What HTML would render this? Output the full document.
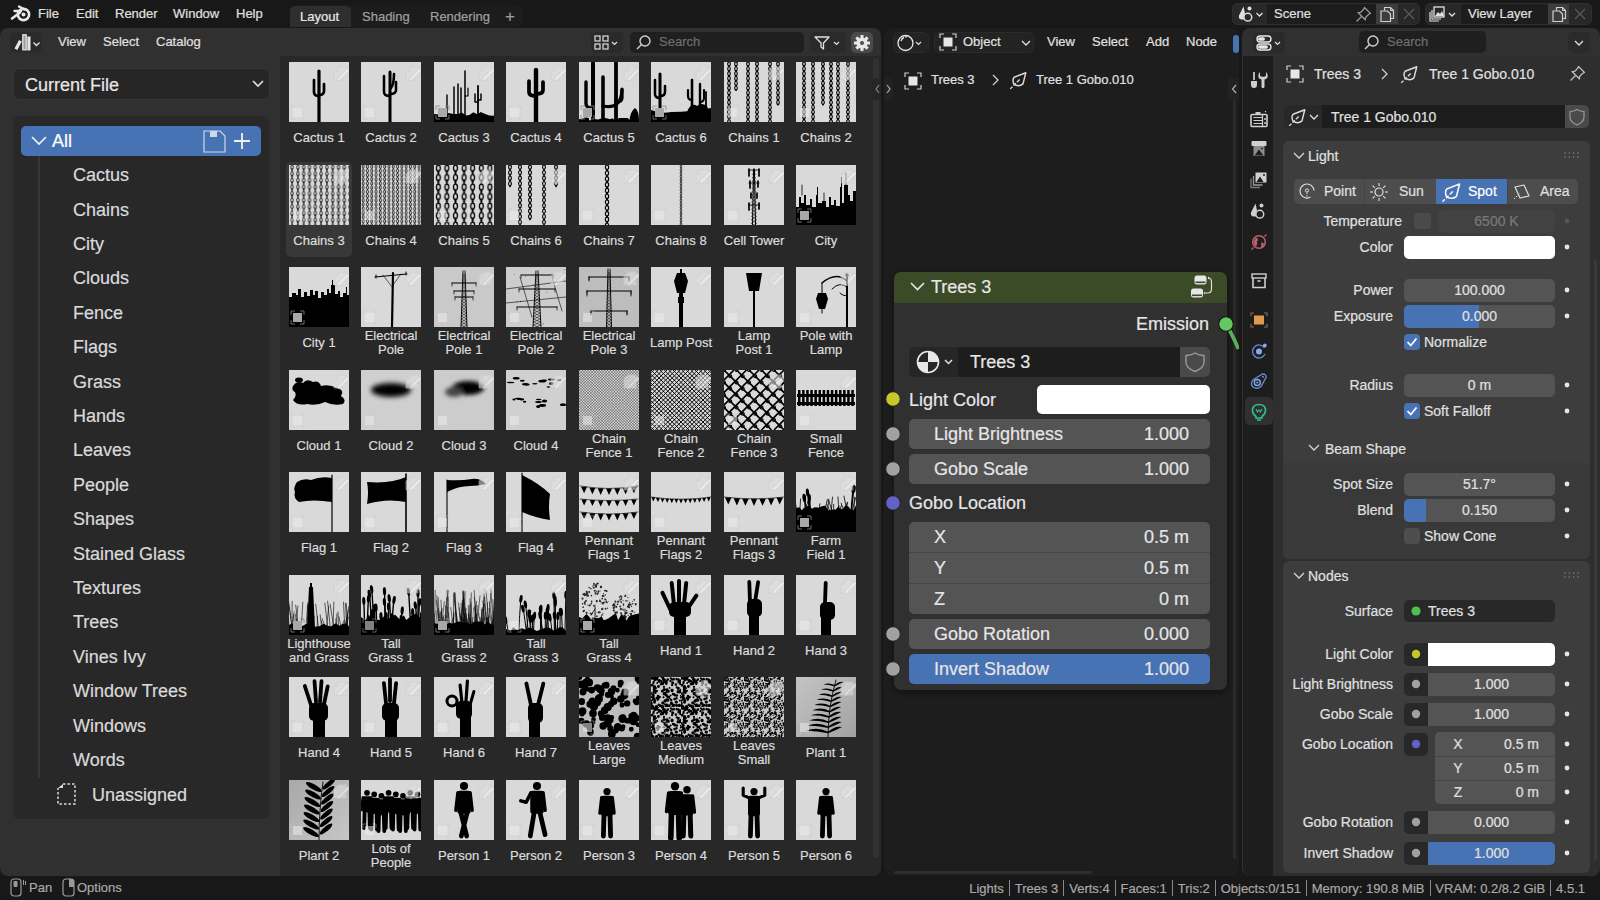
<!DOCTYPE html><html><head><meta charset="utf-8"><style>
html,body{margin:0;padding:0;}
body{width:1600px;height:900px;overflow:hidden;position:relative;background:#181818;font-family:"Liberation Sans",sans-serif;}
.t{position:absolute;white-space:nowrap;-webkit-text-stroke:0.2px currentColor;}
.b{position:absolute;}
svg{overflow:visible}
.sb-sep{display:inline-block;width:1px;height:16px;background:#8a8a8a;margin:0 4.8px 0 5.1px;}
</style></head><body>

<svg class="b" style="left:9px;top:3.3px;" width="24" height="20" viewBox="0 0 24 20">
<circle cx="14.5" cy="11.5" r="5.6" fill="none" stroke="#e8e8e8" stroke-width="2.6"/>
<circle cx="14.5" cy="11.5" r="2" fill="#e8e8e8"/>
<path d="M3 15.5 L11 9.5" stroke="#e8e8e8" stroke-width="2.6" stroke-linecap="round"/>
<path d="M5.5 8 L12 8" stroke="#e8e8e8" stroke-width="2.4" stroke-linecap="round"/>
<path d="M10 3.5 L15.5 6.5" stroke="#e8e8e8" stroke-width="2.4" stroke-linecap="round"/>
</svg>
<div class="t" style="left:38px;top:5.0px;font-size:13px;line-height:18px;color:#e0e0e0;">File</div>
<div class="t" style="left:76px;top:5.0px;font-size:13px;line-height:18px;color:#e0e0e0;">Edit</div>
<div class="t" style="left:115px;top:5.0px;font-size:13px;line-height:18px;color:#e0e0e0;">Render</div>
<div class="t" style="left:173px;top:5.0px;font-size:13px;line-height:18px;color:#e0e0e0;">Window</div>
<div class="t" style="left:236px;top:5.0px;font-size:13px;line-height:18px;color:#e0e0e0;">Help</div>
<div class="b" style="left:290px;top:5px;width:233px;height:22px;background:#1c1c1c;border-radius:6px;"></div>
<div class="b" style="left:290px;top:6px;width:61px;height:21px;background:#2e2e2e;border-radius:0px;border-radius:5px 5px 1px 1px;"></div>
<div class="t" style="left:300px;top:8.0px;font-size:13px;line-height:18px;color:#e8e8e8;">Layout</div>
<div class="t" style="left:362px;top:8.0px;font-size:13px;line-height:18px;color:#a0a0a0;">Shading</div>
<div class="t" style="left:430px;top:8.0px;font-size:13px;line-height:18px;color:#a0a0a0;">Rendering</div>
<div class="t" style="left:505px;top:4.5px;font-size:17px;line-height:23px;color:#9a9a9a;">+</div>
<div class="b" style="left:1232px;top:3px;width:188px;height:22px;background:#282828;border-radius:5px;border:1px solid #2e2e2e;box-sizing:border-box;"></div>
<div class="b" style="left:1267px;top:4px;width:109px;height:20px;background:#1d1d1d;border-radius:0px;"></div>
<div class="b" style="left:1376px;top:4px;width:22px;height:20px;background:#3d3d3d;border-radius:0px;"></div>
<div class="t" style="left:1274px;top:5.0px;font-size:13px;line-height:18px;color:#e0e0e0;">Scene</div>
<svg class="b" style="left:1237px;top:5px;" width="30" height="18" viewBox="0 0 30 18"><path d="M6.5 1.5 L2 10.5 Q1.2 14.5 5 14.5 L7.5 14.5 Q6 12 7.2 9.5 L8 8.5 Z" fill="#e0e0e0"/><circle cx="10.8" cy="12.2" r="3.9" fill="none" stroke="#e0e0e0" stroke-width="1.5"/><circle cx="12.5" cy="3.5" r="2" fill="#e0e0e0"/><path d="M19.5 8 l3 3 l3 -3" fill="none" stroke="#e0e0e0" stroke-width="1.3"/></svg>
<svg class="b" style="left:1355px;top:5px;" width="18" height="18" viewBox="0 0 18 18"><path d="M9.5 2.5 L15.5 8.5 L13.5 9.5 L10.5 12.5 L10.5 15 L3 7.5 L5.5 7.5 L8.5 4.5 Z" fill="none" stroke="#9a9a9a" stroke-width="1.2" stroke-linejoin="round"/><path d="M6.5 11.5 L1.5 16.5" stroke="#9a9a9a" stroke-width="1.2"/></svg>
<svg class="b" style="left:1379px;top:6px;" width="16" height="17" viewBox="0 0 16 17"><path d="M5.5 4.5 V1.5 H11.5 L14.5 4.5 V12.5 H11.5" fill="none" stroke="#d0d0d0" stroke-width="1.2"/><path d="M11.5 1.5 V4.5 H14.5" fill="none" stroke="#d0d0d0" stroke-width="1"/><path d="M2 5 H8.5 L11.5 8 V15.5 H2 Z" fill="none" stroke="#d0d0d0" stroke-width="1.2"/></svg>
<svg class="b" style="left:1402px;top:7px;" width="14" height="14" viewBox="0 0 14 14"><path d="M2 2 L12 12 M12 2 L2 12" stroke="#5a5a5a" stroke-width="1.3"/></svg>
<div class="b" style="left:1425px;top:3px;width:167px;height:22px;background:#282828;border-radius:5px;border:1px solid #2e2e2e;box-sizing:border-box;"></div>
<div class="b" style="left:1461px;top:4px;width:87px;height:20px;background:#1d1d1d;border-radius:0px;"></div>
<div class="b" style="left:1548px;top:4px;width:21px;height:20px;background:#3d3d3d;border-radius:0px;"></div>
<div class="t" style="left:1468px;top:5.0px;font-size:13px;line-height:18px;color:#e0e0e0;">View Layer</div>
<svg class="b" style="left:1429px;top:5px;" width="32" height="18" viewBox="0 0 32 18">
<rect x="5" y="2" width="10" height="10" fill="#282828" stroke="#e0e0e0" stroke-width="1.3"/>
<path d="M3 5 V14 H12" fill="none" stroke="#e0e0e0" stroke-width="1.2"/>
<path d="M1 7 V16 H10" fill="none" stroke="#e0e0e0" stroke-width="1.2"/>
<path d="M6 11 L9 7 L11 9 L13 6 L15 11 Z" fill="#e0e0e0"/>
<path d="M20 8 l3 3 l3 -3" fill="none" stroke="#e0e0e0" stroke-width="1.3"/></svg>
<svg class="b" style="left:1551px;top:6px;" width="16" height="17" viewBox="0 0 16 17"><path d="M5.5 4.5 V1.5 H11.5 L14.5 4.5 V12.5 H11.5" fill="none" stroke="#d0d0d0" stroke-width="1.2"/><path d="M11.5 1.5 V4.5 H14.5" fill="none" stroke="#d0d0d0" stroke-width="1"/><path d="M2 5 H8.5 L11.5 8 V15.5 H2 Z" fill="none" stroke="#d0d0d0" stroke-width="1.2"/></svg>
<svg class="b" style="left:1573px;top:7px;" width="14" height="14" viewBox="0 0 14 14"><path d="M2 2 L12 12 M12 2 L2 12" stroke="#5a5a5a" stroke-width="1.3"/></svg>
<svg class="b" style="left:8px;top:877px;" width="48" height="22" viewBox="0 0 48 22">
<rect x="3" y="2" width="10" height="17" rx="3" fill="none" stroke="#9a9a9a" stroke-width="1.2"/>
<rect x="5.5" y="4" width="4" height="6" rx="1" fill="#9a9a9a"/>
<path d="M15.5 3 V8 M17.5 4 V8" stroke="#9a9a9a" stroke-width="1"/></svg>
<div class="t" style="left:29px;top:879.0px;font-size:13px;line-height:18px;color:#a8a8a8;">Pan</div>
<svg class="b" style="left:60px;top:877px;" width="22" height="22" viewBox="0 0 22 22">
<rect x="3" y="2" width="11" height="17" rx="3" fill="none" stroke="#9a9a9a" stroke-width="1.2"/>
<path d="M9 2 H11 Q14 2 14 5 V10 H9 Z" fill="#9a9a9a"/></svg>
<div class="t" style="left:77px;top:879.0px;font-size:13px;line-height:18px;color:#a8a8a8;">Options</div>
<div class="t" style="right:15px;top:878px;height:20px;display:flex;align-items:center;font-size:13px;color:#a8a8a8;-webkit-text-stroke:0.2px #a8a8a8;"><span>Lights</span><span class="sb-sep"></span><span>Trees 3</span><span class="sb-sep"></span><span>Verts:4</span><span class="sb-sep"></span><span>Faces:1</span><span class="sb-sep"></span><span>Tris:2</span><span class="sb-sep"></span><span>Objects:0/151</span><span class="sb-sep"></span><span>Memory: 190.8 MiB</span><span class="sb-sep"></span><span>VRAM: 0.2/8.2 GiB</span><span class="sb-sep"></span><span>4.5.1</span></div>
<div class="b" style="left:0px;top:28px;width:881px;height:848px;background:#303030;border-radius:8px;"></div>
<div class="b" style="left:280px;top:56px;width:601px;height:820px;background:#282828;border-radius:0px;border-radius:0 0 8px 0;"></div>
<div class="b" style="left:10px;top:32px;width:32px;height:21px;background:#2a2a2a;border-radius:5px;border:1px solid #2c2c2c;box-sizing:border-box;"></div>
<svg class="b" style="left:13px;top:33px;" width="30" height="20" viewBox="0 0 30 20">
<path d="M1.5 15.5 L6 7 L8.8 8.6 L4.3 17 Z" fill="#e6e6e6"/>
<rect x="9.8" y="1.8" width="3.4" height="15" fill="#9a9a9a" stroke="#e6e6e6" stroke-width="1.3"/>
<rect x="14.3" y="3.5" width="3.2" height="14" fill="#e6e6e6"/>
<path d="M20.5 9.5 l3 3 l3 -3" fill="none" stroke="#e6e6e6" stroke-width="1.3"/></svg>
<div class="t" style="left:58px;top:33.0px;font-size:13px;line-height:18px;color:#e0e0e0;">View</div>
<div class="t" style="left:103px;top:33.0px;font-size:13px;line-height:18px;color:#e0e0e0;">Select</div>
<div class="t" style="left:156px;top:33.0px;font-size:13px;line-height:18px;color:#e0e0e0;">Catalog</div>
<div class="b" style="left:591px;top:32px;width:32px;height:21px;background:#2a2a2a;border-radius:5px;"></div>
<svg class="b" style="left:593px;top:33px;" width="30" height="20" viewBox="0 0 30 20">
<rect x="2" y="3" width="5" height="5" fill="none" stroke="#e0e0e0" stroke-width="1.2"/>
<rect x="10" y="3" width="5" height="5" fill="none" stroke="#e0e0e0" stroke-width="1.2"/>
<rect x="2" y="11" width="5" height="5" fill="none" stroke="#e0e0e0" stroke-width="1.2"/>
<rect x="10" y="11" width="5" height="5" fill="none" stroke="#e0e0e0" stroke-width="1.2"/>
<path d="M19 9 l2.5 2.5 l2.5 -2.5" fill="none" stroke="#e0e0e0" stroke-width="1.2"/></svg>
<div class="b" style="left:630px;top:32px;width:174px;height:21px;background:#1f1f1f;border-radius:5px;"></div>
<svg class="b" style="left:634px;top:33px;" width="20" height="20" viewBox="0 0 20 20"><circle cx="11" cy="8" r="5" fill="none" stroke="#d0d0d0" stroke-width="1.4"/><path d="M7.5 11.5 L3 16" stroke="#d0d0d0" stroke-width="1.5"/></svg>
<div class="t" style="left:659px;top:33.0px;font-size:13px;line-height:18px;color:#6e6e6e;">Search</div>
<div class="b" style="left:810px;top:32px;width:36px;height:21px;background:#2a2a2a;border-radius:5px;"></div>
<svg class="b" style="left:812px;top:33px;" width="34" height="20" viewBox="0 0 34 20"><path d="M3 4 H17 L11.5 10 V16 L9 14 V10 Z" fill="none" stroke="#e0e0e0" stroke-width="1.3" stroke-linejoin="round"/><path d="M22 9 l2.5 2.5 l2.5 -2.5" fill="none" stroke="#e0e0e0" stroke-width="1.2"/></svg>
<div class="b" style="left:851px;top:32px;width:22px;height:21px;background:#4a4a4a;border-radius:5px;"></div>
<svg class="b" style="left:852px;top:33px;" width="20" height="20" viewBox="0 0 20 20"><g transform="translate(10,10)"><circle r="5.6" fill="#e8e8e8"/>
<g fill="#e8e8e8"><rect x="-1.5" y="-8" width="3" height="4" transform="rotate(0)"/><rect x="-1.5" y="-8" width="3" height="4" transform="rotate(45)"/><rect x="-1.5" y="-8" width="3" height="4" transform="rotate(90)"/><rect x="-1.5" y="-8" width="3" height="4" transform="rotate(135)"/><rect x="-1.5" y="-8" width="3" height="4" transform="rotate(180)"/><rect x="-1.5" y="-8" width="3" height="4" transform="rotate(225)"/><rect x="-1.5" y="-8" width="3" height="4" transform="rotate(270)"/><rect x="-1.5" y="-8" width="3" height="4" transform="rotate(315)"/></g>
<circle r="2" fill="#4a4a4a"/></g></svg>
<div class="b" style="left:13px;top:68px;width:257px;height:32px;background:#262626;border-radius:6px;border:1px solid #363636;box-sizing:border-box;"></div>
<div class="t" style="left:25px;top:72.8px;font-size:18px;line-height:25px;color:#e8e8e8;">Current File</div>
<svg class="b" style="left:251px;top:78px;" width="14" height="12" viewBox="0 0 14 12"><path d="M2 3 L7 8 L12 3" fill="none" stroke="#e0e0e0" stroke-width="1.6"/></svg>
<div class="b" style="left:13px;top:116px;width:256px;height:703px;background:#282828;border-radius:6px;"></div>
<div class="b" style="left:21px;top:126px;width:240px;height:30px;background:#4772b3;border-radius:5px;"></div>
<svg class="b" style="left:29px;top:132px;" width="20" height="18" viewBox="0 0 20 18"><path d="M3 5 L10 12 L17 5" fill="none" stroke="#f0f0f0" stroke-width="1.7"/></svg>
<div class="t" style="left:52px;top:128.5px;font-size:18px;line-height:25px;color:#ffffff;">All</div>
<svg class="b" style="left:201px;top:128px;" width="28" height="26" viewBox="0 0 28 26"><path d="M3 3 H19 L24 8 V24 H3 Z" fill="none" stroke="#cfd8e8" stroke-width="1.2"/><rect x="9" y="3" width="7" height="6" fill="#cfd8e8"/></svg>
<svg class="b" style="left:232px;top:130px;" width="20" height="22" viewBox="0 0 20 22"><path d="M10 3 V19 M2 11 H18" stroke="#f0f0f0" stroke-width="1.8"/></svg>
<div class="b" style="left:38px;top:156px;width:2px;height:622px;background:#363636;border-radius:0px;"></div>
<div class="t" style="left:73px;top:163.1px;font-size:18px;line-height:25px;color:#dadada;">Cactus</div>
<div class="t" style="left:73px;top:197.5px;font-size:18px;line-height:25px;color:#dadada;">Chains</div>
<div class="t" style="left:73px;top:231.9px;font-size:18px;line-height:25px;color:#dadada;">City</div>
<div class="t" style="left:73px;top:266.3px;font-size:18px;line-height:25px;color:#dadada;">Clouds</div>
<div class="t" style="left:73px;top:300.7px;font-size:18px;line-height:25px;color:#dadada;">Fence</div>
<div class="t" style="left:73px;top:335.1px;font-size:18px;line-height:25px;color:#dadada;">Flags</div>
<div class="t" style="left:73px;top:369.5px;font-size:18px;line-height:25px;color:#dadada;">Grass</div>
<div class="t" style="left:73px;top:403.9px;font-size:18px;line-height:25px;color:#dadada;">Hands</div>
<div class="t" style="left:73px;top:438.3px;font-size:18px;line-height:25px;color:#dadada;">Leaves</div>
<div class="t" style="left:73px;top:472.7px;font-size:18px;line-height:25px;color:#dadada;">People</div>
<div class="t" style="left:73px;top:507.1px;font-size:18px;line-height:25px;color:#dadada;">Shapes</div>
<div class="t" style="left:73px;top:541.5px;font-size:18px;line-height:25px;color:#dadada;">Stained Glass</div>
<div class="t" style="left:73px;top:575.9px;font-size:18px;line-height:25px;color:#dadada;">Textures</div>
<div class="t" style="left:73px;top:610.3px;font-size:18px;line-height:25px;color:#dadada;">Trees</div>
<div class="t" style="left:73px;top:644.7px;font-size:18px;line-height:25px;color:#dadada;">Vines Ivy</div>
<div class="t" style="left:73px;top:679.1px;font-size:18px;line-height:25px;color:#dadada;">Window Trees</div>
<div class="t" style="left:73px;top:713.5px;font-size:18px;line-height:25px;color:#dadada;">Windows</div>
<div class="t" style="left:73px;top:747.9px;font-size:18px;line-height:25px;color:#dadada;">Words</div>
<svg class="b" style="left:55px;top:782px;" width="24" height="26" viewBox="0 0 24 26"><path d="M3 6 L8 2 V6 Z" fill="#dadada"/><path d="M8 2 H20 V22 H3 V6" fill="none" stroke="#dadada" stroke-width="1.5" stroke-dasharray="2.5 2"/></svg>
<div class="t" style="left:92px;top:783.0px;font-size:18px;line-height:25px;color:#dadada;">Unassigned</div>
<svg width="0" height="0" style="position:absolute"><defs><filter id="bl1" x="-50%" y="-50%" width="200%" height="200%"><feGaussianBlur stdDeviation="2"/></filter><filter id="bl2" x="-50%" y="-50%" width="200%" height="200%"><feGaussianBlur stdDeviation="2.6"/></filter></defs></svg>
<div class="b" style="left:286px;top:162px;width:66px;height:95px;background:#383838;border-radius:5px;"></div>
<svg class="b" style="left:289px;top:62px;overflow:hidden;" width="60" height="60" viewBox="0 0 60 60"><rect width="60" height="60" fill="#d9d9d9"/><path d="M30 60 V9" fill="none" stroke="#000" stroke-width="3.2" stroke-linecap="round" stroke-linejoin="round"/><path d="M30 34 Q25 34 25 30 V18" fill="none" stroke="#000" stroke-width="2.72" stroke-linecap="round" stroke-linejoin="round"/><path d="M30 33 Q35 33 35 29 V22" fill="none" stroke="#000" stroke-width="2.72" stroke-linecap="round" stroke-linejoin="round"/><g opacity="0.6"><path d="M49 5 H57 V18 H45 V9 Z" fill="#e0e0e0" stroke="#cdcdcd" stroke-width="0.9"/><path d="M49 5 V9 H45" fill="none" stroke="#cdcdcd" stroke-width="0.9"/><path d="M50 17 L58.5 8.5" stroke="#c8c8c8" stroke-width="4.2" stroke-linecap="round"/><path d="M50 17 L58.5 8.5" stroke="#f2f2f2" stroke-width="2.8" stroke-linecap="round"/></g><g opacity="0.55"><rect x="4" y="46" width="9" height="9" fill="#ececec"/><path d="M2 48 V44 H6 M11 44 H15 V48 M2 53 V57 H6 M11 57 H15 V53" stroke="#c8c8c8" stroke-width="0.8" fill="none"/></g></svg>
<div class="t" style="left:279.0px;width:80px;text-align:center;top:128.8px;font-size:13px;line-height:18px;color:#dcdcdc;">Cactus 1</div>
<svg class="b" style="left:361px;top:62px;overflow:hidden;" width="60" height="60" viewBox="0 0 60 60"><rect width="60" height="60" fill="#d9d9d9"/><path d="M29 60 V10" fill="none" stroke="#000" stroke-width="3.0" stroke-linecap="round" stroke-linejoin="round"/><path d="M29 34 Q23 34 23 30 V14" fill="none" stroke="#000" stroke-width="2.55" stroke-linecap="round" stroke-linejoin="round"/><path d="M29 32 Q35 32 35 28 V20" fill="none" stroke="#000" stroke-width="2.55" stroke-linecap="round" stroke-linejoin="round"/><path d="M30 26 Q33 22 33 12" fill="none" stroke="#000" stroke-width="2.6" stroke-linecap="round" stroke-linejoin="round"/><g opacity="0.6"><path d="M49 5 H57 V18 H45 V9 Z" fill="#e0e0e0" stroke="#cdcdcd" stroke-width="0.9"/><path d="M49 5 V9 H45" fill="none" stroke="#cdcdcd" stroke-width="0.9"/><path d="M50 17 L58.5 8.5" stroke="#c8c8c8" stroke-width="4.2" stroke-linecap="round"/><path d="M50 17 L58.5 8.5" stroke="#f2f2f2" stroke-width="2.8" stroke-linecap="round"/></g><g opacity="0.55"><rect x="4" y="46" width="9" height="9" fill="#ececec"/><path d="M2 48 V44 H6 M11 44 H15 V48 M2 53 V57 H6 M11 57 H15 V53" stroke="#c8c8c8" stroke-width="0.8" fill="none"/></g></svg>
<div class="t" style="left:351.0px;width:80px;text-align:center;top:128.8px;font-size:13px;line-height:18px;color:#dcdcdc;">Cactus 2</div>
<svg class="b" style="left:434px;top:62px;overflow:hidden;" width="60" height="60" viewBox="0 0 60 60"><rect width="60" height="60" fill="#d9d9d9"/><path d="M0 60 V52 L2.7 52.2 L5.8 52.4 L9.7 50.3 L11.7 53.3 L14.5 50.9 L19.5 51.9 L24.0 51.9 L27.9 50.6 L31.8 53.5 L35.4 53.0 L39.4 50.3 L43.7 52.4 L46.6 50.1 L51.2 51.9 L55.4 53.5 L59.5 53.7 L60.0 53.2 L60 60 Z" fill="#000"/><path d="M31 55 V9" fill="none" stroke="#000" stroke-width="1.5" stroke-linecap="round" stroke-linejoin="round"/><path d="M31 34 H34 V26" fill="none" stroke="#000" stroke-width="1.2000000000000002" stroke-linecap="round" stroke-linejoin="round"/><path d="M20 55 V25" fill="none" stroke="#000" stroke-width="1.5" stroke-linecap="round" stroke-linejoin="round"/><path d="M24 55 V22" fill="none" stroke="#000" stroke-width="1.5" stroke-linecap="round" stroke-linejoin="round"/><path d="M27 55 V26" fill="none" stroke="#000" stroke-width="1.5" stroke-linecap="round" stroke-linejoin="round"/><path d="M44 55 V24" fill="none" stroke="#000" stroke-width="1.8" stroke-linecap="round" stroke-linejoin="round"/><path d="M44 40 H41 V32" fill="none" stroke="#000" stroke-width="1.4400000000000002" stroke-linecap="round" stroke-linejoin="round"/><path d="M44 38 H47 V32" fill="none" stroke="#000" stroke-width="1.4400000000000002" stroke-linecap="round" stroke-linejoin="round"/><path d="M13 55 V33" fill="none" stroke="#000" stroke-width="1.4" stroke-linecap="round" stroke-linejoin="round"/><g opacity="0.6"><path d="M49 5 H57 V18 H45 V9 Z" fill="#e0e0e0" stroke="#cdcdcd" stroke-width="0.9"/><path d="M49 5 V9 H45" fill="none" stroke="#cdcdcd" stroke-width="0.9"/><path d="M50 17 L58.5 8.5" stroke="#c8c8c8" stroke-width="4.2" stroke-linecap="round"/><path d="M50 17 L58.5 8.5" stroke="#f2f2f2" stroke-width="2.8" stroke-linecap="round"/></g><rect x="4" y="46" width="9" height="9" fill="#a8a8a8"/><path d="M2 48 V44 H6 M11 44 H15 V48 M2 53 V57 H6 M11 57 H15 V53" stroke="#888" stroke-width="0.8" fill="none"/></svg>
<div class="t" style="left:424.0px;width:80px;text-align:center;top:128.8px;font-size:13px;line-height:18px;color:#dcdcdc;">Cactus 3</div>
<svg class="b" style="left:506px;top:62px;overflow:hidden;" width="60" height="60" viewBox="0 0 60 60"><rect width="60" height="60" fill="#d9d9d9"/><path d="M30 60 V8" fill="none" stroke="#000" stroke-width="4.4" stroke-linecap="round" stroke-linejoin="round"/><path d="M30 34 Q23 34 23 30 V19" fill="none" stroke="#000" stroke-width="3.74" stroke-linecap="round" stroke-linejoin="round"/><path d="M30 32 Q37 32 37 28 V20" fill="none" stroke="#000" stroke-width="3.74" stroke-linecap="round" stroke-linejoin="round"/><g opacity="0.6"><path d="M49 5 H57 V18 H45 V9 Z" fill="#e0e0e0" stroke="#cdcdcd" stroke-width="0.9"/><path d="M49 5 V9 H45" fill="none" stroke="#cdcdcd" stroke-width="0.9"/><path d="M50 17 L58.5 8.5" stroke="#c8c8c8" stroke-width="4.2" stroke-linecap="round"/><path d="M50 17 L58.5 8.5" stroke="#f2f2f2" stroke-width="2.8" stroke-linecap="round"/></g><g opacity="0.55"><rect x="4" y="46" width="9" height="9" fill="#ececec"/><path d="M2 48 V44 H6 M11 44 H15 V48 M2 53 V57 H6 M11 57 H15 V53" stroke="#c8c8c8" stroke-width="0.8" fill="none"/></g></svg>
<div class="t" style="left:496.0px;width:80px;text-align:center;top:128.8px;font-size:13px;line-height:18px;color:#dcdcdc;">Cactus 4</div>
<svg class="b" style="left:579px;top:62px;overflow:hidden;" width="60" height="60" viewBox="0 0 60 60"><rect width="60" height="60" fill="#d9d9d9"/><path d="M0 60 V57 L3.9 57.7 L8.3 58.3 L12.5 58.3 L14.6 56.9 L19.4 57.4 L24.1 55.8 L27.5 56.2 L31.1 57.2 L33.2 56.2 L36.0 58.2 L40.3 56.0 L44.7 55.9 L48.6 55.9 L50.6 58.1 L53.2 56.1 L58.1 58.1 L60.0 58.4 L60 60 Z" fill="#000"/><path d="M14 60 V1" fill="none" stroke="#000" stroke-width="4" stroke-linecap="round" stroke-linejoin="round"/><path d="M14 46 Q7 46 7 42 V20" fill="none" stroke="#000" stroke-width="3.4" stroke-linecap="round" stroke-linejoin="round"/><path d="M24 60 V15" fill="none" stroke="#000" stroke-width="3.6" stroke-linecap="round" stroke-linejoin="round"/><path d="M24 44 Q42 48 43 28" fill="none" stroke="#000" stroke-width="3.2" stroke-linecap="round" stroke-linejoin="round"/><path d="M37 60 V1" fill="none" stroke="#000" stroke-width="3.8" stroke-linecap="round" stroke-linejoin="round"/><path d="M37 40 Q43 40 43 36 V27" fill="none" stroke="#000" stroke-width="3.23" stroke-linecap="round" stroke-linejoin="round"/><path d="M50 60 Q52 48 56 46 Q60 48 60 60 Z" fill="#000"/><path d="M0 60 Q4 54 10 56 L10 60 Z" fill="#000"/><g opacity="0.6"><path d="M49 5 H57 V18 H45 V9 Z" fill="#e0e0e0" stroke="#cdcdcd" stroke-width="0.9"/><path d="M49 5 V9 H45" fill="none" stroke="#cdcdcd" stroke-width="0.9"/><path d="M50 17 L58.5 8.5" stroke="#c8c8c8" stroke-width="4.2" stroke-linecap="round"/><path d="M50 17 L58.5 8.5" stroke="#f2f2f2" stroke-width="2.8" stroke-linecap="round"/></g><rect x="4" y="46" width="9" height="9" fill="#a8a8a8"/><path d="M2 48 V44 H6 M11 44 H15 V48 M2 53 V57 H6 M11 57 H15 V53" stroke="#888" stroke-width="0.8" fill="none"/></svg>
<div class="t" style="left:569.0px;width:80px;text-align:center;top:128.8px;font-size:13px;line-height:18px;color:#dcdcdc;">Cactus 5</div>
<svg class="b" style="left:651px;top:62px;overflow:hidden;" width="60" height="60" viewBox="0 0 60 60"><rect width="60" height="60" fill="#d9d9d9"/><path d="M0 60 V48 Q10 52 20 50 Q40 50 60 46 V60 Z" fill="#000"/><path d="M9 52 V12" fill="none" stroke="#000" stroke-width="3" stroke-linecap="round" stroke-linejoin="round"/><path d="M9 36 Q4 36 4 32 V18" fill="none" stroke="#000" stroke-width="2.55" stroke-linecap="round" stroke-linejoin="round"/><path d="M9 34 Q14 34 14 30 V24" fill="none" stroke="#000" stroke-width="2.55" stroke-linecap="round" stroke-linejoin="round"/><path d="M41 50 V18" fill="none" stroke="#000" stroke-width="2.6" stroke-linecap="round" stroke-linejoin="round"/><path d="M41 38 Q37 38 37 34 V28" fill="none" stroke="#000" stroke-width="2.21" stroke-linecap="round" stroke-linejoin="round"/><path d="M49 50 V22" fill="none" stroke="#000" stroke-width="2.4" stroke-linecap="round" stroke-linejoin="round"/><path d="M49 40 Q53 40 53 36 V28" fill="none" stroke="#000" stroke-width="2.04" stroke-linecap="round" stroke-linejoin="round"/><path d="M55 50 V30" fill="none" stroke="#000" stroke-width="1.8" stroke-linecap="round" stroke-linejoin="round"/><path d="M36 50 Q40 40 46 44 Q50 40 56 44 L58 50 Z" fill="#000"/><g opacity="0.6"><path d="M49 5 H57 V18 H45 V9 Z" fill="#e0e0e0" stroke="#cdcdcd" stroke-width="0.9"/><path d="M49 5 V9 H45" fill="none" stroke="#cdcdcd" stroke-width="0.9"/><path d="M50 17 L58.5 8.5" stroke="#c8c8c8" stroke-width="4.2" stroke-linecap="round"/><path d="M50 17 L58.5 8.5" stroke="#f2f2f2" stroke-width="2.8" stroke-linecap="round"/></g><rect x="4" y="46" width="9" height="9" fill="#a8a8a8"/><path d="M2 48 V44 H6 M11 44 H15 V48 M2 53 V57 H6 M11 57 H15 V53" stroke="#888" stroke-width="0.8" fill="none"/></svg>
<div class="t" style="left:641.0px;width:80px;text-align:center;top:128.8px;font-size:13px;line-height:18px;color:#dcdcdc;">Cactus 6</div>
<svg class="b" style="left:724px;top:62px;overflow:hidden;" width="60" height="60" viewBox="0 0 60 60"><rect width="60" height="60" fill="#d9d9d9"/><path d="M3.7 2a1.3 2 0 1 0 2.6 0a1.3 2 0 1 0 -2.6 0M3.7 6.8a1.3 2 0 1 0 2.6 0a1.3 2 0 1 0 -2.6 0M3.7 11.6a1.3 2 0 1 0 2.6 0a1.3 2 0 1 0 -2.6 0M3.7 16.4a1.3 2 0 1 0 2.6 0a1.3 2 0 1 0 -2.6 0M3.7 21.2a1.3 2 0 1 0 2.6 0a1.3 2 0 1 0 -2.6 0M3.7 26a1.3 2 0 1 0 2.6 0a1.3 2 0 1 0 -2.6 0M3.7 30.8a1.3 2 0 1 0 2.6 0a1.3 2 0 1 0 -2.6 0M3.7 35.6a1.3 2 0 1 0 2.6 0a1.3 2 0 1 0 -2.6 0M3.7 40.4a1.3 2 0 1 0 2.6 0a1.3 2 0 1 0 -2.6 0M3.7 45.2a1.3 2 0 1 0 2.6 0a1.3 2 0 1 0 -2.6 0M3.7 50a1.3 2 0 1 0 2.6 0a1.3 2 0 1 0 -2.6 0M3.7 54.8a1.3 2 0 1 0 2.6 0a1.3 2 0 1 0 -2.6 0M3.7 59.6a1.3 2 0 1 0 2.6 0a1.3 2 0 1 0 -2.6 0" fill="none" stroke="#000" stroke-width="1.1"/><path d="M5 3.7V5.1M5 8.5V9.9M5 13.3V14.7M5 18.1V19.5M5 22.9V24.3M5 27.7V29.1M5 32.5V33.9M5 37.3V38.7M5 42.1V43.5M5 46.9V48.3M5 51.7V53.1M5 56.5V57.9M5 61.3V62.7" stroke="#000" stroke-width="1.43"/><path d="M10.7 2a1.3 2 0 1 0 2.6 0a1.3 2 0 1 0 -2.6 0M10.7 6.8a1.3 2 0 1 0 2.6 0a1.3 2 0 1 0 -2.6 0M10.7 11.6a1.3 2 0 1 0 2.6 0a1.3 2 0 1 0 -2.6 0M10.7 16.4a1.3 2 0 1 0 2.6 0a1.3 2 0 1 0 -2.6 0M10.7 21.2a1.3 2 0 1 0 2.6 0a1.3 2 0 1 0 -2.6 0M10.7 26a1.3 2 0 1 0 2.6 0a1.3 2 0 1 0 -2.6 0" fill="none" stroke="#000" stroke-width="1.1"/><path d="M12 3.7V5.1M12 8.5V9.9M12 13.3V14.7M12 18.1V19.5M12 22.9V24.3M12 27.7V29.1" stroke="#000" stroke-width="1.43"/><path d="M22.7 2a1.3 2 0 1 0 2.6 0a1.3 2 0 1 0 -2.6 0M22.7 6.8a1.3 2 0 1 0 2.6 0a1.3 2 0 1 0 -2.6 0M22.7 11.6a1.3 2 0 1 0 2.6 0a1.3 2 0 1 0 -2.6 0M22.7 16.4a1.3 2 0 1 0 2.6 0a1.3 2 0 1 0 -2.6 0M22.7 21.2a1.3 2 0 1 0 2.6 0a1.3 2 0 1 0 -2.6 0M22.7 26a1.3 2 0 1 0 2.6 0a1.3 2 0 1 0 -2.6 0M22.7 30.8a1.3 2 0 1 0 2.6 0a1.3 2 0 1 0 -2.6 0M22.7 35.6a1.3 2 0 1 0 2.6 0a1.3 2 0 1 0 -2.6 0M22.7 40.4a1.3 2 0 1 0 2.6 0a1.3 2 0 1 0 -2.6 0M22.7 45.2a1.3 2 0 1 0 2.6 0a1.3 2 0 1 0 -2.6 0M22.7 50a1.3 2 0 1 0 2.6 0a1.3 2 0 1 0 -2.6 0M22.7 54.8a1.3 2 0 1 0 2.6 0a1.3 2 0 1 0 -2.6 0M22.7 59.6a1.3 2 0 1 0 2.6 0a1.3 2 0 1 0 -2.6 0" fill="none" stroke="#000" stroke-width="1.1"/><path d="M24 3.7V5.1M24 8.5V9.9M24 13.3V14.7M24 18.1V19.5M24 22.9V24.3M24 27.7V29.1M24 32.5V33.9M24 37.3V38.7M24 42.1V43.5M24 46.9V48.3M24 51.7V53.1M24 56.5V57.9M24 61.3V62.7" stroke="#000" stroke-width="1.43"/><path d="M31.7 2a1.3 2 0 1 0 2.6 0a1.3 2 0 1 0 -2.6 0M31.7 6.8a1.3 2 0 1 0 2.6 0a1.3 2 0 1 0 -2.6 0M31.7 11.6a1.3 2 0 1 0 2.6 0a1.3 2 0 1 0 -2.6 0M31.7 16.4a1.3 2 0 1 0 2.6 0a1.3 2 0 1 0 -2.6 0M31.7 21.2a1.3 2 0 1 0 2.6 0a1.3 2 0 1 0 -2.6 0M31.7 26a1.3 2 0 1 0 2.6 0a1.3 2 0 1 0 -2.6 0M31.7 30.8a1.3 2 0 1 0 2.6 0a1.3 2 0 1 0 -2.6 0M31.7 35.6a1.3 2 0 1 0 2.6 0a1.3 2 0 1 0 -2.6 0M31.7 40.4a1.3 2 0 1 0 2.6 0a1.3 2 0 1 0 -2.6 0M31.7 45.2a1.3 2 0 1 0 2.6 0a1.3 2 0 1 0 -2.6 0M31.7 50a1.3 2 0 1 0 2.6 0a1.3 2 0 1 0 -2.6 0M31.7 54.8a1.3 2 0 1 0 2.6 0a1.3 2 0 1 0 -2.6 0M31.7 59.6a1.3 2 0 1 0 2.6 0a1.3 2 0 1 0 -2.6 0" fill="none" stroke="#000" stroke-width="1.1"/><path d="M33 3.7V5.1M33 8.5V9.9M33 13.3V14.7M33 18.1V19.5M33 22.9V24.3M33 27.7V29.1M33 32.5V33.9M33 37.3V38.7M33 42.1V43.5M33 46.9V48.3M33 51.7V53.1M33 56.5V57.9M33 61.3V62.7" stroke="#000" stroke-width="1.43"/><path d="M44.7 2a1.3 2 0 1 0 2.6 0a1.3 2 0 1 0 -2.6 0M44.7 6.8a1.3 2 0 1 0 2.6 0a1.3 2 0 1 0 -2.6 0M44.7 11.6a1.3 2 0 1 0 2.6 0a1.3 2 0 1 0 -2.6 0M44.7 16.4a1.3 2 0 1 0 2.6 0a1.3 2 0 1 0 -2.6 0M44.7 21.2a1.3 2 0 1 0 2.6 0a1.3 2 0 1 0 -2.6 0M44.7 26a1.3 2 0 1 0 2.6 0a1.3 2 0 1 0 -2.6 0M44.7 30.8a1.3 2 0 1 0 2.6 0a1.3 2 0 1 0 -2.6 0M44.7 35.6a1.3 2 0 1 0 2.6 0a1.3 2 0 1 0 -2.6 0M44.7 40.4a1.3 2 0 1 0 2.6 0a1.3 2 0 1 0 -2.6 0M44.7 45.2a1.3 2 0 1 0 2.6 0a1.3 2 0 1 0 -2.6 0M44.7 50a1.3 2 0 1 0 2.6 0a1.3 2 0 1 0 -2.6 0M44.7 54.8a1.3 2 0 1 0 2.6 0a1.3 2 0 1 0 -2.6 0M44.7 59.6a1.3 2 0 1 0 2.6 0a1.3 2 0 1 0 -2.6 0" fill="none" stroke="#000" stroke-width="1.1"/><path d="M46 3.7V5.1M46 8.5V9.9M46 13.3V14.7M46 18.1V19.5M46 22.9V24.3M46 27.7V29.1M46 32.5V33.9M46 37.3V38.7M46 42.1V43.5M46 46.9V48.3M46 51.7V53.1M46 56.5V57.9M46 61.3V62.7" stroke="#000" stroke-width="1.43"/><path d="M52.7 2a1.3 2 0 1 0 2.6 0a1.3 2 0 1 0 -2.6 0M52.7 6.8a1.3 2 0 1 0 2.6 0a1.3 2 0 1 0 -2.6 0M52.7 11.6a1.3 2 0 1 0 2.6 0a1.3 2 0 1 0 -2.6 0M52.7 16.4a1.3 2 0 1 0 2.6 0a1.3 2 0 1 0 -2.6 0M52.7 21.2a1.3 2 0 1 0 2.6 0a1.3 2 0 1 0 -2.6 0M52.7 26a1.3 2 0 1 0 2.6 0a1.3 2 0 1 0 -2.6 0M52.7 30.8a1.3 2 0 1 0 2.6 0a1.3 2 0 1 0 -2.6 0M52.7 35.6a1.3 2 0 1 0 2.6 0a1.3 2 0 1 0 -2.6 0M52.7 40.4a1.3 2 0 1 0 2.6 0a1.3 2 0 1 0 -2.6 0" fill="none" stroke="#000" stroke-width="1.1"/><path d="M54 3.7V5.1M54 8.5V9.9M54 13.3V14.7M54 18.1V19.5M54 22.9V24.3M54 27.7V29.1M54 32.5V33.9M54 37.3V38.7M54 42.1V43.5" stroke="#000" stroke-width="1.43"/><g opacity="0.6"><path d="M49 5 H57 V18 H45 V9 Z" fill="#e0e0e0" stroke="#cdcdcd" stroke-width="0.9"/><path d="M49 5 V9 H45" fill="none" stroke="#cdcdcd" stroke-width="0.9"/><path d="M50 17 L58.5 8.5" stroke="#c8c8c8" stroke-width="4.2" stroke-linecap="round"/><path d="M50 17 L58.5 8.5" stroke="#f2f2f2" stroke-width="2.8" stroke-linecap="round"/></g><g opacity="0.55"><rect x="4" y="46" width="9" height="9" fill="#ececec"/><path d="M2 48 V44 H6 M11 44 H15 V48 M2 53 V57 H6 M11 57 H15 V53" stroke="#c8c8c8" stroke-width="0.8" fill="none"/></g></svg>
<div class="t" style="left:714.0px;width:80px;text-align:center;top:128.8px;font-size:13px;line-height:18px;color:#dcdcdc;">Chains 1</div>
<svg class="b" style="left:796px;top:62px;overflow:hidden;" width="60" height="60" viewBox="0 0 60 60"><rect width="60" height="60" fill="#d9d9d9"/><path d="M6.7 2a1.3 2 0 1 0 2.6 0a1.3 2 0 1 0 -2.6 0M6.7 6.8a1.3 2 0 1 0 2.6 0a1.3 2 0 1 0 -2.6 0M6.7 11.6a1.3 2 0 1 0 2.6 0a1.3 2 0 1 0 -2.6 0M6.7 16.4a1.3 2 0 1 0 2.6 0a1.3 2 0 1 0 -2.6 0M6.7 21.2a1.3 2 0 1 0 2.6 0a1.3 2 0 1 0 -2.6 0M6.7 26a1.3 2 0 1 0 2.6 0a1.3 2 0 1 0 -2.6 0M6.7 30.8a1.3 2 0 1 0 2.6 0a1.3 2 0 1 0 -2.6 0M6.7 35.6a1.3 2 0 1 0 2.6 0a1.3 2 0 1 0 -2.6 0M6.7 40.4a1.3 2 0 1 0 2.6 0a1.3 2 0 1 0 -2.6 0M6.7 45.2a1.3 2 0 1 0 2.6 0a1.3 2 0 1 0 -2.6 0M6.7 50a1.3 2 0 1 0 2.6 0a1.3 2 0 1 0 -2.6 0M6.7 54.8a1.3 2 0 1 0 2.6 0a1.3 2 0 1 0 -2.6 0M6.7 59.6a1.3 2 0 1 0 2.6 0a1.3 2 0 1 0 -2.6 0" fill="none" stroke="#000" stroke-width="1.1"/><path d="M8 3.7V5.1M8 8.5V9.9M8 13.3V14.7M8 18.1V19.5M8 22.9V24.3M8 27.7V29.1M8 32.5V33.9M8 37.3V38.7M8 42.1V43.5M8 46.9V48.3M8 51.7V53.1M8 56.5V57.9M8 61.3V62.7" stroke="#000" stroke-width="1.43"/><path d="M15.7 2a1.3 2 0 1 0 2.6 0a1.3 2 0 1 0 -2.6 0M15.7 6.8a1.3 2 0 1 0 2.6 0a1.3 2 0 1 0 -2.6 0M15.7 11.6a1.3 2 0 1 0 2.6 0a1.3 2 0 1 0 -2.6 0M15.7 16.4a1.3 2 0 1 0 2.6 0a1.3 2 0 1 0 -2.6 0M15.7 21.2a1.3 2 0 1 0 2.6 0a1.3 2 0 1 0 -2.6 0M15.7 26a1.3 2 0 1 0 2.6 0a1.3 2 0 1 0 -2.6 0M15.7 30.8a1.3 2 0 1 0 2.6 0a1.3 2 0 1 0 -2.6 0M15.7 35.6a1.3 2 0 1 0 2.6 0a1.3 2 0 1 0 -2.6 0M15.7 40.4a1.3 2 0 1 0 2.6 0a1.3 2 0 1 0 -2.6 0M15.7 45.2a1.3 2 0 1 0 2.6 0a1.3 2 0 1 0 -2.6 0M15.7 50a1.3 2 0 1 0 2.6 0a1.3 2 0 1 0 -2.6 0M15.7 54.8a1.3 2 0 1 0 2.6 0a1.3 2 0 1 0 -2.6 0M15.7 59.6a1.3 2 0 1 0 2.6 0a1.3 2 0 1 0 -2.6 0" fill="none" stroke="#000" stroke-width="1.1"/><path d="M17 3.7V5.1M17 8.5V9.9M17 13.3V14.7M17 18.1V19.5M17 22.9V24.3M17 27.7V29.1M17 32.5V33.9M17 37.3V38.7M17 42.1V43.5M17 46.9V48.3M17 51.7V53.1M17 56.5V57.9M17 61.3V62.7" stroke="#000" stroke-width="1.43"/><path d="M25.7 2a1.3 2 0 1 0 2.6 0a1.3 2 0 1 0 -2.6 0M25.7 6.8a1.3 2 0 1 0 2.6 0a1.3 2 0 1 0 -2.6 0M25.7 11.6a1.3 2 0 1 0 2.6 0a1.3 2 0 1 0 -2.6 0M25.7 16.4a1.3 2 0 1 0 2.6 0a1.3 2 0 1 0 -2.6 0M25.7 21.2a1.3 2 0 1 0 2.6 0a1.3 2 0 1 0 -2.6 0M25.7 26a1.3 2 0 1 0 2.6 0a1.3 2 0 1 0 -2.6 0M25.7 30.8a1.3 2 0 1 0 2.6 0a1.3 2 0 1 0 -2.6 0M25.7 35.6a1.3 2 0 1 0 2.6 0a1.3 2 0 1 0 -2.6 0M25.7 40.4a1.3 2 0 1 0 2.6 0a1.3 2 0 1 0 -2.6 0" fill="none" stroke="#000" stroke-width="1.1"/><path d="M27 3.7V5.1M27 8.5V9.9M27 13.3V14.7M27 18.1V19.5M27 22.9V24.3M27 27.7V29.1M27 32.5V33.9M27 37.3V38.7M27 42.1V43.5" stroke="#000" stroke-width="1.43"/><path d="M33.7 2a1.3 2 0 1 0 2.6 0a1.3 2 0 1 0 -2.6 0M33.7 6.8a1.3 2 0 1 0 2.6 0a1.3 2 0 1 0 -2.6 0M33.7 11.6a1.3 2 0 1 0 2.6 0a1.3 2 0 1 0 -2.6 0M33.7 16.4a1.3 2 0 1 0 2.6 0a1.3 2 0 1 0 -2.6 0M33.7 21.2a1.3 2 0 1 0 2.6 0a1.3 2 0 1 0 -2.6 0M33.7 26a1.3 2 0 1 0 2.6 0a1.3 2 0 1 0 -2.6 0M33.7 30.8a1.3 2 0 1 0 2.6 0a1.3 2 0 1 0 -2.6 0M33.7 35.6a1.3 2 0 1 0 2.6 0a1.3 2 0 1 0 -2.6 0M33.7 40.4a1.3 2 0 1 0 2.6 0a1.3 2 0 1 0 -2.6 0M33.7 45.2a1.3 2 0 1 0 2.6 0a1.3 2 0 1 0 -2.6 0M33.7 50a1.3 2 0 1 0 2.6 0a1.3 2 0 1 0 -2.6 0M33.7 54.8a1.3 2 0 1 0 2.6 0a1.3 2 0 1 0 -2.6 0M33.7 59.6a1.3 2 0 1 0 2.6 0a1.3 2 0 1 0 -2.6 0" fill="none" stroke="#000" stroke-width="1.1"/><path d="M35 3.7V5.1M35 8.5V9.9M35 13.3V14.7M35 18.1V19.5M35 22.9V24.3M35 27.7V29.1M35 32.5V33.9M35 37.3V38.7M35 42.1V43.5M35 46.9V48.3M35 51.7V53.1M35 56.5V57.9M35 61.3V62.7" stroke="#000" stroke-width="1.43"/><path d="M40.7 2a1.3 2 0 1 0 2.6 0a1.3 2 0 1 0 -2.6 0M40.7 6.8a1.3 2 0 1 0 2.6 0a1.3 2 0 1 0 -2.6 0M40.7 11.6a1.3 2 0 1 0 2.6 0a1.3 2 0 1 0 -2.6 0M40.7 16.4a1.3 2 0 1 0 2.6 0a1.3 2 0 1 0 -2.6 0M40.7 21.2a1.3 2 0 1 0 2.6 0a1.3 2 0 1 0 -2.6 0M40.7 26a1.3 2 0 1 0 2.6 0a1.3 2 0 1 0 -2.6 0M40.7 30.8a1.3 2 0 1 0 2.6 0a1.3 2 0 1 0 -2.6 0M40.7 35.6a1.3 2 0 1 0 2.6 0a1.3 2 0 1 0 -2.6 0M40.7 40.4a1.3 2 0 1 0 2.6 0a1.3 2 0 1 0 -2.6 0M40.7 45.2a1.3 2 0 1 0 2.6 0a1.3 2 0 1 0 -2.6 0M40.7 50a1.3 2 0 1 0 2.6 0a1.3 2 0 1 0 -2.6 0M40.7 54.8a1.3 2 0 1 0 2.6 0a1.3 2 0 1 0 -2.6 0M40.7 59.6a1.3 2 0 1 0 2.6 0a1.3 2 0 1 0 -2.6 0" fill="none" stroke="#000" stroke-width="1.1"/><path d="M42 3.7V5.1M42 8.5V9.9M42 13.3V14.7M42 18.1V19.5M42 22.9V24.3M42 27.7V29.1M42 32.5V33.9M42 37.3V38.7M42 42.1V43.5M42 46.9V48.3M42 51.7V53.1M42 56.5V57.9M42 61.3V62.7" stroke="#000" stroke-width="1.43"/><path d="M50.7 2a1.3 2 0 1 0 2.6 0a1.3 2 0 1 0 -2.6 0M50.7 6.8a1.3 2 0 1 0 2.6 0a1.3 2 0 1 0 -2.6 0M50.7 11.6a1.3 2 0 1 0 2.6 0a1.3 2 0 1 0 -2.6 0M50.7 16.4a1.3 2 0 1 0 2.6 0a1.3 2 0 1 0 -2.6 0M50.7 21.2a1.3 2 0 1 0 2.6 0a1.3 2 0 1 0 -2.6 0M50.7 26a1.3 2 0 1 0 2.6 0a1.3 2 0 1 0 -2.6 0M50.7 30.8a1.3 2 0 1 0 2.6 0a1.3 2 0 1 0 -2.6 0M50.7 35.6a1.3 2 0 1 0 2.6 0a1.3 2 0 1 0 -2.6 0M50.7 40.4a1.3 2 0 1 0 2.6 0a1.3 2 0 1 0 -2.6 0M50.7 45.2a1.3 2 0 1 0 2.6 0a1.3 2 0 1 0 -2.6 0M50.7 50a1.3 2 0 1 0 2.6 0a1.3 2 0 1 0 -2.6 0M50.7 54.8a1.3 2 0 1 0 2.6 0a1.3 2 0 1 0 -2.6 0M50.7 59.6a1.3 2 0 1 0 2.6 0a1.3 2 0 1 0 -2.6 0" fill="none" stroke="#000" stroke-width="1.1"/><path d="M52 3.7V5.1M52 8.5V9.9M52 13.3V14.7M52 18.1V19.5M52 22.9V24.3M52 27.7V29.1M52 32.5V33.9M52 37.3V38.7M52 42.1V43.5M52 46.9V48.3M52 51.7V53.1M52 56.5V57.9M52 61.3V62.7" stroke="#000" stroke-width="1.43"/><g opacity="0.6"><path d="M49 5 H57 V18 H45 V9 Z" fill="#e0e0e0" stroke="#cdcdcd" stroke-width="0.9"/><path d="M49 5 V9 H45" fill="none" stroke="#cdcdcd" stroke-width="0.9"/><path d="M50 17 L58.5 8.5" stroke="#c8c8c8" stroke-width="4.2" stroke-linecap="round"/><path d="M50 17 L58.5 8.5" stroke="#f2f2f2" stroke-width="2.8" stroke-linecap="round"/></g><g opacity="0.55"><rect x="4" y="46" width="9" height="9" fill="#ececec"/><path d="M2 48 V44 H6 M11 44 H15 V48 M2 53 V57 H6 M11 57 H15 V53" stroke="#c8c8c8" stroke-width="0.8" fill="none"/></g></svg>
<div class="t" style="left:786.0px;width:80px;text-align:center;top:128.8px;font-size:13px;line-height:18px;color:#dcdcdc;">Chains 2</div>
<svg class="b" style="left:289px;top:165px;overflow:hidden;" width="60" height="60" viewBox="0 0 60 60"><rect width="60" height="60" fill="#d9d9d9"/><defs><pattern id="cg8" patternUnits="userSpaceOnUse" x="0.2" y="0" width="5.8" height="6.6"><ellipse cx="2.9" cy="2.2" rx="1.25" ry="2.2" fill="none" stroke="#000" stroke-width="0.75"/><path d="M2.9 3.4V7.6" stroke="#000" stroke-width="1.12"/></pattern></defs><rect width="60" height="60" fill="url(#cg8)"/><g opacity="0.6"><path d="M49 5 H57 V18 H45 V9 Z" fill="#e0e0e0" stroke="#cdcdcd" stroke-width="0.9"/><path d="M49 5 V9 H45" fill="none" stroke="#cdcdcd" stroke-width="0.9"/><path d="M50 17 L58.5 8.5" stroke="#c8c8c8" stroke-width="4.2" stroke-linecap="round"/><path d="M50 17 L58.5 8.5" stroke="#f2f2f2" stroke-width="2.8" stroke-linecap="round"/></g><g opacity="0.55"><rect x="4" y="46" width="9" height="9" fill="#ececec"/><path d="M2 48 V44 H6 M11 44 H15 V48 M2 53 V57 H6 M11 57 H15 V53" stroke="#c8c8c8" stroke-width="0.8" fill="none"/></g></svg>
<div class="t" style="left:279.0px;width:80px;text-align:center;top:231.8px;font-size:13px;line-height:18px;color:#dcdcdc;">Chains 3</div>
<svg class="b" style="left:361px;top:165px;overflow:hidden;" width="60" height="60" viewBox="0 0 60 60"><rect width="60" height="60" fill="#d9d9d9"/><defs><pattern id="cg7" patternUnits="userSpaceOnUse" x="0" y="0" width="4.3" height="4.2"><ellipse cx="2.15" cy="1.65" rx="1.05" ry="1.65" fill="none" stroke="#000" stroke-width="0.75"/><path d="M2.15 3V4.5" stroke="#000" stroke-width="0.98"/></pattern></defs><rect width="60" height="60" fill="url(#cg7)"/><g opacity="0.6"><path d="M49 5 H57 V18 H45 V9 Z" fill="#e0e0e0" stroke="#cdcdcd" stroke-width="0.9"/><path d="M49 5 V9 H45" fill="none" stroke="#cdcdcd" stroke-width="0.9"/><path d="M50 17 L58.5 8.5" stroke="#c8c8c8" stroke-width="4.2" stroke-linecap="round"/><path d="M50 17 L58.5 8.5" stroke="#f2f2f2" stroke-width="2.8" stroke-linecap="round"/></g><g opacity="0.55"><rect x="4" y="46" width="9" height="9" fill="#ececec"/><path d="M2 48 V44 H6 M11 44 H15 V48 M2 53 V57 H6 M11 57 H15 V53" stroke="#c8c8c8" stroke-width="0.8" fill="none"/></g></svg>
<div class="t" style="left:351.0px;width:80px;text-align:center;top:231.8px;font-size:13px;line-height:18px;color:#dcdcdc;">Chains 4</div>
<svg class="b" style="left:434px;top:165px;overflow:hidden;" width="60" height="60" viewBox="0 0 60 60"><rect width="60" height="60" fill="#d9d9d9"/><defs><pattern id="cg9" patternUnits="userSpaceOnUse" x="0" y="0" width="8.6" height="9.5"><ellipse cx="4.3" cy="3.1" rx="1.95" ry="3.1" fill="none" stroke="#000" stroke-width="1.3"/><path d="M4.3 5.2V10.5" stroke="#000" stroke-width="1.95"/></pattern></defs><rect width="60" height="60" fill="url(#cg9)"/><g opacity="0.6"><path d="M49 5 H57 V18 H45 V9 Z" fill="#e0e0e0" stroke="#cdcdcd" stroke-width="0.9"/><path d="M49 5 V9 H45" fill="none" stroke="#cdcdcd" stroke-width="0.9"/><path d="M50 17 L58.5 8.5" stroke="#c8c8c8" stroke-width="4.2" stroke-linecap="round"/><path d="M50 17 L58.5 8.5" stroke="#f2f2f2" stroke-width="2.8" stroke-linecap="round"/></g><g opacity="0.55"><rect x="4" y="46" width="9" height="9" fill="#ececec"/><path d="M2 48 V44 H6 M11 44 H15 V48 M2 53 V57 H6 M11 57 H15 V53" stroke="#c8c8c8" stroke-width="0.8" fill="none"/></g></svg>
<div class="t" style="left:424.0px;width:80px;text-align:center;top:231.8px;font-size:13px;line-height:18px;color:#dcdcdc;">Chains 5</div>
<svg class="b" style="left:506px;top:165px;overflow:hidden;" width="60" height="60" viewBox="0 0 60 60"><rect width="60" height="60" fill="#d9d9d9"/><path d="M2.6 2.1a1.4 2.1 0 1 0 2.8 0a1.4 2.1 0 1 0 -2.8 0M2.6 7.6a1.4 2.1 0 1 0 2.8 0a1.4 2.1 0 1 0 -2.8 0M2.6 13.1a1.4 2.1 0 1 0 2.8 0a1.4 2.1 0 1 0 -2.8 0M2.6 18.6a1.4 2.1 0 1 0 2.8 0a1.4 2.1 0 1 0 -2.8 0" fill="none" stroke="#000" stroke-width="1.1"/><path d="M4 3.9V5.8M4 9.4V11.3M4 14.9V16.8M4 20.4V22.3" stroke="#000" stroke-width="1.43"/><path d="M12.6 2.1a1.4 2.1 0 1 0 2.8 0a1.4 2.1 0 1 0 -2.8 0M12.6 7.6a1.4 2.1 0 1 0 2.8 0a1.4 2.1 0 1 0 -2.8 0M12.6 13.1a1.4 2.1 0 1 0 2.8 0a1.4 2.1 0 1 0 -2.8 0M12.6 18.6a1.4 2.1 0 1 0 2.8 0a1.4 2.1 0 1 0 -2.8 0M12.6 24.1a1.4 2.1 0 1 0 2.8 0a1.4 2.1 0 1 0 -2.8 0M12.6 29.6a1.4 2.1 0 1 0 2.8 0a1.4 2.1 0 1 0 -2.8 0M12.6 35.1a1.4 2.1 0 1 0 2.8 0a1.4 2.1 0 1 0 -2.8 0M12.6 40.6a1.4 2.1 0 1 0 2.8 0a1.4 2.1 0 1 0 -2.8 0M12.6 46.1a1.4 2.1 0 1 0 2.8 0a1.4 2.1 0 1 0 -2.8 0M12.6 51.6a1.4 2.1 0 1 0 2.8 0a1.4 2.1 0 1 0 -2.8 0M12.6 57.1a1.4 2.1 0 1 0 2.8 0a1.4 2.1 0 1 0 -2.8 0" fill="none" stroke="#000" stroke-width="1.1"/><path d="M14 3.9V5.8M14 9.4V11.3M14 14.9V16.8M14 20.4V22.3M14 25.9V27.8M14 31.4V33.3M14 36.9V38.8M14 42.4V44.3M14 47.9V49.8M14 53.4V55.3M14 58.9V60.8" stroke="#000" stroke-width="1.43"/><path d="M22.6 2.1a1.4 2.1 0 1 0 2.8 0a1.4 2.1 0 1 0 -2.8 0M22.6 7.6a1.4 2.1 0 1 0 2.8 0a1.4 2.1 0 1 0 -2.8 0M22.6 13.1a1.4 2.1 0 1 0 2.8 0a1.4 2.1 0 1 0 -2.8 0M22.6 18.6a1.4 2.1 0 1 0 2.8 0a1.4 2.1 0 1 0 -2.8 0M22.6 24.1a1.4 2.1 0 1 0 2.8 0a1.4 2.1 0 1 0 -2.8 0M22.6 29.6a1.4 2.1 0 1 0 2.8 0a1.4 2.1 0 1 0 -2.8 0M22.6 35.1a1.4 2.1 0 1 0 2.8 0a1.4 2.1 0 1 0 -2.8 0M22.6 40.6a1.4 2.1 0 1 0 2.8 0a1.4 2.1 0 1 0 -2.8 0M22.6 46.1a1.4 2.1 0 1 0 2.8 0a1.4 2.1 0 1 0 -2.8 0M22.6 51.6a1.4 2.1 0 1 0 2.8 0a1.4 2.1 0 1 0 -2.8 0" fill="none" stroke="#000" stroke-width="1.1"/><path d="M24 3.9V5.8M24 9.4V11.3M24 14.9V16.8M24 20.4V22.3M24 25.9V27.8M24 31.4V33.3M24 36.9V38.8M24 42.4V44.3M24 47.9V49.8M24 53.4V55.3" stroke="#000" stroke-width="1.43"/><path d="M36.6 2.1a1.4 2.1 0 1 0 2.8 0a1.4 2.1 0 1 0 -2.8 0M36.6 7.6a1.4 2.1 0 1 0 2.8 0a1.4 2.1 0 1 0 -2.8 0M36.6 13.1a1.4 2.1 0 1 0 2.8 0a1.4 2.1 0 1 0 -2.8 0M36.6 18.6a1.4 2.1 0 1 0 2.8 0a1.4 2.1 0 1 0 -2.8 0M36.6 24.1a1.4 2.1 0 1 0 2.8 0a1.4 2.1 0 1 0 -2.8 0M36.6 29.6a1.4 2.1 0 1 0 2.8 0a1.4 2.1 0 1 0 -2.8 0M36.6 35.1a1.4 2.1 0 1 0 2.8 0a1.4 2.1 0 1 0 -2.8 0M36.6 40.6a1.4 2.1 0 1 0 2.8 0a1.4 2.1 0 1 0 -2.8 0M36.6 46.1a1.4 2.1 0 1 0 2.8 0a1.4 2.1 0 1 0 -2.8 0M36.6 51.6a1.4 2.1 0 1 0 2.8 0a1.4 2.1 0 1 0 -2.8 0M36.6 57.1a1.4 2.1 0 1 0 2.8 0a1.4 2.1 0 1 0 -2.8 0" fill="none" stroke="#000" stroke-width="1.1"/><path d="M38 3.9V5.8M38 9.4V11.3M38 14.9V16.8M38 20.4V22.3M38 25.9V27.8M38 31.4V33.3M38 36.9V38.8M38 42.4V44.3M38 47.9V49.8M38 53.4V55.3M38 58.9V60.8" stroke="#000" stroke-width="1.43"/><path d="M48.6 2.1a1.4 2.1 0 1 0 2.8 0a1.4 2.1 0 1 0 -2.8 0M48.6 7.6a1.4 2.1 0 1 0 2.8 0a1.4 2.1 0 1 0 -2.8 0M48.6 13.1a1.4 2.1 0 1 0 2.8 0a1.4 2.1 0 1 0 -2.8 0M48.6 18.6a1.4 2.1 0 1 0 2.8 0a1.4 2.1 0 1 0 -2.8 0" fill="none" stroke="#000" stroke-width="1.1"/><path d="M50 3.9V5.8M50 9.4V11.3M50 14.9V16.8M50 20.4V22.3" stroke="#000" stroke-width="1.43"/><g opacity="0.6"><path d="M49 5 H57 V18 H45 V9 Z" fill="#e0e0e0" stroke="#cdcdcd" stroke-width="0.9"/><path d="M49 5 V9 H45" fill="none" stroke="#cdcdcd" stroke-width="0.9"/><path d="M50 17 L58.5 8.5" stroke="#c8c8c8" stroke-width="4.2" stroke-linecap="round"/><path d="M50 17 L58.5 8.5" stroke="#f2f2f2" stroke-width="2.8" stroke-linecap="round"/></g><g opacity="0.55"><rect x="4" y="46" width="9" height="9" fill="#ececec"/><path d="M2 48 V44 H6 M11 44 H15 V48 M2 53 V57 H6 M11 57 H15 V53" stroke="#c8c8c8" stroke-width="0.8" fill="none"/></g></svg>
<div class="t" style="left:496.0px;width:80px;text-align:center;top:231.8px;font-size:13px;line-height:18px;color:#dcdcdc;">Chains 6</div>
<svg class="b" style="left:579px;top:165px;overflow:hidden;" width="60" height="60" viewBox="0 0 60 60"><rect width="60" height="60" fill="#d9d9d9"/><path d="M26.4 2.3a1.6 2.3 0 1 0 3.2 0a1.6 2.3 0 1 0 -3.2 0M26.4 8.1a1.6 2.3 0 1 0 3.2 0a1.6 2.3 0 1 0 -3.2 0M26.4 13.9a1.6 2.3 0 1 0 3.2 0a1.6 2.3 0 1 0 -3.2 0M26.4 19.7a1.6 2.3 0 1 0 3.2 0a1.6 2.3 0 1 0 -3.2 0M26.4 25.5a1.6 2.3 0 1 0 3.2 0a1.6 2.3 0 1 0 -3.2 0M26.4 31.3a1.6 2.3 0 1 0 3.2 0a1.6 2.3 0 1 0 -3.2 0M26.4 37.1a1.6 2.3 0 1 0 3.2 0a1.6 2.3 0 1 0 -3.2 0M26.4 42.9a1.6 2.3 0 1 0 3.2 0a1.6 2.3 0 1 0 -3.2 0M26.4 48.7a1.6 2.3 0 1 0 3.2 0a1.6 2.3 0 1 0 -3.2 0M26.4 54.5a1.6 2.3 0 1 0 3.2 0a1.6 2.3 0 1 0 -3.2 0M26.4 60.3a1.6 2.3 0 1 0 3.2 0a1.6 2.3 0 1 0 -3.2 0" fill="none" stroke="#000" stroke-width="1.2"/><path d="M28 4.3V6.1M28 10.1V11.9M28 15.9V17.7M28 21.7V23.5M28 27.5V29.3M28 33.3V35.1M28 39.1V40.9M28 44.9V46.7M28 50.7V52.5M28 56.5V58.3M28 62.3V64.1" stroke="#000" stroke-width="1.56"/><g opacity="0.6"><path d="M49 5 H57 V18 H45 V9 Z" fill="#e0e0e0" stroke="#cdcdcd" stroke-width="0.9"/><path d="M49 5 V9 H45" fill="none" stroke="#cdcdcd" stroke-width="0.9"/><path d="M50 17 L58.5 8.5" stroke="#c8c8c8" stroke-width="4.2" stroke-linecap="round"/><path d="M50 17 L58.5 8.5" stroke="#f2f2f2" stroke-width="2.8" stroke-linecap="round"/></g><g opacity="0.55"><rect x="4" y="46" width="9" height="9" fill="#ececec"/><path d="M2 48 V44 H6 M11 44 H15 V48 M2 53 V57 H6 M11 57 H15 V53" stroke="#c8c8c8" stroke-width="0.8" fill="none"/></g></svg>
<div class="t" style="left:569.0px;width:80px;text-align:center;top:231.8px;font-size:13px;line-height:18px;color:#dcdcdc;">Chains 7</div>
<svg class="b" style="left:651px;top:165px;overflow:hidden;" width="60" height="60" viewBox="0 0 60 60"><rect width="60" height="60" fill="#d9d9d9"/><path d="M29.2 1.4a0.8 1.4 0 1 0 1.6 0a0.8 1.4 0 1 0 -1.6 0M29.2 4.8a0.8 1.4 0 1 0 1.6 0a0.8 1.4 0 1 0 -1.6 0M29.2 8.2a0.8 1.4 0 1 0 1.6 0a0.8 1.4 0 1 0 -1.6 0M29.2 11.6a0.8 1.4 0 1 0 1.6 0a0.8 1.4 0 1 0 -1.6 0M29.2 15a0.8 1.4 0 1 0 1.6 0a0.8 1.4 0 1 0 -1.6 0M29.2 18.4a0.8 1.4 0 1 0 1.6 0a0.8 1.4 0 1 0 -1.6 0M29.2 21.8a0.8 1.4 0 1 0 1.6 0a0.8 1.4 0 1 0 -1.6 0M29.2 25.2a0.8 1.4 0 1 0 1.6 0a0.8 1.4 0 1 0 -1.6 0M29.2 28.6a0.8 1.4 0 1 0 1.6 0a0.8 1.4 0 1 0 -1.6 0M29.2 32a0.8 1.4 0 1 0 1.6 0a0.8 1.4 0 1 0 -1.6 0M29.2 35.4a0.8 1.4 0 1 0 1.6 0a0.8 1.4 0 1 0 -1.6 0M29.2 38.8a0.8 1.4 0 1 0 1.6 0a0.8 1.4 0 1 0 -1.6 0M29.2 42.2a0.8 1.4 0 1 0 1.6 0a0.8 1.4 0 1 0 -1.6 0M29.2 45.6a0.8 1.4 0 1 0 1.6 0a0.8 1.4 0 1 0 -1.6 0M29.2 49a0.8 1.4 0 1 0 1.6 0a0.8 1.4 0 1 0 -1.6 0M29.2 52.4a0.8 1.4 0 1 0 1.6 0a0.8 1.4 0 1 0 -1.6 0M29.2 55.8a0.8 1.4 0 1 0 1.6 0a0.8 1.4 0 1 0 -1.6 0M29.2 59.2a0.8 1.4 0 1 0 1.6 0a0.8 1.4 0 1 0 -1.6 0" fill="none" stroke="#000" stroke-width="0.7"/><path d="M30 2.5V3.7M30 5.9V7.1M30 9.3V10.5M30 12.7V13.9M30 16.1V17.3M30 19.5V20.7M30 22.9V24.1M30 26.3V27.5M30 29.7V30.9M30 33.1V34.3M30 36.5V37.7M30 39.9V41.1M30 43.3V44.5M30 46.7V47.9M30 50.1V51.3M30 53.5V54.7M30 56.9V58.1M30 60.3V61.5" stroke="#000" stroke-width="0.91"/><g opacity="0.6"><path d="M49 5 H57 V18 H45 V9 Z" fill="#e0e0e0" stroke="#cdcdcd" stroke-width="0.9"/><path d="M49 5 V9 H45" fill="none" stroke="#cdcdcd" stroke-width="0.9"/><path d="M50 17 L58.5 8.5" stroke="#c8c8c8" stroke-width="4.2" stroke-linecap="round"/><path d="M50 17 L58.5 8.5" stroke="#f2f2f2" stroke-width="2.8" stroke-linecap="round"/></g><g opacity="0.55"><rect x="4" y="46" width="9" height="9" fill="#ececec"/><path d="M2 48 V44 H6 M11 44 H15 V48 M2 53 V57 H6 M11 57 H15 V53" stroke="#c8c8c8" stroke-width="0.8" fill="none"/></g></svg>
<div class="t" style="left:641.0px;width:80px;text-align:center;top:231.8px;font-size:13px;line-height:18px;color:#dcdcdc;">Chains 8</div>
<svg class="b" style="left:724px;top:165px;overflow:hidden;" width="60" height="60" viewBox="0 0 60 60"><rect width="60" height="60" fill="#d9d9d9"/><path d="M28.5 60 L29.6 4 M31.5 60 L30.4 4" fill="none" stroke="#000" stroke-width="1.0" stroke-linecap="round" stroke-linejoin="round"/><path d="M28.60 6.0 L31.40 9.0 M31.40 6.0 L28.60 9.0" fill="none" stroke="#000" stroke-width="0.45" stroke-linecap="round" stroke-linejoin="round"/><path d="M28.52 9.5 L31.48 12.5 M31.48 9.5 L28.52 12.5" fill="none" stroke="#000" stroke-width="0.45" stroke-linecap="round" stroke-linejoin="round"/><path d="M28.44 13.0 L31.56 16.0 M31.56 13.0 L28.44 16.0" fill="none" stroke="#000" stroke-width="0.45" stroke-linecap="round" stroke-linejoin="round"/><path d="M28.36 16.5 L31.64 19.5 M31.64 16.5 L28.36 19.5" fill="none" stroke="#000" stroke-width="0.45" stroke-linecap="round" stroke-linejoin="round"/><path d="M28.28 20.0 L31.72 23.0 M31.72 20.0 L28.28 23.0" fill="none" stroke="#000" stroke-width="0.45" stroke-linecap="round" stroke-linejoin="round"/><path d="M28.20 23.5 L31.80 26.5 M31.80 23.5 L28.20 26.5" fill="none" stroke="#000" stroke-width="0.45" stroke-linecap="round" stroke-linejoin="round"/><path d="M28.12 27.0 L31.88 30.0 M31.88 27.0 L28.12 30.0" fill="none" stroke="#000" stroke-width="0.45" stroke-linecap="round" stroke-linejoin="round"/><path d="M28.04 30.5 L31.96 33.5 M31.96 30.5 L28.04 33.5" fill="none" stroke="#000" stroke-width="0.45" stroke-linecap="round" stroke-linejoin="round"/><path d="M27.96 34.0 L32.04 37.0 M32.04 34.0 L27.96 37.0" fill="none" stroke="#000" stroke-width="0.45" stroke-linecap="round" stroke-linejoin="round"/><path d="M27.88 37.5 L32.12 40.5 M32.12 37.5 L27.88 40.5" fill="none" stroke="#000" stroke-width="0.45" stroke-linecap="round" stroke-linejoin="round"/><path d="M27.80 41.0 L32.20 44.0 M32.20 41.0 L27.80 44.0" fill="none" stroke="#000" stroke-width="0.45" stroke-linecap="round" stroke-linejoin="round"/><path d="M27.72 44.5 L32.28 47.5 M32.28 44.5 L27.72 47.5" fill="none" stroke="#000" stroke-width="0.45" stroke-linecap="round" stroke-linejoin="round"/><path d="M27.64 48.0 L32.36 51.0 M32.36 48.0 L27.64 51.0" fill="none" stroke="#000" stroke-width="0.45" stroke-linecap="round" stroke-linejoin="round"/><path d="M27.56 51.5 L32.44 54.5 M32.44 51.5 L27.56 54.5" fill="none" stroke="#000" stroke-width="0.45" stroke-linecap="round" stroke-linejoin="round"/><path d="M27.48 55.0 L32.52 58.0 M32.52 55.0 L27.48 58.0" fill="none" stroke="#000" stroke-width="0.45" stroke-linecap="round" stroke-linejoin="round"/><path d="M27.40 58.5 L32.60 61.5 M32.60 58.5 L27.40 61.5" fill="none" stroke="#000" stroke-width="0.45" stroke-linecap="round" stroke-linejoin="round"/><path d="M25 4 V11 M35 4 V11 M26 16 V23 M34 16 V22 M25 38 V45 M35 38 V44 M27 28 V33 M33 28 V33" fill="none" stroke="#000" stroke-width="1.7" stroke-linecap="round" stroke-linejoin="round"/><path d="M24.5 5 H35.5 M25 18 H35 M24.5 40 H35.5" fill="none" stroke="#000" stroke-width="0.8" stroke-linecap="round" stroke-linejoin="round"/><g opacity="0.6"><path d="M49 5 H57 V18 H45 V9 Z" fill="#e0e0e0" stroke="#cdcdcd" stroke-width="0.9"/><path d="M49 5 V9 H45" fill="none" stroke="#cdcdcd" stroke-width="0.9"/><path d="M50 17 L58.5 8.5" stroke="#c8c8c8" stroke-width="4.2" stroke-linecap="round"/><path d="M50 17 L58.5 8.5" stroke="#f2f2f2" stroke-width="2.8" stroke-linecap="round"/></g><g opacity="0.55"><rect x="4" y="46" width="9" height="9" fill="#ececec"/><path d="M2 48 V44 H6 M11 44 H15 V48 M2 53 V57 H6 M11 57 H15 V53" stroke="#c8c8c8" stroke-width="0.8" fill="none"/></g></svg>
<div class="t" style="left:714.0px;width:80px;text-align:center;top:231.8px;font-size:13px;line-height:18px;color:#dcdcdc;">Cell Tower</div>
<svg class="b" style="left:796px;top:165px;overflow:hidden;" width="60" height="60" viewBox="0 0 60 60"><rect width="60" height="60" fill="#d9d9d9"/><path d="M0 60 V42 H3 V32 H5 V38 H8 V30 H10 V40 H14 V34 H16 V42 H20 V30 H21 V22 H22 V38 H26 V36 H30 V42 H33 V32 H35 V40 H38 V35 H40 V41 H44 V22 H45 V12 H46 V38 H48 V20 H52 V30 H54 V36 H57 V26 H60 V60 Z" fill="#000"/><path d="M6 30 V20 M28 36 V28 M50 20 V8" fill="none" stroke="#000" stroke-width="0.8" stroke-linecap="round" stroke-linejoin="round"/><g opacity="0.6"><path d="M49 5 H57 V18 H45 V9 Z" fill="#e0e0e0" stroke="#cdcdcd" stroke-width="0.9"/><path d="M49 5 V9 H45" fill="none" stroke="#cdcdcd" stroke-width="0.9"/><path d="M50 17 L58.5 8.5" stroke="#c8c8c8" stroke-width="4.2" stroke-linecap="round"/><path d="M50 17 L58.5 8.5" stroke="#f2f2f2" stroke-width="2.8" stroke-linecap="round"/></g><rect x="4" y="46" width="9" height="9" fill="#a8a8a8"/><path d="M2 48 V44 H6 M11 44 H15 V48 M2 53 V57 H6 M11 57 H15 V53" stroke="#888" stroke-width="0.8" fill="none"/></svg>
<div class="t" style="left:786.0px;width:80px;text-align:center;top:231.8px;font-size:13px;line-height:18px;color:#dcdcdc;">City</div>
<svg class="b" style="left:289px;top:267px;overflow:hidden;" width="60" height="60" viewBox="0 0 60 60"><rect width="60" height="60" fill="#d9d9d9"/><path d="M0 60 V30 H3 V26 H7 V28 H9 V22 H12 V30 H15 V25 H18 V29 H21 V23 H24 V28 H26 V24 H29 V31 H32 V25 H35 V28 H38 V22 H40 V26 H42 V18 H43 V13 H44 V18 H46 V27 H49 V24 H51 V30 H54 V26 H57 V20 H58 V28 H60 V60 Z" fill="#000"/><g opacity="0.6"><path d="M49 5 H57 V18 H45 V9 Z" fill="#e0e0e0" stroke="#cdcdcd" stroke-width="0.9"/><path d="M49 5 V9 H45" fill="none" stroke="#cdcdcd" stroke-width="0.9"/><path d="M50 17 L58.5 8.5" stroke="#c8c8c8" stroke-width="4.2" stroke-linecap="round"/><path d="M50 17 L58.5 8.5" stroke="#f2f2f2" stroke-width="2.8" stroke-linecap="round"/></g><rect x="4" y="46" width="9" height="9" fill="#a8a8a8"/><path d="M2 48 V44 H6 M11 44 H15 V48 M2 53 V57 H6 M11 57 H15 V53" stroke="#888" stroke-width="0.8" fill="none"/></svg>
<div class="t" style="left:279.0px;width:80px;text-align:center;top:333.8px;font-size:13px;line-height:18px;color:#dcdcdc;">City 1</div>
<svg class="b" style="left:361px;top:267px;overflow:hidden;" width="60" height="60" viewBox="0 0 60 60"><rect width="60" height="60" fill="#d9d9d9"/><path d="M31 60 L32 6" fill="none" stroke="#000" stroke-width="2.2" stroke-linecap="round" stroke-linejoin="round"/><path d="M14 10 L46 7" fill="none" stroke="#000" stroke-width="1.2" stroke-linecap="round" stroke-linejoin="round"/><path d="M22 8 L31 20 M40 7 L32 18" fill="none" stroke="#000" stroke-width="0.6" stroke-linecap="round" stroke-linejoin="round"/><path d="M15 8 v3 M45 5 v3" fill="none" stroke="#000" stroke-width="1.0" stroke-linecap="round" stroke-linejoin="round"/><g opacity="0.6"><path d="M49 5 H57 V18 H45 V9 Z" fill="#e0e0e0" stroke="#cdcdcd" stroke-width="0.9"/><path d="M49 5 V9 H45" fill="none" stroke="#cdcdcd" stroke-width="0.9"/><path d="M50 17 L58.5 8.5" stroke="#c8c8c8" stroke-width="4.2" stroke-linecap="round"/><path d="M50 17 L58.5 8.5" stroke="#f2f2f2" stroke-width="2.8" stroke-linecap="round"/></g><g opacity="0.55"><rect x="4" y="46" width="9" height="9" fill="#ececec"/><path d="M2 48 V44 H6 M11 44 H15 V48 M2 53 V57 H6 M11 57 H15 V53" stroke="#c8c8c8" stroke-width="0.8" fill="none"/></g></svg>
<div class="t" style="left:351.0px;width:80px;text-align:center;top:327.0px;font-size:13px;line-height:18px;color:#dcdcdc;">Electrical</div>
<div class="t" style="left:351.0px;width:80px;text-align:center;top:341.4px;font-size:13px;line-height:18px;color:#dcdcdc;">Pole</div>
<svg class="b" style="left:434px;top:267px;overflow:hidden;" width="60" height="60" viewBox="0 0 60 60"><rect width="60" height="60" fill="#c9c9c9"/><path d="M27.0 60 L29 4 M33.0 60 L31 4" fill="none" stroke="#000" stroke-width="0.9" stroke-linecap="round" stroke-linejoin="round"/><path d="M28.9 7.0 L31.1 10.0 M31.1 7.0 L28.9 10.0" fill="none" stroke="#000" stroke-width="0.5" stroke-linecap="round" stroke-linejoin="round"/><path d="M28.8 10.0 L31.2 13.0 M31.2 10.0 L28.8 13.0" fill="none" stroke="#000" stroke-width="0.5" stroke-linecap="round" stroke-linejoin="round"/><path d="M28.7 13.0 L31.3 16.0 M31.3 13.0 L28.7 16.0" fill="none" stroke="#000" stroke-width="0.5" stroke-linecap="round" stroke-linejoin="round"/><path d="M28.6 16.0 L31.4 19.0 M31.4 16.0 L28.6 19.0" fill="none" stroke="#000" stroke-width="0.5" stroke-linecap="round" stroke-linejoin="round"/><path d="M28.5 19.0 L31.5 22.0 M31.5 19.0 L28.5 22.0" fill="none" stroke="#000" stroke-width="0.5" stroke-linecap="round" stroke-linejoin="round"/><path d="M28.4 22.0 L31.6 25.0 M31.6 22.0 L28.4 25.0" fill="none" stroke="#000" stroke-width="0.5" stroke-linecap="round" stroke-linejoin="round"/><path d="M28.2 25.0 L31.8 28.0 M31.8 25.0 L28.2 28.0" fill="none" stroke="#000" stroke-width="0.5" stroke-linecap="round" stroke-linejoin="round"/><path d="M28.1 28.0 L31.9 31.0 M31.9 28.0 L28.1 31.0" fill="none" stroke="#000" stroke-width="0.5" stroke-linecap="round" stroke-linejoin="round"/><path d="M28.0 31.0 L32.0 34.0 M32.0 31.0 L28.0 34.0" fill="none" stroke="#000" stroke-width="0.5" stroke-linecap="round" stroke-linejoin="round"/><path d="M27.9 34.0 L32.1 37.0 M32.1 34.0 L27.9 37.0" fill="none" stroke="#000" stroke-width="0.5" stroke-linecap="round" stroke-linejoin="round"/><path d="M27.8 37.0 L32.2 40.0 M32.2 37.0 L27.8 40.0" fill="none" stroke="#000" stroke-width="0.5" stroke-linecap="round" stroke-linejoin="round"/><path d="M27.7 40.0 L32.3 43.0 M32.3 40.0 L27.7 43.0" fill="none" stroke="#000" stroke-width="0.5" stroke-linecap="round" stroke-linejoin="round"/><path d="M27.6 43.0 L32.4 46.0 M32.4 43.0 L27.6 46.0" fill="none" stroke="#000" stroke-width="0.5" stroke-linecap="round" stroke-linejoin="round"/><path d="M27.5 46.0 L32.5 49.0 M32.5 46.0 L27.5 49.0" fill="none" stroke="#000" stroke-width="0.5" stroke-linecap="round" stroke-linejoin="round"/><path d="M27.4 49.0 L32.6 52.0 M32.6 49.0 L27.4 52.0" fill="none" stroke="#000" stroke-width="0.5" stroke-linecap="round" stroke-linejoin="round"/><path d="M27.3 52.0 L32.7 55.0 M32.7 52.0 L27.3 55.0" fill="none" stroke="#000" stroke-width="0.5" stroke-linecap="round" stroke-linejoin="round"/><path d="M27.2 55.0 L32.8 58.0 M32.8 55.0 L27.2 58.0" fill="none" stroke="#000" stroke-width="0.5" stroke-linecap="round" stroke-linejoin="round"/><path d="M27.1 58.0 L32.9 61.0 M32.9 58.0 L27.1 61.0" fill="none" stroke="#000" stroke-width="0.5" stroke-linecap="round" stroke-linejoin="round"/><path d="M18 16 H42" fill="none" stroke="#000" stroke-width="1.0" stroke-linecap="round" stroke-linejoin="round"/><path d="M18 16 v3 M42 16 v3" fill="none" stroke="#000" stroke-width="0.7" stroke-linecap="round" stroke-linejoin="round"/><path d="M20 24 H40" fill="none" stroke="#000" stroke-width="1.0" stroke-linecap="round" stroke-linejoin="round"/><path d="M20 24 v3 M40 24 v3" fill="none" stroke="#000" stroke-width="0.7" stroke-linecap="round" stroke-linejoin="round"/><path d="M21 30 H39" fill="none" stroke="#000" stroke-width="1.0" stroke-linecap="round" stroke-linejoin="round"/><path d="M21 30 v3 M39 30 v3" fill="none" stroke="#000" stroke-width="0.7" stroke-linecap="round" stroke-linejoin="round"/><g opacity="0.6"><path d="M49 5 H57 V18 H45 V9 Z" fill="#e0e0e0" stroke="#cdcdcd" stroke-width="0.9"/><path d="M49 5 V9 H45" fill="none" stroke="#cdcdcd" stroke-width="0.9"/><path d="M50 17 L58.5 8.5" stroke="#c8c8c8" stroke-width="4.2" stroke-linecap="round"/><path d="M50 17 L58.5 8.5" stroke="#f2f2f2" stroke-width="2.8" stroke-linecap="round"/></g><g opacity="0.55"><rect x="4" y="46" width="9" height="9" fill="#ececec"/><path d="M2 48 V44 H6 M11 44 H15 V48 M2 53 V57 H6 M11 57 H15 V53" stroke="#c8c8c8" stroke-width="0.8" fill="none"/></g></svg>
<div class="t" style="left:424.0px;width:80px;text-align:center;top:327.0px;font-size:13px;line-height:18px;color:#dcdcdc;">Electrical</div>
<div class="t" style="left:424.0px;width:80px;text-align:center;top:341.4px;font-size:13px;line-height:18px;color:#dcdcdc;">Pole 1</div>
<svg class="b" style="left:506px;top:267px;overflow:hidden;" width="60" height="60" viewBox="0 0 60 60"><rect width="60" height="60" fill="#cdcdcd"/><path d="M27.0 60 L30 4 M35.0 60 L32 4" fill="none" stroke="#000" stroke-width="0.9" stroke-linecap="round" stroke-linejoin="round"/><path d="M29.8 7.0 L32.2 10.0 M32.2 7.0 L29.8 10.0" fill="none" stroke="#000" stroke-width="0.5" stroke-linecap="round" stroke-linejoin="round"/><path d="M29.7 10.0 L32.3 13.0 M32.3 10.0 L29.7 13.0" fill="none" stroke="#000" stroke-width="0.5" stroke-linecap="round" stroke-linejoin="round"/><path d="M29.5 13.0 L32.5 16.0 M32.5 13.0 L29.5 16.0" fill="none" stroke="#000" stroke-width="0.5" stroke-linecap="round" stroke-linejoin="round"/><path d="M29.4 16.0 L32.6 19.0 M32.6 16.0 L29.4 19.0" fill="none" stroke="#000" stroke-width="0.5" stroke-linecap="round" stroke-linejoin="round"/><path d="M29.2 19.0 L32.8 22.0 M32.8 19.0 L29.2 22.0" fill="none" stroke="#000" stroke-width="0.5" stroke-linecap="round" stroke-linejoin="round"/><path d="M29.0 22.0 L33.0 25.0 M33.0 22.0 L29.0 25.0" fill="none" stroke="#000" stroke-width="0.5" stroke-linecap="round" stroke-linejoin="round"/><path d="M28.9 25.0 L33.1 28.0 M33.1 25.0 L28.9 28.0" fill="none" stroke="#000" stroke-width="0.5" stroke-linecap="round" stroke-linejoin="round"/><path d="M28.7 28.0 L33.3 31.0 M33.3 28.0 L28.7 31.0" fill="none" stroke="#000" stroke-width="0.5" stroke-linecap="round" stroke-linejoin="round"/><path d="M28.6 31.0 L33.4 34.0 M33.4 31.0 L28.6 34.0" fill="none" stroke="#000" stroke-width="0.5" stroke-linecap="round" stroke-linejoin="round"/><path d="M28.4 34.0 L33.6 37.0 M33.6 34.0 L28.4 37.0" fill="none" stroke="#000" stroke-width="0.5" stroke-linecap="round" stroke-linejoin="round"/><path d="M28.2 37.0 L33.8 40.0 M33.8 37.0 L28.2 40.0" fill="none" stroke="#000" stroke-width="0.5" stroke-linecap="round" stroke-linejoin="round"/><path d="M28.1 40.0 L33.9 43.0 M33.9 40.0 L28.1 43.0" fill="none" stroke="#000" stroke-width="0.5" stroke-linecap="round" stroke-linejoin="round"/><path d="M27.9 43.0 L34.1 46.0 M34.1 43.0 L27.9 46.0" fill="none" stroke="#000" stroke-width="0.5" stroke-linecap="round" stroke-linejoin="round"/><path d="M27.8 46.0 L34.2 49.0 M34.2 46.0 L27.8 49.0" fill="none" stroke="#000" stroke-width="0.5" stroke-linecap="round" stroke-linejoin="round"/><path d="M27.6 49.0 L34.4 52.0 M34.4 49.0 L27.6 52.0" fill="none" stroke="#000" stroke-width="0.5" stroke-linecap="round" stroke-linejoin="round"/><path d="M27.4 52.0 L34.6 55.0 M34.6 52.0 L27.4 55.0" fill="none" stroke="#000" stroke-width="0.5" stroke-linecap="round" stroke-linejoin="round"/><path d="M27.3 55.0 L34.7 58.0 M34.7 55.0 L27.3 58.0" fill="none" stroke="#000" stroke-width="0.5" stroke-linecap="round" stroke-linejoin="round"/><path d="M27.1 58.0 L34.9 61.0 M34.9 58.0 L27.1 61.0" fill="none" stroke="#000" stroke-width="0.5" stroke-linecap="round" stroke-linejoin="round"/><path d="M15 8 H47" fill="none" stroke="#000" stroke-width="1.0" stroke-linecap="round" stroke-linejoin="round"/><path d="M15 8 v3 M47 8 v3" fill="none" stroke="#000" stroke-width="0.7" stroke-linecap="round" stroke-linejoin="round"/><path d="M13 22 H49" fill="none" stroke="#000" stroke-width="1.0" stroke-linecap="round" stroke-linejoin="round"/><path d="M13 22 v3 M49 22 v3" fill="none" stroke="#000" stroke-width="0.7" stroke-linecap="round" stroke-linejoin="round"/><path d="M11 40 H51" fill="none" stroke="#000" stroke-width="1.0" stroke-linecap="round" stroke-linejoin="round"/><path d="M11 40 v3 M51 40 v3" fill="none" stroke="#000" stroke-width="0.7" stroke-linecap="round" stroke-linejoin="round"/><path d="M0 22 L60 14 M0 36 L60 30 M14 10 L26 50 M46 10 L56 44" fill="none" stroke="#000" stroke-width="0.6" stroke-linecap="round" stroke-linejoin="round"/><ellipse cx="19.4" cy="9.1" rx="0.5" ry="0.3" fill="#000"/><ellipse cx="32.2" cy="21.9" rx="0.3" ry="0.4" fill="#000"/><ellipse cx="2.2" cy="26.0" rx="0.3" ry="0.3" fill="#000"/><ellipse cx="25.5" cy="49.6" rx="0.3" ry="0.3" fill="#000"/><ellipse cx="37.6" cy="56.9" rx="0.5" ry="0.3" fill="#000"/><ellipse cx="58.6" cy="2.8" rx="0.6" ry="0.3" fill="#000"/><ellipse cx="8.7" cy="7.1" rx="0.4" ry="0.4" fill="#000"/><ellipse cx="10.8" cy="34.9" rx="0.5" ry="0.3" fill="#000"/><ellipse cx="32.9" cy="3.8" rx="0.3" ry="0.3" fill="#000"/><ellipse cx="40.8" cy="25.7" rx="0.4" ry="0.4" fill="#000"/><ellipse cx="27.2" cy="18.0" rx="0.5" ry="0.4" fill="#000"/><ellipse cx="14.6" cy="34.5" rx="0.5" ry="0.5" fill="#000"/><g opacity="0.6"><path d="M49 5 H57 V18 H45 V9 Z" fill="#e0e0e0" stroke="#cdcdcd" stroke-width="0.9"/><path d="M49 5 V9 H45" fill="none" stroke="#cdcdcd" stroke-width="0.9"/><path d="M50 17 L58.5 8.5" stroke="#c8c8c8" stroke-width="4.2" stroke-linecap="round"/><path d="M50 17 L58.5 8.5" stroke="#f2f2f2" stroke-width="2.8" stroke-linecap="round"/></g><g opacity="0.55"><rect x="4" y="46" width="9" height="9" fill="#ececec"/><path d="M2 48 V44 H6 M11 44 H15 V48 M2 53 V57 H6 M11 57 H15 V53" stroke="#c8c8c8" stroke-width="0.8" fill="none"/></g></svg>
<div class="t" style="left:496.0px;width:80px;text-align:center;top:327.0px;font-size:13px;line-height:18px;color:#dcdcdc;">Electrical</div>
<div class="t" style="left:496.0px;width:80px;text-align:center;top:341.4px;font-size:13px;line-height:18px;color:#dcdcdc;">Pole 2</div>
<svg class="b" style="left:579px;top:267px;overflow:hidden;" width="60" height="60" viewBox="0 0 60 60"><rect width="60" height="60" fill="#bdbdbd"/><path d="M27.5 60 L29 2 M32.5 60 L31 2" fill="none" stroke="#000" stroke-width="0.9" stroke-linecap="round" stroke-linejoin="round"/><path d="M28.9 5.0 L31.1 8.0 M31.1 5.0 L28.9 8.0" fill="none" stroke="#000" stroke-width="0.5" stroke-linecap="round" stroke-linejoin="round"/><path d="M28.8 8.0 L31.2 11.0 M31.2 8.0 L28.8 11.0" fill="none" stroke="#000" stroke-width="0.5" stroke-linecap="round" stroke-linejoin="round"/><path d="M28.8 11.0 L31.2 14.0 M31.2 11.0 L28.8 14.0" fill="none" stroke="#000" stroke-width="0.5" stroke-linecap="round" stroke-linejoin="round"/><path d="M28.7 14.0 L31.3 17.0 M31.3 14.0 L28.7 17.0" fill="none" stroke="#000" stroke-width="0.5" stroke-linecap="round" stroke-linejoin="round"/><path d="M28.6 17.0 L31.4 20.0 M31.4 17.0 L28.6 20.0" fill="none" stroke="#000" stroke-width="0.5" stroke-linecap="round" stroke-linejoin="round"/><path d="M28.5 20.0 L31.5 23.0 M31.5 20.0 L28.5 23.0" fill="none" stroke="#000" stroke-width="0.5" stroke-linecap="round" stroke-linejoin="round"/><path d="M28.5 23.0 L31.5 26.0 M31.5 23.0 L28.5 26.0" fill="none" stroke="#000" stroke-width="0.5" stroke-linecap="round" stroke-linejoin="round"/><path d="M28.4 26.0 L31.6 29.0 M31.6 26.0 L28.4 29.0" fill="none" stroke="#000" stroke-width="0.5" stroke-linecap="round" stroke-linejoin="round"/><path d="M28.3 29.0 L31.7 32.0 M31.7 29.0 L28.3 32.0" fill="none" stroke="#000" stroke-width="0.5" stroke-linecap="round" stroke-linejoin="round"/><path d="M28.2 32.0 L31.8 35.0 M31.8 32.0 L28.2 35.0" fill="none" stroke="#000" stroke-width="0.5" stroke-linecap="round" stroke-linejoin="round"/><path d="M28.1 35.0 L31.9 38.0 M31.9 35.0 L28.1 38.0" fill="none" stroke="#000" stroke-width="0.5" stroke-linecap="round" stroke-linejoin="round"/><path d="M28.1 38.0 L31.9 41.0 M31.9 38.0 L28.1 41.0" fill="none" stroke="#000" stroke-width="0.5" stroke-linecap="round" stroke-linejoin="round"/><path d="M28.0 41.0 L32.0 44.0 M32.0 41.0 L28.0 44.0" fill="none" stroke="#000" stroke-width="0.5" stroke-linecap="round" stroke-linejoin="round"/><path d="M27.9 44.0 L32.1 47.0 M32.1 44.0 L27.9 47.0" fill="none" stroke="#000" stroke-width="0.5" stroke-linecap="round" stroke-linejoin="round"/><path d="M27.8 47.0 L32.2 50.0 M32.2 47.0 L27.8 50.0" fill="none" stroke="#000" stroke-width="0.5" stroke-linecap="round" stroke-linejoin="round"/><path d="M27.8 50.0 L32.2 53.0 M32.2 50.0 L27.8 53.0" fill="none" stroke="#000" stroke-width="0.5" stroke-linecap="round" stroke-linejoin="round"/><path d="M27.7 53.0 L32.3 56.0 M32.3 53.0 L27.7 56.0" fill="none" stroke="#000" stroke-width="0.5" stroke-linecap="round" stroke-linejoin="round"/><path d="M27.6 56.0 L32.4 59.0 M32.4 56.0 L27.6 59.0" fill="none" stroke="#000" stroke-width="0.5" stroke-linecap="round" stroke-linejoin="round"/><path d="M27.5 59.0 L32.5 62.0 M32.5 59.0 L27.5 62.0" fill="none" stroke="#000" stroke-width="0.5" stroke-linecap="round" stroke-linejoin="round"/><path d="M10 10 H50" fill="none" stroke="#000" stroke-width="1.0" stroke-linecap="round" stroke-linejoin="round"/><path d="M10 10 v3 M50 10 v3" fill="none" stroke="#000" stroke-width="0.7" stroke-linecap="round" stroke-linejoin="round"/><path d="M8 24 H52" fill="none" stroke="#000" stroke-width="1.0" stroke-linecap="round" stroke-linejoin="round"/><path d="M8 24 v3 M52 24 v3" fill="none" stroke="#000" stroke-width="0.7" stroke-linecap="round" stroke-linejoin="round"/><path d="M12 44 H48" fill="none" stroke="#000" stroke-width="1.0" stroke-linecap="round" stroke-linejoin="round"/><path d="M12 44 v3 M48 44 v3" fill="none" stroke="#000" stroke-width="0.7" stroke-linecap="round" stroke-linejoin="round"/><path d="M10 10 v4 M50 10 v4 M8 24 v5 M52 24 v5 M12 44 v4 M48 44 v4" fill="none" stroke="#000" stroke-width="0.8" stroke-linecap="round" stroke-linejoin="round"/><g opacity="0.6"><path d="M49 5 H57 V18 H45 V9 Z" fill="#e0e0e0" stroke="#cdcdcd" stroke-width="0.9"/><path d="M49 5 V9 H45" fill="none" stroke="#cdcdcd" stroke-width="0.9"/><path d="M50 17 L58.5 8.5" stroke="#c8c8c8" stroke-width="4.2" stroke-linecap="round"/><path d="M50 17 L58.5 8.5" stroke="#f2f2f2" stroke-width="2.8" stroke-linecap="round"/></g><g opacity="0.55"><rect x="4" y="46" width="9" height="9" fill="#ececec"/><path d="M2 48 V44 H6 M11 44 H15 V48 M2 53 V57 H6 M11 57 H15 V53" stroke="#c8c8c8" stroke-width="0.8" fill="none"/></g></svg>
<div class="t" style="left:569.0px;width:80px;text-align:center;top:327.0px;font-size:13px;line-height:18px;color:#dcdcdc;">Electrical</div>
<div class="t" style="left:569.0px;width:80px;text-align:center;top:341.4px;font-size:13px;line-height:18px;color:#dcdcdc;">Pole 3</div>
<svg class="b" style="left:651px;top:267px;overflow:hidden;" width="60" height="60" viewBox="0 0 60 60"><rect width="60" height="60" fill="#d9d9d9"/><path d="M26 6 H34 L37 14 L34 26 H26 L23 14 Z" fill="#000"/><path d="M29 2 H31 V6 H29 Z" fill="#000"/><path d="M30 26 V60" fill="none" stroke="#000" stroke-width="4" stroke-linecap="round" stroke-linejoin="round"/><path d="M27 30 H33 V36 H27 Z" fill="#000"/><g opacity="0.6"><path d="M49 5 H57 V18 H45 V9 Z" fill="#e0e0e0" stroke="#cdcdcd" stroke-width="0.9"/><path d="M49 5 V9 H45" fill="none" stroke="#cdcdcd" stroke-width="0.9"/><path d="M50 17 L58.5 8.5" stroke="#c8c8c8" stroke-width="4.2" stroke-linecap="round"/><path d="M50 17 L58.5 8.5" stroke="#f2f2f2" stroke-width="2.8" stroke-linecap="round"/></g><g opacity="0.55"><rect x="4" y="46" width="9" height="9" fill="#ececec"/><path d="M2 48 V44 H6 M11 44 H15 V48 M2 53 V57 H6 M11 57 H15 V53" stroke="#c8c8c8" stroke-width="0.8" fill="none"/></g></svg>
<div class="t" style="left:641.0px;width:80px;text-align:center;top:333.8px;font-size:13px;line-height:18px;color:#dcdcdc;">Lamp Post</div>
<svg class="b" style="left:724px;top:267px;overflow:hidden;" width="60" height="60" viewBox="0 0 60 60"><rect width="60" height="60" fill="#d9d9d9"/><path d="M22 6 H38 L35 24 H25 Z" fill="#000"/><path d="M30 24 V60" fill="none" stroke="#000" stroke-width="2" stroke-linecap="round" stroke-linejoin="round"/><g opacity="0.6"><path d="M49 5 H57 V18 H45 V9 Z" fill="#e0e0e0" stroke="#cdcdcd" stroke-width="0.9"/><path d="M49 5 V9 H45" fill="none" stroke="#cdcdcd" stroke-width="0.9"/><path d="M50 17 L58.5 8.5" stroke="#c8c8c8" stroke-width="4.2" stroke-linecap="round"/><path d="M50 17 L58.5 8.5" stroke="#f2f2f2" stroke-width="2.8" stroke-linecap="round"/></g><g opacity="0.55"><rect x="4" y="46" width="9" height="9" fill="#ececec"/><path d="M2 48 V44 H6 M11 44 H15 V48 M2 53 V57 H6 M11 57 H15 V53" stroke="#c8c8c8" stroke-width="0.8" fill="none"/></g></svg>
<div class="t" style="left:714.0px;width:80px;text-align:center;top:327.0px;font-size:13px;line-height:18px;color:#dcdcdc;">Lamp</div>
<div class="t" style="left:714.0px;width:80px;text-align:center;top:341.4px;font-size:13px;line-height:18px;color:#dcdcdc;">Post 1</div>
<svg class="b" style="left:796px;top:267px;overflow:hidden;" width="60" height="60" viewBox="0 0 60 60"><rect width="60" height="60" fill="#d9d9d9"/><path d="M51 8 V60" fill="none" stroke="#000" stroke-width="2" stroke-linecap="round" stroke-linejoin="round"/><circle cx="51" cy="8" r="1.8" fill="#000"/><path d="M51 14 Q40 4 26 16" fill="none" stroke="#000" stroke-width="1.4" stroke-linecap="round" stroke-linejoin="round"/><path d="M51 20 Q44 14 36 22 M44 26 Q48 30 51 28" fill="none" stroke="#000" stroke-width="1" stroke-linecap="round" stroke-linejoin="round"/><path d="M22 26 H30 L32 32 L29 42 H23 L20 32 Z" fill="#000"/><path d="M26 16 V26 M26 42 V46" fill="none" stroke="#000" stroke-width="1" stroke-linecap="round" stroke-linejoin="round"/><g opacity="0.6"><path d="M49 5 H57 V18 H45 V9 Z" fill="#e0e0e0" stroke="#cdcdcd" stroke-width="0.9"/><path d="M49 5 V9 H45" fill="none" stroke="#cdcdcd" stroke-width="0.9"/><path d="M50 17 L58.5 8.5" stroke="#c8c8c8" stroke-width="4.2" stroke-linecap="round"/><path d="M50 17 L58.5 8.5" stroke="#f2f2f2" stroke-width="2.8" stroke-linecap="round"/></g><g opacity="0.55"><rect x="4" y="46" width="9" height="9" fill="#ececec"/><path d="M2 48 V44 H6 M11 44 H15 V48 M2 53 V57 H6 M11 57 H15 V53" stroke="#c8c8c8" stroke-width="0.8" fill="none"/></g></svg>
<div class="t" style="left:786.0px;width:80px;text-align:center;top:327.0px;font-size:13px;line-height:18px;color:#dcdcdc;">Pole with</div>
<div class="t" style="left:786.0px;width:80px;text-align:center;top:341.4px;font-size:13px;line-height:18px;color:#dcdcdc;">Lamp</div>
<svg class="b" style="left:289px;top:370px;overflow:hidden;" width="60" height="60" viewBox="0 0 60 60"><rect width="60" height="60" fill="#d9d9d9"/><path d="M4 16 Q8 10 14 13 Q18 8 24 12 Q30 10 32 16 Q40 14 48 18 Q56 20 52 26 Q58 30 54 34 Q44 36 36 32 Q28 36 18 34 Q8 36 4 30 Q8 26 6 22 Q2 20 4 16 Z" fill="#000"/><ellipse cx="10" cy="10" rx="4" ry="2.5" fill="#000"/><g opacity="0.6"><path d="M49 5 H57 V18 H45 V9 Z" fill="#e0e0e0" stroke="#cdcdcd" stroke-width="0.9"/><path d="M49 5 V9 H45" fill="none" stroke="#cdcdcd" stroke-width="0.9"/><path d="M50 17 L58.5 8.5" stroke="#c8c8c8" stroke-width="4.2" stroke-linecap="round"/><path d="M50 17 L58.5 8.5" stroke="#f2f2f2" stroke-width="2.8" stroke-linecap="round"/></g><g opacity="0.55"><rect x="4" y="46" width="9" height="9" fill="#ececec"/><path d="M2 48 V44 H6 M11 44 H15 V48 M2 53 V57 H6 M11 57 H15 V53" stroke="#c8c8c8" stroke-width="0.8" fill="none"/></g></svg>
<div class="t" style="left:279.0px;width:80px;text-align:center;top:436.8px;font-size:13px;line-height:18px;color:#dcdcdc;">Cloud 1</div>
<svg class="b" style="left:361px;top:370px;overflow:hidden;" width="60" height="60" viewBox="0 0 60 60"><rect width="60" height="60" fill="#cfcfcf"/><ellipse cx="30" cy="20" rx="20" ry="7" fill="#000" filter="url(#bl2)"/><g opacity="0.6"><path d="M49 5 H57 V18 H45 V9 Z" fill="#e0e0e0" stroke="#cdcdcd" stroke-width="0.9"/><path d="M49 5 V9 H45" fill="none" stroke="#cdcdcd" stroke-width="0.9"/><path d="M50 17 L58.5 8.5" stroke="#c8c8c8" stroke-width="4.2" stroke-linecap="round"/><path d="M50 17 L58.5 8.5" stroke="#f2f2f2" stroke-width="2.8" stroke-linecap="round"/></g><g opacity="0.55"><rect x="4" y="46" width="9" height="9" fill="#ececec"/><path d="M2 48 V44 H6 M11 44 H15 V48 M2 53 V57 H6 M11 57 H15 V53" stroke="#c8c8c8" stroke-width="0.8" fill="none"/></g></svg>
<div class="t" style="left:351.0px;width:80px;text-align:center;top:436.8px;font-size:13px;line-height:18px;color:#dcdcdc;">Cloud 2</div>
<svg class="b" style="left:434px;top:370px;overflow:hidden;" width="60" height="60" viewBox="0 0 60 60"><rect width="60" height="60" fill="#cccccc"/><g filter="url(#bl1)"><ellipse cx="34" cy="18" rx="16" ry="7" fill="#000"/><ellipse cx="20" cy="22" rx="9" ry="5" fill="#444"/></g><g opacity="0.6"><path d="M49 5 H57 V18 H45 V9 Z" fill="#e0e0e0" stroke="#cdcdcd" stroke-width="0.9"/><path d="M49 5 V9 H45" fill="none" stroke="#cdcdcd" stroke-width="0.9"/><path d="M50 17 L58.5 8.5" stroke="#c8c8c8" stroke-width="4.2" stroke-linecap="round"/><path d="M50 17 L58.5 8.5" stroke="#f2f2f2" stroke-width="2.8" stroke-linecap="round"/></g><g opacity="0.55"><rect x="4" y="46" width="9" height="9" fill="#ececec"/><path d="M2 48 V44 H6 M11 44 H15 V48 M2 53 V57 H6 M11 57 H15 V53" stroke="#c8c8c8" stroke-width="0.8" fill="none"/></g></svg>
<div class="t" style="left:424.0px;width:80px;text-align:center;top:436.8px;font-size:13px;line-height:18px;color:#dcdcdc;">Cloud 3</div>
<svg class="b" style="left:506px;top:370px;overflow:hidden;" width="60" height="60" viewBox="0 0 60 60"><rect width="60" height="60" fill="#d0d0d0"/><ellipse cx="36.9" cy="35.4" rx="3.2" ry="1.4" fill="#000"/><ellipse cx="38.5" cy="31.1" rx="2.7" ry="1.5" fill="#000"/><ellipse cx="38.3" cy="10.5" rx="2.7" ry="0.9" fill="#000"/><ellipse cx="32.5" cy="32.0" rx="3.3" ry="1.0" fill="#000"/><ellipse cx="12.2" cy="28.6" rx="3.5" ry="0.8" fill="#000"/><ellipse cx="36.6" cy="10.5" rx="3.9" ry="0.7" fill="#000"/><ellipse cx="45.3" cy="13.5" rx="2.2" ry="1.5" fill="#000"/><ellipse cx="32.2" cy="36.5" rx="2.0" ry="1.5" fill="#000"/><ellipse cx="13.0" cy="29.2" rx="2.4" ry="0.8" fill="#000"/><ellipse cx="10.2" cy="8.3" rx="3.5" ry="1.2" fill="#000"/><ellipse cx="35.4" cy="35.4" rx="2.3" ry="1.4" fill="#000"/><ellipse cx="28.9" cy="13.7" rx="2.7" ry="0.8" fill="#000"/><ellipse cx="16.3" cy="10.8" rx="2.4" ry="1.0" fill="#000"/><ellipse cx="32.7" cy="29.5" rx="2.9" ry="0.7" fill="#000"/><ellipse cx="4.6" cy="12.5" rx="3.9" ry="0.8" fill="#000"/><ellipse cx="15.8" cy="29.4" rx="2.4" ry="1.1" fill="#000"/><ellipse cx="45.4" cy="9.4" rx="3.5" ry="1.0" fill="#000"/><ellipse cx="18.6" cy="31.8" rx="1.7" ry="1.0" fill="#000"/><ellipse cx="36.2" cy="11.4" rx="3.8" ry="1.1" fill="#000"/><ellipse cx="19.5" cy="14.2" rx="3.5" ry="1.2" fill="#000"/><ellipse cx="42.4" cy="17.0" rx="1.9" ry="0.7" fill="#000"/><ellipse cx="57.3" cy="34.7" rx="1.6" ry="1.3" fill="#000"/><ellipse cx="21.3" cy="14.8" rx="2.6" ry="0.7" fill="#000"/><ellipse cx="53.3" cy="10.2" rx="2.3" ry="0.9" fill="#000"/><ellipse cx="57.0" cy="34.8" rx="3.1" ry="1.3" fill="#000"/><ellipse cx="8.0" cy="29.5" rx="1.6" ry="1.0" fill="#000"/><g opacity="0.6"><path d="M49 5 H57 V18 H45 V9 Z" fill="#e0e0e0" stroke="#cdcdcd" stroke-width="0.9"/><path d="M49 5 V9 H45" fill="none" stroke="#cdcdcd" stroke-width="0.9"/><path d="M50 17 L58.5 8.5" stroke="#c8c8c8" stroke-width="4.2" stroke-linecap="round"/><path d="M50 17 L58.5 8.5" stroke="#f2f2f2" stroke-width="2.8" stroke-linecap="round"/></g><g opacity="0.55"><rect x="4" y="46" width="9" height="9" fill="#ececec"/><path d="M2 48 V44 H6 M11 44 H15 V48 M2 53 V57 H6 M11 57 H15 V53" stroke="#c8c8c8" stroke-width="0.8" fill="none"/></g></svg>
<div class="t" style="left:496.0px;width:80px;text-align:center;top:436.8px;font-size:13px;line-height:18px;color:#dcdcdc;">Cloud 4</div>
<svg class="b" style="left:579px;top:370px;overflow:hidden;" width="60" height="60" viewBox="0 0 60 60"><rect width="60" height="60" fill="#d9d9d9"/><path d="M-64.40 0 L-4.40 60 M-64.40 60 L-4.40 0" stroke="#000" stroke-width="0.35" fill="none"/><path d="M-61.60 0 L-1.60 60 M-61.60 60 L-1.60 0" stroke="#000" stroke-width="0.35" fill="none"/><path d="M-58.80 0 L1.20 60 M-58.80 60 L1.20 0" stroke="#000" stroke-width="0.35" fill="none"/><path d="M-56.00 0 L4.00 60 M-56.00 60 L4.00 0" stroke="#000" stroke-width="0.35" fill="none"/><path d="M-53.20 0 L6.80 60 M-53.20 60 L6.80 0" stroke="#000" stroke-width="0.35" fill="none"/><path d="M-50.40 0 L9.60 60 M-50.40 60 L9.60 0" stroke="#000" stroke-width="0.35" fill="none"/><path d="M-47.60 0 L12.40 60 M-47.60 60 L12.40 0" stroke="#000" stroke-width="0.35" fill="none"/><path d="M-44.80 0 L15.20 60 M-44.80 60 L15.20 0" stroke="#000" stroke-width="0.35" fill="none"/><path d="M-42.00 0 L18.00 60 M-42.00 60 L18.00 0" stroke="#000" stroke-width="0.35" fill="none"/><path d="M-39.20 0 L20.80 60 M-39.20 60 L20.80 0" stroke="#000" stroke-width="0.35" fill="none"/><path d="M-36.40 0 L23.60 60 M-36.40 60 L23.60 0" stroke="#000" stroke-width="0.35" fill="none"/><path d="M-33.60 0 L26.40 60 M-33.60 60 L26.40 0" stroke="#000" stroke-width="0.35" fill="none"/><path d="M-30.80 0 L29.20 60 M-30.80 60 L29.20 0" stroke="#000" stroke-width="0.35" fill="none"/><path d="M-28.00 0 L32.00 60 M-28.00 60 L32.00 0" stroke="#000" stroke-width="0.35" fill="none"/><path d="M-25.20 0 L34.80 60 M-25.20 60 L34.80 0" stroke="#000" stroke-width="0.35" fill="none"/><path d="M-22.40 0 L37.60 60 M-22.40 60 L37.60 0" stroke="#000" stroke-width="0.35" fill="none"/><path d="M-19.60 0 L40.40 60 M-19.60 60 L40.40 0" stroke="#000" stroke-width="0.35" fill="none"/><path d="M-16.80 0 L43.20 60 M-16.80 60 L43.20 0" stroke="#000" stroke-width="0.35" fill="none"/><path d="M-14.00 0 L46.00 60 M-14.00 60 L46.00 0" stroke="#000" stroke-width="0.35" fill="none"/><path d="M-11.20 0 L48.80 60 M-11.20 60 L48.80 0" stroke="#000" stroke-width="0.35" fill="none"/><path d="M-8.40 0 L51.60 60 M-8.40 60 L51.60 0" stroke="#000" stroke-width="0.35" fill="none"/><path d="M-5.60 0 L54.40 60 M-5.60 60 L54.40 0" stroke="#000" stroke-width="0.35" fill="none"/><path d="M-2.80 0 L57.20 60 M-2.80 60 L57.20 0" stroke="#000" stroke-width="0.35" fill="none"/><path d="M0.00 0 L60.00 60 M0.00 60 L60.00 0" stroke="#000" stroke-width="0.35" fill="none"/><path d="M2.80 0 L62.80 60 M2.80 60 L62.80 0" stroke="#000" stroke-width="0.35" fill="none"/><path d="M5.60 0 L65.60 60 M5.60 60 L65.60 0" stroke="#000" stroke-width="0.35" fill="none"/><path d="M8.40 0 L68.40 60 M8.40 60 L68.40 0" stroke="#000" stroke-width="0.35" fill="none"/><path d="M11.20 0 L71.20 60 M11.20 60 L71.20 0" stroke="#000" stroke-width="0.35" fill="none"/><path d="M14.00 0 L74.00 60 M14.00 60 L74.00 0" stroke="#000" stroke-width="0.35" fill="none"/><path d="M16.80 0 L76.80 60 M16.80 60 L76.80 0" stroke="#000" stroke-width="0.35" fill="none"/><path d="M19.60 0 L79.60 60 M19.60 60 L79.60 0" stroke="#000" stroke-width="0.35" fill="none"/><path d="M22.40 0 L82.40 60 M22.40 60 L82.40 0" stroke="#000" stroke-width="0.35" fill="none"/><path d="M25.20 0 L85.20 60 M25.20 60 L85.20 0" stroke="#000" stroke-width="0.35" fill="none"/><path d="M28.00 0 L88.00 60 M28.00 60 L88.00 0" stroke="#000" stroke-width="0.35" fill="none"/><path d="M30.80 0 L90.80 60 M30.80 60 L90.80 0" stroke="#000" stroke-width="0.35" fill="none"/><path d="M33.60 0 L93.60 60 M33.60 60 L93.60 0" stroke="#000" stroke-width="0.35" fill="none"/><path d="M36.40 0 L96.40 60 M36.40 60 L96.40 0" stroke="#000" stroke-width="0.35" fill="none"/><path d="M39.20 0 L99.20 60 M39.20 60 L99.20 0" stroke="#000" stroke-width="0.35" fill="none"/><path d="M42.00 0 L102.00 60 M42.00 60 L102.00 0" stroke="#000" stroke-width="0.35" fill="none"/><path d="M44.80 0 L104.80 60 M44.80 60 L104.80 0" stroke="#000" stroke-width="0.35" fill="none"/><path d="M47.60 0 L107.60 60 M47.60 60 L107.60 0" stroke="#000" stroke-width="0.35" fill="none"/><path d="M50.40 0 L110.40 60 M50.40 60 L110.40 0" stroke="#000" stroke-width="0.35" fill="none"/><path d="M53.20 0 L113.20 60 M53.20 60 L113.20 0" stroke="#000" stroke-width="0.35" fill="none"/><path d="M56.00 0 L116.00 60 M56.00 60 L116.00 0" stroke="#000" stroke-width="0.35" fill="none"/><path d="M58.80 0 L118.80 60 M58.80 60 L118.80 0" stroke="#000" stroke-width="0.35" fill="none"/><path d="M61.60 0 L121.60 60 M61.60 60 L121.60 0" stroke="#000" stroke-width="0.35" fill="none"/><path d="M64.40 0 L124.40 60 M64.40 60 L124.40 0" stroke="#000" stroke-width="0.35" fill="none"/><g opacity="0.6"><path d="M49 5 H57 V18 H45 V9 Z" fill="#e0e0e0" stroke="#cdcdcd" stroke-width="0.9"/><path d="M49 5 V9 H45" fill="none" stroke="#cdcdcd" stroke-width="0.9"/><path d="M50 17 L58.5 8.5" stroke="#c8c8c8" stroke-width="4.2" stroke-linecap="round"/><path d="M50 17 L58.5 8.5" stroke="#f2f2f2" stroke-width="2.8" stroke-linecap="round"/></g><g opacity="0.55"><rect x="4" y="46" width="9" height="9" fill="#ececec"/><path d="M2 48 V44 H6 M11 44 H15 V48 M2 53 V57 H6 M11 57 H15 V53" stroke="#c8c8c8" stroke-width="0.8" fill="none"/></g></svg>
<div class="t" style="left:569.0px;width:80px;text-align:center;top:430.0px;font-size:13px;line-height:18px;color:#dcdcdc;">Chain</div>
<div class="t" style="left:569.0px;width:80px;text-align:center;top:444.4px;font-size:13px;line-height:18px;color:#dcdcdc;">Fence 1</div>
<svg class="b" style="left:651px;top:370px;overflow:hidden;" width="60" height="60" viewBox="0 0 60 60"><rect width="60" height="60" fill="#d9d9d9"/><path d="M-66.00 0 L-6.00 60 M-66.00 60 L-6.00 0" stroke="#000" stroke-width="0.95" fill="none"/><path d="M-61.60 0 L-1.60 60 M-61.60 60 L-1.60 0" stroke="#000" stroke-width="0.95" fill="none"/><path d="M-57.20 0 L2.80 60 M-57.20 60 L2.80 0" stroke="#000" stroke-width="0.95" fill="none"/><path d="M-52.80 0 L7.20 60 M-52.80 60 L7.20 0" stroke="#000" stroke-width="0.95" fill="none"/><path d="M-48.40 0 L11.60 60 M-48.40 60 L11.60 0" stroke="#000" stroke-width="0.95" fill="none"/><path d="M-44.00 0 L16.00 60 M-44.00 60 L16.00 0" stroke="#000" stroke-width="0.95" fill="none"/><path d="M-39.60 0 L20.40 60 M-39.60 60 L20.40 0" stroke="#000" stroke-width="0.95" fill="none"/><path d="M-35.20 0 L24.80 60 M-35.20 60 L24.80 0" stroke="#000" stroke-width="0.95" fill="none"/><path d="M-30.80 0 L29.20 60 M-30.80 60 L29.20 0" stroke="#000" stroke-width="0.95" fill="none"/><path d="M-26.40 0 L33.60 60 M-26.40 60 L33.60 0" stroke="#000" stroke-width="0.95" fill="none"/><path d="M-22.00 0 L38.00 60 M-22.00 60 L38.00 0" stroke="#000" stroke-width="0.95" fill="none"/><path d="M-17.60 0 L42.40 60 M-17.60 60 L42.40 0" stroke="#000" stroke-width="0.95" fill="none"/><path d="M-13.20 0 L46.80 60 M-13.20 60 L46.80 0" stroke="#000" stroke-width="0.95" fill="none"/><path d="M-8.80 0 L51.20 60 M-8.80 60 L51.20 0" stroke="#000" stroke-width="0.95" fill="none"/><path d="M-4.40 0 L55.60 60 M-4.40 60 L55.60 0" stroke="#000" stroke-width="0.95" fill="none"/><path d="M0.00 0 L60.00 60 M0.00 60 L60.00 0" stroke="#000" stroke-width="0.95" fill="none"/><path d="M4.40 0 L64.40 60 M4.40 60 L64.40 0" stroke="#000" stroke-width="0.95" fill="none"/><path d="M8.80 0 L68.80 60 M8.80 60 L68.80 0" stroke="#000" stroke-width="0.95" fill="none"/><path d="M13.20 0 L73.20 60 M13.20 60 L73.20 0" stroke="#000" stroke-width="0.95" fill="none"/><path d="M17.60 0 L77.60 60 M17.60 60 L77.60 0" stroke="#000" stroke-width="0.95" fill="none"/><path d="M22.00 0 L82.00 60 M22.00 60 L82.00 0" stroke="#000" stroke-width="0.95" fill="none"/><path d="M26.40 0 L86.40 60 M26.40 60 L86.40 0" stroke="#000" stroke-width="0.95" fill="none"/><path d="M30.80 0 L90.80 60 M30.80 60 L90.80 0" stroke="#000" stroke-width="0.95" fill="none"/><path d="M35.20 0 L95.20 60 M35.20 60 L95.20 0" stroke="#000" stroke-width="0.95" fill="none"/><path d="M39.60 0 L99.60 60 M39.60 60 L99.60 0" stroke="#000" stroke-width="0.95" fill="none"/><path d="M44.00 0 L104.00 60 M44.00 60 L104.00 0" stroke="#000" stroke-width="0.95" fill="none"/><path d="M48.40 0 L108.40 60 M48.40 60 L108.40 0" stroke="#000" stroke-width="0.95" fill="none"/><path d="M52.80 0 L112.80 60 M52.80 60 L112.80 0" stroke="#000" stroke-width="0.95" fill="none"/><path d="M57.20 0 L117.20 60 M57.20 60 L117.20 0" stroke="#000" stroke-width="0.95" fill="none"/><path d="M61.60 0 L121.60 60 M61.60 60 L121.60 0" stroke="#000" stroke-width="0.95" fill="none"/><path d="M66.00 0 L126.00 60 M66.00 60 L126.00 0" stroke="#000" stroke-width="0.95" fill="none"/><g opacity="0.6"><path d="M49 5 H57 V18 H45 V9 Z" fill="#e0e0e0" stroke="#cdcdcd" stroke-width="0.9"/><path d="M49 5 V9 H45" fill="none" stroke="#cdcdcd" stroke-width="0.9"/><path d="M50 17 L58.5 8.5" stroke="#c8c8c8" stroke-width="4.2" stroke-linecap="round"/><path d="M50 17 L58.5 8.5" stroke="#f2f2f2" stroke-width="2.8" stroke-linecap="round"/></g><g opacity="0.55"><rect x="4" y="46" width="9" height="9" fill="#ececec"/><path d="M2 48 V44 H6 M11 44 H15 V48 M2 53 V57 H6 M11 57 H15 V53" stroke="#c8c8c8" stroke-width="0.8" fill="none"/></g></svg>
<div class="t" style="left:641.0px;width:80px;text-align:center;top:430.0px;font-size:13px;line-height:18px;color:#dcdcdc;">Chain</div>
<div class="t" style="left:641.0px;width:80px;text-align:center;top:444.4px;font-size:13px;line-height:18px;color:#dcdcdc;">Fence 2</div>
<svg class="b" style="left:724px;top:370px;overflow:hidden;" width="60" height="60" viewBox="0 0 60 60"><rect width="60" height="60" fill="#d9d9d9"/><path d="M-75.00 0 L-15.00 60 M-75.00 60 L-15.00 0" stroke="#000" stroke-width="1.6" fill="none"/><path d="M-62.50 0 L-2.50 60 M-62.50 60 L-2.50 0" stroke="#000" stroke-width="1.6" fill="none"/><path d="M-50.00 0 L10.00 60 M-50.00 60 L10.00 0" stroke="#000" stroke-width="1.6" fill="none"/><path d="M-37.50 0 L22.50 60 M-37.50 60 L22.50 0" stroke="#000" stroke-width="1.6" fill="none"/><path d="M-25.00 0 L35.00 60 M-25.00 60 L35.00 0" stroke="#000" stroke-width="1.6" fill="none"/><path d="M-12.50 0 L47.50 60 M-12.50 60 L47.50 0" stroke="#000" stroke-width="1.6" fill="none"/><path d="M0.00 0 L60.00 60 M0.00 60 L60.00 0" stroke="#000" stroke-width="1.6" fill="none"/><path d="M12.50 0 L72.50 60 M12.50 60 L72.50 0" stroke="#000" stroke-width="1.6" fill="none"/><path d="M25.00 0 L85.00 60 M25.00 60 L85.00 0" stroke="#000" stroke-width="1.6" fill="none"/><path d="M37.50 0 L97.50 60 M37.50 60 L97.50 0" stroke="#000" stroke-width="1.6" fill="none"/><path d="M50.00 0 L110.00 60 M50.00 60 L110.00 0" stroke="#000" stroke-width="1.6" fill="none"/><path d="M62.50 0 L122.50 60 M62.50 60 L122.50 0" stroke="#000" stroke-width="1.6" fill="none"/><path d="M75.00 0 L135.00 60 M75.00 60 L135.00 0" stroke="#000" stroke-width="1.6" fill="none"/><circle cx="0.0" cy="0.0" r="1.5" fill="none" stroke="#000" stroke-width="1.1"/><circle cx="0.0" cy="12.5" r="1.5" fill="none" stroke="#000" stroke-width="1.1"/><circle cx="0.0" cy="25.0" r="1.5" fill="none" stroke="#000" stroke-width="1.1"/><circle cx="0.0" cy="37.5" r="1.5" fill="none" stroke="#000" stroke-width="1.1"/><circle cx="0.0" cy="50.0" r="1.5" fill="none" stroke="#000" stroke-width="1.1"/><circle cx="0.0" cy="62.5" r="1.5" fill="none" stroke="#000" stroke-width="1.1"/><circle cx="6.25" cy="6.25" r="1.5" fill="none" stroke="#000" stroke-width="1.1"/><circle cx="6.25" cy="18.75" r="1.5" fill="none" stroke="#000" stroke-width="1.1"/><circle cx="6.25" cy="31.25" r="1.5" fill="none" stroke="#000" stroke-width="1.1"/><circle cx="6.25" cy="43.75" r="1.5" fill="none" stroke="#000" stroke-width="1.1"/><circle cx="6.25" cy="56.25" r="1.5" fill="none" stroke="#000" stroke-width="1.1"/><circle cx="12.5" cy="0.0" r="1.5" fill="none" stroke="#000" stroke-width="1.1"/><circle cx="12.5" cy="12.5" r="1.5" fill="none" stroke="#000" stroke-width="1.1"/><circle cx="12.5" cy="25.0" r="1.5" fill="none" stroke="#000" stroke-width="1.1"/><circle cx="12.5" cy="37.5" r="1.5" fill="none" stroke="#000" stroke-width="1.1"/><circle cx="12.5" cy="50.0" r="1.5" fill="none" stroke="#000" stroke-width="1.1"/><circle cx="12.5" cy="62.5" r="1.5" fill="none" stroke="#000" stroke-width="1.1"/><circle cx="18.75" cy="6.25" r="1.5" fill="none" stroke="#000" stroke-width="1.1"/><circle cx="18.75" cy="18.75" r="1.5" fill="none" stroke="#000" stroke-width="1.1"/><circle cx="18.75" cy="31.25" r="1.5" fill="none" stroke="#000" stroke-width="1.1"/><circle cx="18.75" cy="43.75" r="1.5" fill="none" stroke="#000" stroke-width="1.1"/><circle cx="18.75" cy="56.25" r="1.5" fill="none" stroke="#000" stroke-width="1.1"/><circle cx="25.0" cy="0.0" r="1.5" fill="none" stroke="#000" stroke-width="1.1"/><circle cx="25.0" cy="12.5" r="1.5" fill="none" stroke="#000" stroke-width="1.1"/><circle cx="25.0" cy="25.0" r="1.5" fill="none" stroke="#000" stroke-width="1.1"/><circle cx="25.0" cy="37.5" r="1.5" fill="none" stroke="#000" stroke-width="1.1"/><circle cx="25.0" cy="50.0" r="1.5" fill="none" stroke="#000" stroke-width="1.1"/><circle cx="25.0" cy="62.5" r="1.5" fill="none" stroke="#000" stroke-width="1.1"/><circle cx="31.25" cy="6.25" r="1.5" fill="none" stroke="#000" stroke-width="1.1"/><circle cx="31.25" cy="18.75" r="1.5" fill="none" stroke="#000" stroke-width="1.1"/><circle cx="31.25" cy="31.25" r="1.5" fill="none" stroke="#000" stroke-width="1.1"/><circle cx="31.25" cy="43.75" r="1.5" fill="none" stroke="#000" stroke-width="1.1"/><circle cx="31.25" cy="56.25" r="1.5" fill="none" stroke="#000" stroke-width="1.1"/><circle cx="37.5" cy="0.0" r="1.5" fill="none" stroke="#000" stroke-width="1.1"/><circle cx="37.5" cy="12.5" r="1.5" fill="none" stroke="#000" stroke-width="1.1"/><circle cx="37.5" cy="25.0" r="1.5" fill="none" stroke="#000" stroke-width="1.1"/><circle cx="37.5" cy="37.5" r="1.5" fill="none" stroke="#000" stroke-width="1.1"/><circle cx="37.5" cy="50.0" r="1.5" fill="none" stroke="#000" stroke-width="1.1"/><circle cx="37.5" cy="62.5" r="1.5" fill="none" stroke="#000" stroke-width="1.1"/><circle cx="43.75" cy="6.25" r="1.5" fill="none" stroke="#000" stroke-width="1.1"/><circle cx="43.75" cy="18.75" r="1.5" fill="none" stroke="#000" stroke-width="1.1"/><circle cx="43.75" cy="31.25" r="1.5" fill="none" stroke="#000" stroke-width="1.1"/><circle cx="43.75" cy="43.75" r="1.5" fill="none" stroke="#000" stroke-width="1.1"/><circle cx="43.75" cy="56.25" r="1.5" fill="none" stroke="#000" stroke-width="1.1"/><circle cx="50.0" cy="0.0" r="1.5" fill="none" stroke="#000" stroke-width="1.1"/><circle cx="50.0" cy="12.5" r="1.5" fill="none" stroke="#000" stroke-width="1.1"/><circle cx="50.0" cy="25.0" r="1.5" fill="none" stroke="#000" stroke-width="1.1"/><circle cx="50.0" cy="37.5" r="1.5" fill="none" stroke="#000" stroke-width="1.1"/><circle cx="50.0" cy="50.0" r="1.5" fill="none" stroke="#000" stroke-width="1.1"/><circle cx="50.0" cy="62.5" r="1.5" fill="none" stroke="#000" stroke-width="1.1"/><circle cx="56.25" cy="6.25" r="1.5" fill="none" stroke="#000" stroke-width="1.1"/><circle cx="56.25" cy="18.75" r="1.5" fill="none" stroke="#000" stroke-width="1.1"/><circle cx="56.25" cy="31.25" r="1.5" fill="none" stroke="#000" stroke-width="1.1"/><circle cx="56.25" cy="43.75" r="1.5" fill="none" stroke="#000" stroke-width="1.1"/><circle cx="56.25" cy="56.25" r="1.5" fill="none" stroke="#000" stroke-width="1.1"/><circle cx="62.5" cy="0.0" r="1.5" fill="none" stroke="#000" stroke-width="1.1"/><circle cx="62.5" cy="12.5" r="1.5" fill="none" stroke="#000" stroke-width="1.1"/><circle cx="62.5" cy="25.0" r="1.5" fill="none" stroke="#000" stroke-width="1.1"/><circle cx="62.5" cy="37.5" r="1.5" fill="none" stroke="#000" stroke-width="1.1"/><circle cx="62.5" cy="50.0" r="1.5" fill="none" stroke="#000" stroke-width="1.1"/><circle cx="62.5" cy="62.5" r="1.5" fill="none" stroke="#000" stroke-width="1.1"/><g opacity="0.6"><path d="M49 5 H57 V18 H45 V9 Z" fill="#e0e0e0" stroke="#cdcdcd" stroke-width="0.9"/><path d="M49 5 V9 H45" fill="none" stroke="#cdcdcd" stroke-width="0.9"/><path d="M50 17 L58.5 8.5" stroke="#c8c8c8" stroke-width="4.2" stroke-linecap="round"/><path d="M50 17 L58.5 8.5" stroke="#f2f2f2" stroke-width="2.8" stroke-linecap="round"/></g><g opacity="0.55"><rect x="4" y="46" width="9" height="9" fill="#ececec"/><path d="M2 48 V44 H6 M11 44 H15 V48 M2 53 V57 H6 M11 57 H15 V53" stroke="#c8c8c8" stroke-width="0.8" fill="none"/></g></svg>
<div class="t" style="left:714.0px;width:80px;text-align:center;top:430.0px;font-size:13px;line-height:18px;color:#dcdcdc;">Chain</div>
<div class="t" style="left:714.0px;width:80px;text-align:center;top:444.4px;font-size:13px;line-height:18px;color:#dcdcdc;">Fence 3</div>
<svg class="b" style="left:796px;top:370px;overflow:hidden;" width="60" height="60" viewBox="0 0 60 60"><rect width="60" height="60" fill="#d9d9d9"/><path d="M1 24 H59 V27 H1 Z M1 32 H59 V35 H1 Z" fill="#000"/><rect x="2.0" y="20" width="2.5" height="16" fill="#000"/><rect x="6.1" y="20" width="2.5" height="16" fill="#000"/><rect x="10.2" y="20" width="2.5" height="16" fill="#000"/><rect x="14.3" y="20" width="2.5" height="16" fill="#000"/><rect x="18.4" y="20" width="2.5" height="16" fill="#000"/><rect x="22.5" y="20" width="2.5" height="16" fill="#000"/><rect x="26.6" y="20" width="2.5" height="16" fill="#000"/><rect x="30.7" y="20" width="2.5" height="16" fill="#000"/><rect x="34.8" y="20" width="2.5" height="16" fill="#000"/><rect x="38.9" y="20" width="2.5" height="16" fill="#000"/><rect x="43.0" y="20" width="2.5" height="16" fill="#000"/><rect x="47.1" y="20" width="2.5" height="16" fill="#000"/><rect x="51.2" y="20" width="2.5" height="16" fill="#000"/><rect x="55.3" y="20" width="2.5" height="16" fill="#000"/><g opacity="0.6"><path d="M49 5 H57 V18 H45 V9 Z" fill="#e0e0e0" stroke="#cdcdcd" stroke-width="0.9"/><path d="M49 5 V9 H45" fill="none" stroke="#cdcdcd" stroke-width="0.9"/><path d="M50 17 L58.5 8.5" stroke="#c8c8c8" stroke-width="4.2" stroke-linecap="round"/><path d="M50 17 L58.5 8.5" stroke="#f2f2f2" stroke-width="2.8" stroke-linecap="round"/></g><g opacity="0.55"><rect x="4" y="46" width="9" height="9" fill="#ececec"/><path d="M2 48 V44 H6 M11 44 H15 V48 M2 53 V57 H6 M11 57 H15 V53" stroke="#c8c8c8" stroke-width="0.8" fill="none"/></g></svg>
<div class="t" style="left:786.0px;width:80px;text-align:center;top:430.0px;font-size:13px;line-height:18px;color:#dcdcdc;">Small</div>
<div class="t" style="left:786.0px;width:80px;text-align:center;top:444.4px;font-size:13px;line-height:18px;color:#dcdcdc;">Fence</div>
<svg class="b" style="left:289px;top:472px;overflow:hidden;" width="60" height="60" viewBox="0 0 60 60"><rect width="60" height="60" fill="#d9d9d9"/><path d="M43 3 V60" fill="none" stroke="#000" stroke-width="1.2" stroke-linecap="round" stroke-linejoin="round"/><path d="M43 6 Q32 4 22 8 Q14 6 8 10 Q4 16 6 20 Q4 26 10 30 Q24 27 43 30 Z" fill="#000"/><g opacity="0.6"><path d="M49 5 H57 V18 H45 V9 Z" fill="#e0e0e0" stroke="#cdcdcd" stroke-width="0.9"/><path d="M49 5 V9 H45" fill="none" stroke="#cdcdcd" stroke-width="0.9"/><path d="M50 17 L58.5 8.5" stroke="#c8c8c8" stroke-width="4.2" stroke-linecap="round"/><path d="M50 17 L58.5 8.5" stroke="#f2f2f2" stroke-width="2.8" stroke-linecap="round"/></g><g opacity="0.55"><rect x="4" y="46" width="9" height="9" fill="#ececec"/><path d="M2 48 V44 H6 M11 44 H15 V48 M2 53 V57 H6 M11 57 H15 V53" stroke="#c8c8c8" stroke-width="0.8" fill="none"/></g></svg>
<div class="t" style="left:279.0px;width:80px;text-align:center;top:538.8px;font-size:13px;line-height:18px;color:#dcdcdc;">Flag 1</div>
<svg class="b" style="left:361px;top:472px;overflow:hidden;" width="60" height="60" viewBox="0 0 60 60"><rect width="60" height="60" fill="#d9d9d9"/><path d="M45 2 V60" fill="none" stroke="#000" stroke-width="1.6" stroke-linecap="round" stroke-linejoin="round"/><path d="M45 5 Q30 12 6 10 Q8 20 6 32 Q26 26 45 30 Z" fill="#000"/><g opacity="0.6"><path d="M49 5 H57 V18 H45 V9 Z" fill="#e0e0e0" stroke="#cdcdcd" stroke-width="0.9"/><path d="M49 5 V9 H45" fill="none" stroke="#cdcdcd" stroke-width="0.9"/><path d="M50 17 L58.5 8.5" stroke="#c8c8c8" stroke-width="4.2" stroke-linecap="round"/><path d="M50 17 L58.5 8.5" stroke="#f2f2f2" stroke-width="2.8" stroke-linecap="round"/></g><g opacity="0.55"><rect x="4" y="46" width="9" height="9" fill="#ececec"/><path d="M2 48 V44 H6 M11 44 H15 V48 M2 53 V57 H6 M11 57 H15 V53" stroke="#c8c8c8" stroke-width="0.8" fill="none"/></g></svg>
<div class="t" style="left:351.0px;width:80px;text-align:center;top:538.8px;font-size:13px;line-height:18px;color:#dcdcdc;">Flag 2</div>
<svg class="b" style="left:434px;top:472px;overflow:hidden;" width="60" height="60" viewBox="0 0 60 60"><rect width="60" height="60" fill="#d9d9d9"/><path d="M13 8 V60" fill="none" stroke="#000" stroke-width="1.1" stroke-linecap="round" stroke-linejoin="round"/><path d="M13 8 Q26 9 38 7 Q46 6 52 12 Q44 14 36 14 Q24 14 13 20 Z" fill="#000"/><g opacity="0.6"><path d="M49 5 H57 V18 H45 V9 Z" fill="#e0e0e0" stroke="#cdcdcd" stroke-width="0.9"/><path d="M49 5 V9 H45" fill="none" stroke="#cdcdcd" stroke-width="0.9"/><path d="M50 17 L58.5 8.5" stroke="#c8c8c8" stroke-width="4.2" stroke-linecap="round"/><path d="M50 17 L58.5 8.5" stroke="#f2f2f2" stroke-width="2.8" stroke-linecap="round"/></g><g opacity="0.55"><rect x="4" y="46" width="9" height="9" fill="#ececec"/><path d="M2 48 V44 H6 M11 44 H15 V48 M2 53 V57 H6 M11 57 H15 V53" stroke="#c8c8c8" stroke-width="0.8" fill="none"/></g></svg>
<div class="t" style="left:424.0px;width:80px;text-align:center;top:538.8px;font-size:13px;line-height:18px;color:#dcdcdc;">Flag 3</div>
<svg class="b" style="left:506px;top:472px;overflow:hidden;" width="60" height="60" viewBox="0 0 60 60"><rect width="60" height="60" fill="#d9d9d9"/><path d="M16 1 V60" fill="none" stroke="#000" stroke-width="1.1" stroke-linecap="round" stroke-linejoin="round"/><path d="M16 3 Q34 12 44 22 Q42 34 44 48 Q30 46 16 40 Z" fill="#000"/><g opacity="0.6"><path d="M49 5 H57 V18 H45 V9 Z" fill="#e0e0e0" stroke="#cdcdcd" stroke-width="0.9"/><path d="M49 5 V9 H45" fill="none" stroke="#cdcdcd" stroke-width="0.9"/><path d="M50 17 L58.5 8.5" stroke="#c8c8c8" stroke-width="4.2" stroke-linecap="round"/><path d="M50 17 L58.5 8.5" stroke="#f2f2f2" stroke-width="2.8" stroke-linecap="round"/></g><g opacity="0.55"><rect x="4" y="46" width="9" height="9" fill="#ececec"/><path d="M2 48 V44 H6 M11 44 H15 V48 M2 53 V57 H6 M11 57 H15 V53" stroke="#c8c8c8" stroke-width="0.8" fill="none"/></g></svg>
<div class="t" style="left:496.0px;width:80px;text-align:center;top:538.8px;font-size:13px;line-height:18px;color:#dcdcdc;">Flag 4</div>
<svg class="b" style="left:579px;top:472px;overflow:hidden;" width="60" height="60" viewBox="0 0 60 60"><rect width="60" height="60" fill="#d9d9d9"/><path d="M1 14 Q30 19.0 59 14" fill="none" stroke="#000" stroke-width="0.6" stroke-linecap="round" stroke-linejoin="round"/><path d="M2.1 14.7 H8.1 L5.1 21.3 Z" fill="#000"/><path d="M10.4 15.7 H16.4 L13.4 22.3 Z" fill="#000"/><path d="M18.7 16.3 H24.7 L21.7 22.9 Z" fill="#000"/><path d="M27.0 16.5 H33.0 L30.0 23.1 Z" fill="#000"/><path d="M35.3 16.3 H41.3 L38.3 22.9 Z" fill="#000"/><path d="M43.6 15.7 H49.6 L46.6 22.3 Z" fill="#000"/><path d="M51.9 14.7 H57.9 L54.9 21.3 Z" fill="#000"/><path d="M1 27 Q30 30.0 59 27" fill="none" stroke="#000" stroke-width="0.6" stroke-linecap="round" stroke-linejoin="round"/><path d="M2.4 27.4 H7.9 L5.1 33.4 Z" fill="#000"/><path d="M10.7 28.0 H16.2 L13.4 34.1 Z" fill="#000"/><path d="M19.0 28.4 H24.5 L21.7 34.4 Z" fill="#000"/><path d="M27.2 28.5 H32.8 L30.0 34.5 Z" fill="#000"/><path d="M35.5 28.4 H41.0 L38.3 34.4 Z" fill="#000"/><path d="M43.8 28.0 H49.3 L46.6 34.1 Z" fill="#000"/><path d="M52.1 27.4 H57.6 L54.9 33.4 Z" fill="#000"/><path d="M1 40 Q30 44 59 40" fill="none" stroke="#000" stroke-width="0.6" stroke-linecap="round" stroke-linejoin="round"/><path d="M2.1 40.5 H8.1 L5.1 47.1 Z" fill="#000"/><path d="M10.4 41.3 H16.4 L13.4 47.9 Z" fill="#000"/><path d="M18.7 41.8 H24.7 L21.7 48.4 Z" fill="#000"/><path d="M27.0 42.0 H33.0 L30.0 48.6 Z" fill="#000"/><path d="M35.3 41.8 H41.3 L38.3 48.4 Z" fill="#000"/><path d="M43.6 41.3 H49.6 L46.6 47.9 Z" fill="#000"/><path d="M51.9 40.5 H57.9 L54.9 47.1 Z" fill="#000"/><g opacity="0.6"><path d="M49 5 H57 V18 H45 V9 Z" fill="#e0e0e0" stroke="#cdcdcd" stroke-width="0.9"/><path d="M49 5 V9 H45" fill="none" stroke="#cdcdcd" stroke-width="0.9"/><path d="M50 17 L58.5 8.5" stroke="#c8c8c8" stroke-width="4.2" stroke-linecap="round"/><path d="M50 17 L58.5 8.5" stroke="#f2f2f2" stroke-width="2.8" stroke-linecap="round"/></g><g opacity="0.55"><rect x="4" y="46" width="9" height="9" fill="#ececec"/><path d="M2 48 V44 H6 M11 44 H15 V48 M2 53 V57 H6 M11 57 H15 V53" stroke="#c8c8c8" stroke-width="0.8" fill="none"/></g></svg>
<div class="t" style="left:569.0px;width:80px;text-align:center;top:532.0px;font-size:13px;line-height:18px;color:#dcdcdc;">Pennant</div>
<div class="t" style="left:569.0px;width:80px;text-align:center;top:546.4px;font-size:13px;line-height:18px;color:#dcdcdc;">Flags 1</div>
<svg class="b" style="left:651px;top:472px;overflow:hidden;" width="60" height="60" viewBox="0 0 60 60"><rect width="60" height="60" fill="#d9d9d9"/><path d="M0 25 Q30 29.4 60 25" fill="none" stroke="#000" stroke-width="0.6" stroke-linecap="round" stroke-linejoin="round"/><path d="M0.4 25.3 H4.2 L2.3 29.5 Z" fill="#000"/><path d="M5.0 25.9 H8.8 L6.9 30.1 Z" fill="#000"/><path d="M9.6 26.4 H13.4 L11.5 30.5 Z" fill="#000"/><path d="M14.3 26.7 H18.1 L16.2 30.9 Z" fill="#000"/><path d="M18.9 27.0 H22.7 L20.8 31.2 Z" fill="#000"/><path d="M23.5 27.1 H27.3 L25.4 31.3 Z" fill="#000"/><path d="M28.1 27.2 H31.9 L30.0 31.4 Z" fill="#000"/><path d="M32.7 27.1 H36.5 L34.6 31.3 Z" fill="#000"/><path d="M37.3 27.0 H41.1 L39.2 31.2 Z" fill="#000"/><path d="M41.9 26.7 H45.7 L43.8 30.9 Z" fill="#000"/><path d="M46.6 26.4 H50.4 L48.5 30.5 Z" fill="#000"/><path d="M51.2 25.9 H55.0 L53.1 30.1 Z" fill="#000"/><path d="M55.8 25.3 H59.6 L57.7 29.5 Z" fill="#000"/><g opacity="0.6"><path d="M49 5 H57 V18 H45 V9 Z" fill="#e0e0e0" stroke="#cdcdcd" stroke-width="0.9"/><path d="M49 5 V9 H45" fill="none" stroke="#cdcdcd" stroke-width="0.9"/><path d="M50 17 L58.5 8.5" stroke="#c8c8c8" stroke-width="4.2" stroke-linecap="round"/><path d="M50 17 L58.5 8.5" stroke="#f2f2f2" stroke-width="2.8" stroke-linecap="round"/></g><g opacity="0.55"><rect x="4" y="46" width="9" height="9" fill="#ececec"/><path d="M2 48 V44 H6 M11 44 H15 V48 M2 53 V57 H6 M11 57 H15 V53" stroke="#c8c8c8" stroke-width="0.8" fill="none"/></g></svg>
<div class="t" style="left:641.0px;width:80px;text-align:center;top:532.0px;font-size:13px;line-height:18px;color:#dcdcdc;">Pennant</div>
<div class="t" style="left:641.0px;width:80px;text-align:center;top:546.4px;font-size:13px;line-height:18px;color:#dcdcdc;">Flags 2</div>
<svg class="b" style="left:724px;top:472px;overflow:hidden;" width="60" height="60" viewBox="0 0 60 60"><rect width="60" height="60" fill="#d9d9d9"/><path d="M0 25 Q30 28.6 60 25" fill="none" stroke="#000" stroke-width="0.6" stroke-linecap="round" stroke-linejoin="round"/><path d="M1.0 25.5 H7.5 L4.3 32.6 Z" fill="#000"/><path d="M9.6 26.2 H16.1 L12.9 33.4 Z" fill="#000"/><path d="M18.2 26.7 H24.7 L21.4 33.8 Z" fill="#000"/><path d="M26.8 26.8 H33.2 L30.0 34.0 Z" fill="#000"/><path d="M35.3 26.7 H41.8 L38.6 33.8 Z" fill="#000"/><path d="M43.9 26.2 H50.4 L47.1 33.4 Z" fill="#000"/><path d="M52.5 25.5 H59.0 L55.7 32.6 Z" fill="#000"/><g opacity="0.6"><path d="M49 5 H57 V18 H45 V9 Z" fill="#e0e0e0" stroke="#cdcdcd" stroke-width="0.9"/><path d="M49 5 V9 H45" fill="none" stroke="#cdcdcd" stroke-width="0.9"/><path d="M50 17 L58.5 8.5" stroke="#c8c8c8" stroke-width="4.2" stroke-linecap="round"/><path d="M50 17 L58.5 8.5" stroke="#f2f2f2" stroke-width="2.8" stroke-linecap="round"/></g><g opacity="0.55"><rect x="4" y="46" width="9" height="9" fill="#ececec"/><path d="M2 48 V44 H6 M11 44 H15 V48 M2 53 V57 H6 M11 57 H15 V53" stroke="#c8c8c8" stroke-width="0.8" fill="none"/></g></svg>
<div class="t" style="left:714.0px;width:80px;text-align:center;top:532.0px;font-size:13px;line-height:18px;color:#dcdcdc;">Pennant</div>
<div class="t" style="left:714.0px;width:80px;text-align:center;top:546.4px;font-size:13px;line-height:18px;color:#dcdcdc;">Flags 3</div>
<svg class="b" style="left:796px;top:472px;overflow:hidden;" width="60" height="60" viewBox="0 0 60 60"><rect width="60" height="60" fill="#d9d9d9"/><path d="M0 60 V36 L3.4 35.2 L5.8 38.2 L7.8 36.0 L12.5 33.5 L16.2 36.7 L18.3 35.3 L22.4 35.7 L26.6 33.9 L29.3 33.7 L32.8 38.5 L36.6 37.6 L39.7 37.5 L42.1 34.7 L46.1 37.4 L49.3 33.5 L52.1 34.3 L55.0 37.9 L57.6 38.3 L60.0 33.3 L60 60 Z" fill="#000"/><path d="M14.3 40 Q13.8 34.7 13.2 29.5" fill="none" stroke="#000" stroke-width="0.8" stroke-linecap="round" stroke-linejoin="round"/><path d="M36.2 40 Q34.5 34.2 32.8 28.5" fill="none" stroke="#000" stroke-width="0.8" stroke-linecap="round" stroke-linejoin="round"/><path d="M0.8 40 Q-0.2 33.0 -1.1 26.0" fill="none" stroke="#000" stroke-width="0.8" stroke-linecap="round" stroke-linejoin="round"/><path d="M14.1 40 Q13.9 32.0 13.8 24.1" fill="none" stroke="#000" stroke-width="0.8" stroke-linecap="round" stroke-linejoin="round"/><path d="M50.2 40 Q50.7 35.1 51.3 30.3" fill="none" stroke="#000" stroke-width="0.8" stroke-linecap="round" stroke-linejoin="round"/><path d="M9.0 40 Q10.5 34.2 12.0 28.4" fill="none" stroke="#000" stroke-width="0.8" stroke-linecap="round" stroke-linejoin="round"/><path d="M31.4 40 Q32.1 33.6 32.8 27.1" fill="none" stroke="#000" stroke-width="0.8" stroke-linecap="round" stroke-linejoin="round"/><path d="M3.8 40 Q4.2 33.5 4.6 26.9" fill="none" stroke="#000" stroke-width="0.8" stroke-linecap="round" stroke-linejoin="round"/><path d="M18.1 40 Q19.5 37.8 21.0 35.6" fill="none" stroke="#000" stroke-width="0.8" stroke-linecap="round" stroke-linejoin="round"/><path d="M28.4 40 Q29.9 33.7 31.4 27.4" fill="none" stroke="#000" stroke-width="0.8" stroke-linecap="round" stroke-linejoin="round"/><path d="M42.8 40 Q42.4 32.5 42.0 24.9" fill="none" stroke="#000" stroke-width="0.8" stroke-linecap="round" stroke-linejoin="round"/><path d="M48.1 40 Q49.8 35.3 51.5 30.7" fill="none" stroke="#000" stroke-width="0.8" stroke-linecap="round" stroke-linejoin="round"/><path d="M52.7 40 Q51.3 37.4 49.8 34.8" fill="none" stroke="#000" stroke-width="0.8" stroke-linecap="round" stroke-linejoin="round"/><path d="M13.0 40 Q12.8 32.2 12.5 24.4" fill="none" stroke="#000" stroke-width="0.8" stroke-linecap="round" stroke-linejoin="round"/><path d="M37.6 40 Q37.6 36.2 37.7 32.4" fill="none" stroke="#000" stroke-width="0.8" stroke-linecap="round" stroke-linejoin="round"/><path d="M23.2 40 Q23.5 35.9 23.8 31.8" fill="none" stroke="#000" stroke-width="0.8" stroke-linecap="round" stroke-linejoin="round"/><path d="M35.1 40 Q35.8 32.6 36.5 25.1" fill="none" stroke="#000" stroke-width="0.8" stroke-linecap="round" stroke-linejoin="round"/><path d="M55.7 40 Q57.7 32.9 59.7 25.7" fill="none" stroke="#000" stroke-width="0.8" stroke-linecap="round" stroke-linejoin="round"/><path d="M40.3 40 Q41.7 37.0 43.2 34.0" fill="none" stroke="#000" stroke-width="0.8" stroke-linecap="round" stroke-linejoin="round"/><path d="M57.9 40 Q58.2 32.6 58.4 25.1" fill="none" stroke="#000" stroke-width="0.8" stroke-linecap="round" stroke-linejoin="round"/><path d="M42.8 40 Q44.2 36.7 45.5 33.5" fill="none" stroke="#000" stroke-width="0.8" stroke-linecap="round" stroke-linejoin="round"/><path d="M34.4 40 Q32.7 36.3 30.9 32.6" fill="none" stroke="#000" stroke-width="0.8" stroke-linecap="round" stroke-linejoin="round"/><path d="M51.2 40 Q49.6 32.1 47.9 24.1" fill="none" stroke="#000" stroke-width="0.8" stroke-linecap="round" stroke-linejoin="round"/><path d="M48.0 40 Q46.6 35.5 45.2 31.1" fill="none" stroke="#000" stroke-width="0.8" stroke-linecap="round" stroke-linejoin="round"/><path d="M14.2 38 Q13.7 30.4 13.3 22.8" fill="none" stroke="#000" stroke-width="1.2" stroke-linecap="round" stroke-linejoin="round"/><ellipse cx="13.3" cy="25.8" rx="1.6" ry="4" fill="#000" transform="rotate(-2 13.3 25.8)"/><path d="M9.3 38 Q8.9 30.6 8.5 23.2" fill="none" stroke="#000" stroke-width="1.2" stroke-linecap="round" stroke-linejoin="round"/><ellipse cx="8.5" cy="26.2" rx="1.6" ry="4" fill="#000" transform="rotate(-2 8.5 26.2)"/><path d="M55.1 38 Q56.1 26.2 57.2 14.4" fill="none" stroke="#000" stroke-width="1.2" stroke-linecap="round" stroke-linejoin="round"/><ellipse cx="57.2" cy="17.4" rx="1.6" ry="4" fill="#000" transform="rotate(6 57.2 17.4)"/><path d="M13.3 38 Q12.4 27.8 11.5 17.6" fill="none" stroke="#000" stroke-width="1.2" stroke-linecap="round" stroke-linejoin="round"/><ellipse cx="11.5" cy="20.6" rx="1.6" ry="4" fill="#000" transform="rotate(-5 11.5 20.6)"/><path d="M10.4 38 Q9.2 30.4 8.1 22.7" fill="none" stroke="#000" stroke-width="1.2" stroke-linecap="round" stroke-linejoin="round"/><ellipse cx="8.1" cy="25.7" rx="1.6" ry="4" fill="#000" transform="rotate(-7 8.1 25.7)"/><path d="M55.6 38 Q56.9 26.0 58.1 14.1" fill="none" stroke="#000" stroke-width="1.2" stroke-linecap="round" stroke-linejoin="round"/><ellipse cx="58.1" cy="17.1" rx="1.6" ry="4" fill="#000" transform="rotate(7 58.1 17.1)"/><g opacity="0.6"><path d="M49 5 H57 V18 H45 V9 Z" fill="#e0e0e0" stroke="#cdcdcd" stroke-width="0.9"/><path d="M49 5 V9 H45" fill="none" stroke="#cdcdcd" stroke-width="0.9"/><path d="M50 17 L58.5 8.5" stroke="#c8c8c8" stroke-width="4.2" stroke-linecap="round"/><path d="M50 17 L58.5 8.5" stroke="#f2f2f2" stroke-width="2.8" stroke-linecap="round"/></g><rect x="4" y="46" width="9" height="9" fill="#a8a8a8"/><path d="M2 48 V44 H6 M11 44 H15 V48 M2 53 V57 H6 M11 57 H15 V53" stroke="#888" stroke-width="0.8" fill="none"/></svg>
<div class="t" style="left:786.0px;width:80px;text-align:center;top:532.0px;font-size:13px;line-height:18px;color:#dcdcdc;">Farm</div>
<div class="t" style="left:786.0px;width:80px;text-align:center;top:546.4px;font-size:13px;line-height:18px;color:#dcdcdc;">Field 1</div>
<svg class="b" style="left:289px;top:575px;overflow:hidden;" width="60" height="60" viewBox="0 0 60 60"><rect width="60" height="60" fill="#d9d9d9"/><path d="M0 60 V50 L2.7 48.4 L5.9 48.6 L8.1 49.6 L12.8 51.2 L17.1 48.9 L20.8 49.1 L23.3 48.4 L25.9 51.7 L30.4 51.2 L34.8 48.8 L37.7 50.5 L41.9 51.4 L46.6 48.3 L50.4 50.7 L53.9 48.7 L57.3 48.4 L60.0 51.5 L60 60 Z" fill="#000"/><path d="M20 12 H24 L26 54 H18 Z" fill="#000"/><path d="M21 8 H23 V12 H21 Z" fill="#000"/><path d="M37.4 54 Q38.6 42.6 39.7 31.2" fill="none" stroke="#000" stroke-width="0.6" stroke-linecap="round" stroke-linejoin="round"/><path d="M56.5 54 Q58.2 42.6 59.9 31.2" fill="none" stroke="#000" stroke-width="0.6" stroke-linecap="round" stroke-linejoin="round"/><path d="M1.7 54 Q3.5 45.3 5.3 36.7" fill="none" stroke="#000" stroke-width="0.6" stroke-linecap="round" stroke-linejoin="round"/><path d="M38.9 54 Q37.4 41.0 35.8 28.0" fill="none" stroke="#000" stroke-width="0.6" stroke-linecap="round" stroke-linejoin="round"/><path d="M28.1 54 Q28.3 47.5 28.5 41.1" fill="none" stroke="#000" stroke-width="0.6" stroke-linecap="round" stroke-linejoin="round"/><path d="M34.4 54 Q33.3 49.9 32.2 45.7" fill="none" stroke="#000" stroke-width="0.6" stroke-linecap="round" stroke-linejoin="round"/><path d="M16.8 54 Q17.8 40.8 18.9 27.7" fill="none" stroke="#000" stroke-width="0.6" stroke-linecap="round" stroke-linejoin="round"/><path d="M9.6 54 Q8.1 42.0 6.7 30.1" fill="none" stroke="#000" stroke-width="0.6" stroke-linecap="round" stroke-linejoin="round"/><path d="M37.0 54 Q35.1 48.7 33.1 43.5" fill="none" stroke="#000" stroke-width="0.6" stroke-linecap="round" stroke-linejoin="round"/><path d="M52.3 54 Q51.1 47.9 50.0 41.8" fill="none" stroke="#000" stroke-width="0.6" stroke-linecap="round" stroke-linejoin="round"/><path d="M58.9 54 Q58.1 41.3 57.3 28.6" fill="none" stroke="#000" stroke-width="0.6" stroke-linecap="round" stroke-linejoin="round"/><path d="M57.7 54 Q58.4 44.6 59.1 35.2" fill="none" stroke="#000" stroke-width="0.6" stroke-linecap="round" stroke-linejoin="round"/><path d="M12.3 54 Q13.0 40.6 13.8 27.2" fill="none" stroke="#000" stroke-width="0.6" stroke-linecap="round" stroke-linejoin="round"/><path d="M58.0 54 Q57.2 41.1 56.4 28.1" fill="none" stroke="#000" stroke-width="0.6" stroke-linecap="round" stroke-linejoin="round"/><path d="M21.7 54 Q20.3 48.3 18.8 42.7" fill="none" stroke="#000" stroke-width="0.6" stroke-linecap="round" stroke-linejoin="round"/><path d="M3.9 54 Q4.3 47.0 4.7 40.0" fill="none" stroke="#000" stroke-width="0.6" stroke-linecap="round" stroke-linejoin="round"/><path d="M0.2 54 Q-0.4 43.2 -1.1 32.4" fill="none" stroke="#000" stroke-width="0.6" stroke-linecap="round" stroke-linejoin="round"/><path d="M18.6 54 Q18.5 41.8 18.4 29.6" fill="none" stroke="#000" stroke-width="0.6" stroke-linecap="round" stroke-linejoin="round"/><path d="M18.9 54 Q19.8 45.2 20.6 36.4" fill="none" stroke="#000" stroke-width="0.6" stroke-linecap="round" stroke-linejoin="round"/><path d="M3.4 54 Q1.5 40.2 -0.4 26.5" fill="none" stroke="#000" stroke-width="0.6" stroke-linecap="round" stroke-linejoin="round"/><path d="M45.0 54 Q43.1 41.6 41.1 29.1" fill="none" stroke="#000" stroke-width="0.6" stroke-linecap="round" stroke-linejoin="round"/><path d="M47.3 54 Q47.6 46.3 47.9 38.7" fill="none" stroke="#000" stroke-width="0.6" stroke-linecap="round" stroke-linejoin="round"/><path d="M0.5 54 Q-0.7 49.5 -2.0 45.1" fill="none" stroke="#000" stroke-width="0.6" stroke-linecap="round" stroke-linejoin="round"/><path d="M57.3 54 Q58.3 48.0 59.4 42.1" fill="none" stroke="#000" stroke-width="0.6" stroke-linecap="round" stroke-linejoin="round"/><path d="M55.8 54 Q55.2 40.6 54.5 27.2" fill="none" stroke="#000" stroke-width="0.6" stroke-linecap="round" stroke-linejoin="round"/><path d="M21.3 54 Q22.4 44.8 23.5 35.5" fill="none" stroke="#000" stroke-width="0.6" stroke-linecap="round" stroke-linejoin="round"/><path d="M6.5 54 Q7.7 42.5 8.9 31.0" fill="none" stroke="#000" stroke-width="0.6" stroke-linecap="round" stroke-linejoin="round"/><path d="M51.6 54 Q53.4 49.6 55.1 45.3" fill="none" stroke="#000" stroke-width="0.6" stroke-linecap="round" stroke-linejoin="round"/><path d="M5.5 54 Q5.9 46.6 6.4 39.2" fill="none" stroke="#000" stroke-width="0.6" stroke-linecap="round" stroke-linejoin="round"/><path d="M55.1 54 Q56.8 46.6 58.5 39.2" fill="none" stroke="#000" stroke-width="0.6" stroke-linecap="round" stroke-linejoin="round"/><path d="M32.7 54 Q32.0 46.9 31.2 39.8" fill="none" stroke="#000" stroke-width="0.6" stroke-linecap="round" stroke-linejoin="round"/><path d="M10.6 54 Q9.2 49.2 7.8 44.4" fill="none" stroke="#000" stroke-width="0.6" stroke-linecap="round" stroke-linejoin="round"/><path d="M41.4 54 Q40.0 40.0 38.6 26.1" fill="none" stroke="#000" stroke-width="0.6" stroke-linecap="round" stroke-linejoin="round"/><path d="M2.9 54 Q3.0 40.1 3.2 26.3" fill="none" stroke="#000" stroke-width="0.6" stroke-linecap="round" stroke-linejoin="round"/><path d="M24.4 54 Q24.7 47.6 25.1 41.3" fill="none" stroke="#000" stroke-width="0.6" stroke-linecap="round" stroke-linejoin="round"/><path d="M49.6 54 Q49.3 45.4 49.0 36.9" fill="none" stroke="#000" stroke-width="0.6" stroke-linecap="round" stroke-linejoin="round"/><path d="M3.3 54 Q1.5 40.8 -0.4 27.7" fill="none" stroke="#000" stroke-width="0.6" stroke-linecap="round" stroke-linejoin="round"/><path d="M29.6 54 Q28.1 41.6 26.7 29.2" fill="none" stroke="#000" stroke-width="0.6" stroke-linecap="round" stroke-linejoin="round"/><path d="M43.9 54 Q44.4 40.5 44.9 27.0" fill="none" stroke="#000" stroke-width="0.6" stroke-linecap="round" stroke-linejoin="round"/><path d="M47.3 54 Q47.0 48.9 46.8 43.9" fill="none" stroke="#000" stroke-width="0.6" stroke-linecap="round" stroke-linejoin="round"/><g opacity="0.6"><path d="M49 5 H57 V18 H45 V9 Z" fill="#e0e0e0" stroke="#cdcdcd" stroke-width="0.9"/><path d="M49 5 V9 H45" fill="none" stroke="#cdcdcd" stroke-width="0.9"/><path d="M50 17 L58.5 8.5" stroke="#c8c8c8" stroke-width="4.2" stroke-linecap="round"/><path d="M50 17 L58.5 8.5" stroke="#f2f2f2" stroke-width="2.8" stroke-linecap="round"/></g><rect x="4" y="46" width="9" height="9" fill="#a8a8a8"/><path d="M2 48 V44 H6 M11 44 H15 V48 M2 53 V57 H6 M11 57 H15 V53" stroke="#888" stroke-width="0.8" fill="none"/></svg>
<div class="t" style="left:279.0px;width:80px;text-align:center;top:635.0px;font-size:13px;line-height:18px;color:#dcdcdc;">Lighthouse</div>
<div class="t" style="left:279.0px;width:80px;text-align:center;top:649.4px;font-size:13px;line-height:18px;color:#dcdcdc;">and Grass</div>
<svg class="b" style="left:361px;top:575px;overflow:hidden;" width="60" height="60" viewBox="0 0 60 60"><rect width="60" height="60" fill="#d9d9d9"/><path d="M0 60 V42 L4.4 45.2 L7.8 39.6 L9.8 43.6 L13.2 44.6 L16.4 44.7 L19.2 45.0 L23.4 41.1 L27.0 43.8 L29.6 42.5 L34.0 39.7 L38.4 43.9 L42.9 40.4 L45.2 45.0 L49.6 41.5 L51.9 39.0 L55.8 39.9 L60.0 42.9 L60 60 Z" fill="#000"/><path d="M13.6 58 Q12.1 34.6 10.6 11.3" fill="none" stroke="#000" stroke-width="1.4" stroke-linecap="round" stroke-linejoin="round"/><ellipse cx="10.6" cy="14.3" rx="1.6" ry="4" fill="#000" transform="rotate(-9 10.6 14.3)"/><path d="M42.3 58 Q41.3 49.6 40.3 41.1" fill="none" stroke="#000" stroke-width="1.4" stroke-linecap="round" stroke-linejoin="round"/><ellipse cx="40.3" cy="44.1" rx="1.6" ry="4" fill="#000" transform="rotate(-6 40.3 44.1)"/><path d="M59.9 58 Q60.5 47.4 61.1 36.9" fill="none" stroke="#000" stroke-width="1.4" stroke-linecap="round" stroke-linejoin="round"/><ellipse cx="61.1" cy="39.9" rx="1.6" ry="4" fill="#000" transform="rotate(3 61.1 39.9)"/><path d="M27.5 58 Q27.5 43.3 27.5 28.6" fill="none" stroke="#000" stroke-width="1.4" stroke-linecap="round" stroke-linejoin="round"/><ellipse cx="27.5" cy="31.6" rx="1.6" ry="4" fill="#000" transform="rotate(-0 27.5 31.6)"/><path d="M11.5 58 Q9.9 36.9 8.3 15.8" fill="none" stroke="#000" stroke-width="1.4" stroke-linecap="round" stroke-linejoin="round"/><ellipse cx="8.3" cy="18.8" rx="1.6" ry="4" fill="#000" transform="rotate(-10 8.3 18.8)"/><path d="M14.1 58 Q13.1 50.7 12.2 43.3" fill="none" stroke="#000" stroke-width="1.4" stroke-linecap="round" stroke-linejoin="round"/><ellipse cx="12.2" cy="46.3" rx="1.6" ry="4" fill="#000" transform="rotate(-6 12.2 46.3)"/><path d="M24.5 58 Q24.0 35.7 23.5 13.3" fill="none" stroke="#000" stroke-width="1.4" stroke-linecap="round" stroke-linejoin="round"/><ellipse cx="23.5" cy="16.3" rx="1.6" ry="4" fill="#000" transform="rotate(-3 23.5 16.3)"/><path d="M6.8 58 Q8.8 46.6 10.8 35.2" fill="none" stroke="#000" stroke-width="1.4" stroke-linecap="round" stroke-linejoin="round"/><ellipse cx="10.8" cy="38.2" rx="1.6" ry="4" fill="#000" transform="rotate(12 10.8 38.2)"/><path d="M3.8 58 Q3.3 40.5 2.8 22.9" fill="none" stroke="#000" stroke-width="1.4" stroke-linecap="round" stroke-linejoin="round"/><ellipse cx="2.8" cy="25.9" rx="1.6" ry="4" fill="#000" transform="rotate(-3 2.8 25.9)"/><path d="M39.7 58 Q40.4 45.2 41.2 32.5" fill="none" stroke="#000" stroke-width="1.4" stroke-linecap="round" stroke-linejoin="round"/><ellipse cx="41.2" cy="35.5" rx="1.6" ry="4" fill="#000" transform="rotate(5 41.2 35.5)"/><path d="M29.9 58 Q31.5 40.0 33.1 21.9" fill="none" stroke="#000" stroke-width="1.4" stroke-linecap="round" stroke-linejoin="round"/><ellipse cx="33.1" cy="24.9" rx="1.6" ry="4" fill="#000" transform="rotate(10 33.1 24.9)"/><path d="M34.9 58 Q33.1 48.6 31.4 39.2" fill="none" stroke="#000" stroke-width="1.4" stroke-linecap="round" stroke-linejoin="round"/><ellipse cx="31.4" cy="42.2" rx="1.6" ry="4" fill="#000" transform="rotate(-10 31.4 42.2)"/><path d="M56.8 58 Q55.5 42.7 54.3 27.4" fill="none" stroke="#000" stroke-width="1.4" stroke-linecap="round" stroke-linejoin="round"/><ellipse cx="54.3" cy="30.4" rx="1.6" ry="4" fill="#000" transform="rotate(-7 54.3 30.4)"/><path d="M56.8 58 Q57.7 41.2 58.6 24.3" fill="none" stroke="#000" stroke-width="1.4" stroke-linecap="round" stroke-linejoin="round"/><ellipse cx="58.6" cy="27.3" rx="1.6" ry="4" fill="#000" transform="rotate(5 58.6 27.3)"/><path d="M52.9 58 Q52.3 46.1 51.7 34.3" fill="none" stroke="#000" stroke-width="1.4" stroke-linecap="round" stroke-linejoin="round"/><ellipse cx="51.7" cy="37.3" rx="1.6" ry="4" fill="#000" transform="rotate(-3 51.7 37.3)"/><path d="M52.7 58 Q53.7 48.7 54.8 39.4" fill="none" stroke="#000" stroke-width="1.4" stroke-linecap="round" stroke-linejoin="round"/><ellipse cx="54.8" cy="42.4" rx="1.6" ry="4" fill="#000" transform="rotate(6 54.8 42.4)"/><path d="M5.9 58 Q6.7 39.3 7.5 20.5" fill="none" stroke="#000" stroke-width="1.4" stroke-linecap="round" stroke-linejoin="round"/><ellipse cx="7.5" cy="23.5" rx="1.6" ry="4" fill="#000" transform="rotate(5 7.5 23.5)"/><path d="M57.0 58 Q57.0 36.7 57.0 15.3" fill="none" stroke="#000" stroke-width="1.4" stroke-linecap="round" stroke-linejoin="round"/><ellipse cx="57.0" cy="18.3" rx="1.6" ry="4" fill="#000" transform="rotate(0 57.0 18.3)"/><path d="M11.9 58 Q12.0 48.4 12.1 38.9" fill="none" stroke="#000" stroke-width="1.4" stroke-linecap="round" stroke-linejoin="round"/><ellipse cx="12.1" cy="41.9" rx="1.6" ry="4" fill="#000" transform="rotate(1 12.1 41.9)"/><path d="M30.6 58 Q32.2 49.8 33.8 41.6" fill="none" stroke="#000" stroke-width="1.4" stroke-linecap="round" stroke-linejoin="round"/><ellipse cx="33.8" cy="44.6" rx="1.6" ry="4" fill="#000" transform="rotate(10 33.8 44.6)"/><path d="M30.4 58 Q29.3 39.1 28.2 20.2" fill="none" stroke="#000" stroke-width="1.4" stroke-linecap="round" stroke-linejoin="round"/><ellipse cx="28.2" cy="23.2" rx="1.6" ry="4" fill="#000" transform="rotate(-7 28.2 23.2)"/><path d="M14.6 58 Q14.0 50.8 13.4 43.6" fill="none" stroke="#000" stroke-width="1.4" stroke-linecap="round" stroke-linejoin="round"/><ellipse cx="13.4" cy="46.6" rx="1.6" ry="4" fill="#000" transform="rotate(-4 13.4 46.6)"/><path d="M16.0 58 Q15.5 43.8 15.0 29.6" fill="none" stroke="#000" stroke-width="1.4" stroke-linecap="round" stroke-linejoin="round"/><ellipse cx="15.0" cy="32.6" rx="1.6" ry="4" fill="#000" transform="rotate(-3 15.0 32.6)"/><path d="M50.1 58 Q48.8 35.8 47.5 13.7" fill="none" stroke="#000" stroke-width="1.4" stroke-linecap="round" stroke-linejoin="round"/><ellipse cx="47.5" cy="16.7" rx="1.6" ry="4" fill="#000" transform="rotate(-8 47.5 16.7)"/><path d="M23.8 58 Q24.4 48.2 25.1 38.3" fill="none" stroke="#000" stroke-width="1.4" stroke-linecap="round" stroke-linejoin="round"/><ellipse cx="25.1" cy="41.3" rx="1.6" ry="4" fill="#000" transform="rotate(4 25.1 41.3)"/><path d="M58.5 58 Q59.6 47.6 60.6 37.1" fill="none" stroke="#000" stroke-width="1.4" stroke-linecap="round" stroke-linejoin="round"/><ellipse cx="60.6" cy="40.1" rx="1.6" ry="4" fill="#000" transform="rotate(6 60.6 40.1)"/><path d="M18.0 58 Q19.1 50.8 20.1 43.6" fill="none" stroke="#000" stroke-width="1.4" stroke-linecap="round" stroke-linejoin="round"/><ellipse cx="20.1" cy="46.6" rx="1.6" ry="4" fill="#000" transform="rotate(6 20.1 46.6)"/><path d="M20.5 58 Q20.3 48.1 20.0 38.2" fill="none" stroke="#000" stroke-width="1.4" stroke-linecap="round" stroke-linejoin="round"/><ellipse cx="20.0" cy="41.2" rx="1.6" ry="4" fill="#000" transform="rotate(-2 20.0 41.2)"/><path d="M13.9 58 Q13.7 44.0 13.5 30.1" fill="none" stroke="#000" stroke-width="1.4" stroke-linecap="round" stroke-linejoin="round"/><ellipse cx="13.5" cy="33.1" rx="1.6" ry="4" fill="#000" transform="rotate(-1 13.5 33.1)"/><path d="M25.1 58 Q24.2 41.0 23.4 24.0" fill="none" stroke="#000" stroke-width="1.4" stroke-linecap="round" stroke-linejoin="round"/><ellipse cx="23.4" cy="27.0" rx="1.6" ry="4" fill="#000" transform="rotate(-5 23.4 27.0)"/><g opacity="0.6"><path d="M49 5 H57 V18 H45 V9 Z" fill="#e0e0e0" stroke="#cdcdcd" stroke-width="0.9"/><path d="M49 5 V9 H45" fill="none" stroke="#cdcdcd" stroke-width="0.9"/><path d="M50 17 L58.5 8.5" stroke="#c8c8c8" stroke-width="4.2" stroke-linecap="round"/><path d="M50 17 L58.5 8.5" stroke="#f2f2f2" stroke-width="2.8" stroke-linecap="round"/></g><g opacity="0.55"><rect x="4" y="46" width="9" height="9" fill="#ececec"/><path d="M2 48 V44 H6 M11 44 H15 V48 M2 53 V57 H6 M11 57 H15 V53" stroke="#c8c8c8" stroke-width="0.8" fill="none"/></g></svg>
<div class="t" style="left:351.0px;width:80px;text-align:center;top:635.0px;font-size:13px;line-height:18px;color:#dcdcdc;">Tall</div>
<div class="t" style="left:351.0px;width:80px;text-align:center;top:649.4px;font-size:13px;line-height:18px;color:#dcdcdc;">Grass 1</div>
<svg class="b" style="left:434px;top:575px;overflow:hidden;" width="60" height="60" viewBox="0 0 60 60"><rect width="60" height="60" fill="#d9d9d9"/><path d="M0 60 V48 L3.9 49.0 L8.3 49.8 L12.5 49.7 L14.6 47.9 L19.4 48.6 L24.1 46.5 L27.5 47.0 L31.1 48.3 L33.2 46.9 L36.0 49.7 L40.3 46.6 L44.7 46.6 L48.6 46.5 L50.6 49.5 L53.2 46.9 L58.1 49.5 L60.0 49.8 L60 60 Z" fill="#000"/><path d="M27.8 52 Q26.3 42.4 24.9 32.8" fill="none" stroke="#000" stroke-width="0.55" stroke-linecap="round" stroke-linejoin="round"/><path d="M52.0 52 Q52.0 47.9 52.0 43.8" fill="none" stroke="#000" stroke-width="0.55" stroke-linecap="round" stroke-linejoin="round"/><path d="M53.9 52 Q54.1 46.8 54.3 41.6" fill="none" stroke="#000" stroke-width="0.55" stroke-linecap="round" stroke-linejoin="round"/><path d="M37.0 52 Q36.5 47.4 36.0 42.8" fill="none" stroke="#000" stroke-width="0.55" stroke-linecap="round" stroke-linejoin="round"/><path d="M42.2 52 Q43.1 41.2 44.0 30.4" fill="none" stroke="#000" stroke-width="0.55" stroke-linecap="round" stroke-linejoin="round"/><path d="M9.4 52 Q7.9 44.4 6.3 36.9" fill="none" stroke="#000" stroke-width="0.55" stroke-linecap="round" stroke-linejoin="round"/><path d="M30.4 52 Q30.7 34.1 31.1 16.3" fill="none" stroke="#000" stroke-width="0.55" stroke-linecap="round" stroke-linejoin="round"/><path d="M46.5 52 Q47.4 42.2 48.4 32.5" fill="none" stroke="#000" stroke-width="0.55" stroke-linecap="round" stroke-linejoin="round"/><path d="M6.1 52 Q6.8 43.6 7.5 35.3" fill="none" stroke="#000" stroke-width="0.55" stroke-linecap="round" stroke-linejoin="round"/><path d="M43.5 52 Q41.9 41.7 40.2 31.3" fill="none" stroke="#000" stroke-width="0.55" stroke-linecap="round" stroke-linejoin="round"/><path d="M16.0 52 Q15.1 44.9 14.3 37.7" fill="none" stroke="#000" stroke-width="0.55" stroke-linecap="round" stroke-linejoin="round"/><path d="M48.6 52 Q50.1 45.0 51.7 38.0" fill="none" stroke="#000" stroke-width="0.55" stroke-linecap="round" stroke-linejoin="round"/><path d="M52.8 52 Q52.3 47.2 51.8 42.4" fill="none" stroke="#000" stroke-width="0.55" stroke-linecap="round" stroke-linejoin="round"/><path d="M29.5 52 Q29.2 47.6 28.9 43.3" fill="none" stroke="#000" stroke-width="0.55" stroke-linecap="round" stroke-linejoin="round"/><path d="M54.4 52 Q54.8 46.3 55.2 40.6" fill="none" stroke="#000" stroke-width="0.55" stroke-linecap="round" stroke-linejoin="round"/><path d="M7.3 52 Q8.9 39.3 10.4 26.6" fill="none" stroke="#000" stroke-width="0.55" stroke-linecap="round" stroke-linejoin="round"/><path d="M12.2 52 Q10.5 47.9 8.9 43.8" fill="none" stroke="#000" stroke-width="0.55" stroke-linecap="round" stroke-linejoin="round"/><path d="M32.4 52 Q30.7 47.7 29.1 43.5" fill="none" stroke="#000" stroke-width="0.55" stroke-linecap="round" stroke-linejoin="round"/><path d="M29.8 52 Q29.5 34.2 29.2 16.4" fill="none" stroke="#000" stroke-width="0.55" stroke-linecap="round" stroke-linejoin="round"/><path d="M23.9 52 Q22.3 38.4 20.6 24.8" fill="none" stroke="#000" stroke-width="0.55" stroke-linecap="round" stroke-linejoin="round"/><path d="M34.8 52 Q35.2 45.4 35.7 38.8" fill="none" stroke="#000" stroke-width="0.55" stroke-linecap="round" stroke-linejoin="round"/><path d="M57.5 52 Q57.7 47.2 57.9 42.4" fill="none" stroke="#000" stroke-width="0.55" stroke-linecap="round" stroke-linejoin="round"/><path d="M36.4 52 Q35.5 45.8 34.5 39.5" fill="none" stroke="#000" stroke-width="0.55" stroke-linecap="round" stroke-linejoin="round"/><path d="M59.7 52 Q58.2 33.0 56.7 14.1" fill="none" stroke="#000" stroke-width="0.55" stroke-linecap="round" stroke-linejoin="round"/><path d="M42.3 52 Q41.3 33.7 40.2 15.5" fill="none" stroke="#000" stroke-width="0.55" stroke-linecap="round" stroke-linejoin="round"/><path d="M36.7 52 Q36.1 47.4 35.6 42.7" fill="none" stroke="#000" stroke-width="0.55" stroke-linecap="round" stroke-linejoin="round"/><path d="M40.4 52 Q41.5 39.1 42.6 26.3" fill="none" stroke="#000" stroke-width="0.55" stroke-linecap="round" stroke-linejoin="round"/><path d="M5.2 52 Q6.7 42.8 8.1 33.6" fill="none" stroke="#000" stroke-width="0.55" stroke-linecap="round" stroke-linejoin="round"/><path d="M35.0 52 Q34.7 41.2 34.3 30.5" fill="none" stroke="#000" stroke-width="0.55" stroke-linecap="round" stroke-linejoin="round"/><path d="M59.2 52 Q57.2 39.4 55.3 26.8" fill="none" stroke="#000" stroke-width="0.55" stroke-linecap="round" stroke-linejoin="round"/><path d="M48.0 52 Q47.7 43.1 47.4 34.1" fill="none" stroke="#000" stroke-width="0.55" stroke-linecap="round" stroke-linejoin="round"/><path d="M12.8 52 Q12.1 41.3 11.4 30.7" fill="none" stroke="#000" stroke-width="0.55" stroke-linecap="round" stroke-linejoin="round"/><path d="M5.3 52 Q3.7 38.6 2.2 25.1" fill="none" stroke="#000" stroke-width="0.55" stroke-linecap="round" stroke-linejoin="round"/><path d="M47.0 52 Q48.2 47.6 49.3 43.2" fill="none" stroke="#000" stroke-width="0.55" stroke-linecap="round" stroke-linejoin="round"/><path d="M48.5 52 Q49.3 40.5 50.1 29.1" fill="none" stroke="#000" stroke-width="0.55" stroke-linecap="round" stroke-linejoin="round"/><path d="M14.9 52 Q14.6 36.9 14.3 21.9" fill="none" stroke="#000" stroke-width="0.55" stroke-linecap="round" stroke-linejoin="round"/><path d="M13.9 52 Q13.5 33.5 13.1 15.1" fill="none" stroke="#000" stroke-width="0.55" stroke-linecap="round" stroke-linejoin="round"/><path d="M22.4 52 Q21.9 35.1 21.3 18.2" fill="none" stroke="#000" stroke-width="0.55" stroke-linecap="round" stroke-linejoin="round"/><path d="M40.1 52 Q41.4 45.4 42.8 38.9" fill="none" stroke="#000" stroke-width="0.55" stroke-linecap="round" stroke-linejoin="round"/><path d="M15.5 52 Q17.4 47.2 19.3 42.5" fill="none" stroke="#000" stroke-width="0.55" stroke-linecap="round" stroke-linejoin="round"/><path d="M10.4 52 Q12.3 33.8 14.3 15.6" fill="none" stroke="#000" stroke-width="0.55" stroke-linecap="round" stroke-linejoin="round"/><path d="M36.4 52 Q34.6 47.8 32.9 43.6" fill="none" stroke="#000" stroke-width="0.55" stroke-linecap="round" stroke-linejoin="round"/><path d="M12.5 52 Q13.0 42.2 13.4 32.3" fill="none" stroke="#000" stroke-width="0.55" stroke-linecap="round" stroke-linejoin="round"/><path d="M58.0 52 Q56.5 42.7 55.1 33.4" fill="none" stroke="#000" stroke-width="0.55" stroke-linecap="round" stroke-linejoin="round"/><path d="M33.7 52 Q32.1 45.9 30.4 39.9" fill="none" stroke="#000" stroke-width="0.55" stroke-linecap="round" stroke-linejoin="round"/><path d="M33.4 52 Q31.6 37.6 29.9 23.1" fill="none" stroke="#000" stroke-width="0.55" stroke-linecap="round" stroke-linejoin="round"/><path d="M27.1 52 Q28.1 37.4 29.2 22.9" fill="none" stroke="#000" stroke-width="0.55" stroke-linecap="round" stroke-linejoin="round"/><path d="M23.0 52 Q21.7 34.7 20.3 17.4" fill="none" stroke="#000" stroke-width="0.55" stroke-linecap="round" stroke-linejoin="round"/><path d="M42.9 52 Q44.4 36.4 46.0 20.8" fill="none" stroke="#000" stroke-width="0.55" stroke-linecap="round" stroke-linejoin="round"/><path d="M29.7 52 Q27.9 46.5 26.1 41.0" fill="none" stroke="#000" stroke-width="0.55" stroke-linecap="round" stroke-linejoin="round"/><path d="M31.7 52 Q32.2 45.4 32.8 38.8" fill="none" stroke="#000" stroke-width="0.55" stroke-linecap="round" stroke-linejoin="round"/><path d="M5.1 52 Q3.9 36.3 2.8 20.6" fill="none" stroke="#000" stroke-width="0.55" stroke-linecap="round" stroke-linejoin="round"/><path d="M0.8 52 Q0.6 45.4 0.4 38.7" fill="none" stroke="#000" stroke-width="0.55" stroke-linecap="round" stroke-linejoin="round"/><path d="M33.6 52 Q32.2 42.2 30.9 32.4" fill="none" stroke="#000" stroke-width="0.55" stroke-linecap="round" stroke-linejoin="round"/><path d="M28.9 52 Q29.1 33.8 29.2 15.6" fill="none" stroke="#000" stroke-width="0.55" stroke-linecap="round" stroke-linejoin="round"/><path d="M56.5 52 Q58.4 47.6 60.4 43.1" fill="none" stroke="#000" stroke-width="0.55" stroke-linecap="round" stroke-linejoin="round"/><path d="M53.3 52 Q53.4 39.8 53.5 27.7" fill="none" stroke="#000" stroke-width="0.55" stroke-linecap="round" stroke-linejoin="round"/><path d="M32.2 52 Q30.5 34.4 28.8 16.7" fill="none" stroke="#000" stroke-width="0.55" stroke-linecap="round" stroke-linejoin="round"/><path d="M38.6 52 Q37.8 39.9 37.0 27.7" fill="none" stroke="#000" stroke-width="0.55" stroke-linecap="round" stroke-linejoin="round"/><path d="M43.5 52 Q41.9 37.2 40.3 22.4" fill="none" stroke="#000" stroke-width="0.55" stroke-linecap="round" stroke-linejoin="round"/><path d="M42.0 52 Q41.9 41.2 41.9 30.4" fill="none" stroke="#000" stroke-width="0.55" stroke-linecap="round" stroke-linejoin="round"/><path d="M38.2 52 Q38.6 47.2 39.0 42.4" fill="none" stroke="#000" stroke-width="0.55" stroke-linecap="round" stroke-linejoin="round"/><path d="M22.4 52 Q21.3 34.8 20.2 17.6" fill="none" stroke="#000" stroke-width="0.55" stroke-linecap="round" stroke-linejoin="round"/><path d="M49.4 52 Q49.9 37.1 50.4 22.1" fill="none" stroke="#000" stroke-width="0.55" stroke-linecap="round" stroke-linejoin="round"/><path d="M52.6 52 Q52.9 47.5 53.3 42.9" fill="none" stroke="#000" stroke-width="0.55" stroke-linecap="round" stroke-linejoin="round"/><path d="M36.8 52 Q36.4 37.8 36.0 23.7" fill="none" stroke="#000" stroke-width="0.55" stroke-linecap="round" stroke-linejoin="round"/><path d="M4.1 52 Q4.6 45.2 5.0 38.3" fill="none" stroke="#000" stroke-width="0.55" stroke-linecap="round" stroke-linejoin="round"/><path d="M10.9 52 Q10.3 47.0 9.7 42.1" fill="none" stroke="#000" stroke-width="0.55" stroke-linecap="round" stroke-linejoin="round"/><path d="M28.2 52 Q26.3 40.0 24.4 27.9" fill="none" stroke="#000" stroke-width="0.55" stroke-linecap="round" stroke-linejoin="round"/><path d="M46.5 52 Q47.7 43.0 48.8 34.0" fill="none" stroke="#000" stroke-width="0.55" stroke-linecap="round" stroke-linejoin="round"/><path d="M0.5 52 Q0.9 33.7 1.2 15.4" fill="none" stroke="#000" stroke-width="0.55" stroke-linecap="round" stroke-linejoin="round"/><path d="M58.6 52 Q59.9 33.2 61.2 14.4" fill="none" stroke="#000" stroke-width="0.55" stroke-linecap="round" stroke-linejoin="round"/><path d="M6.4 52 Q5.3 42.8 4.2 33.5" fill="none" stroke="#000" stroke-width="0.55" stroke-linecap="round" stroke-linejoin="round"/><path d="M46.8 52 Q45.7 45.1 44.6 38.2" fill="none" stroke="#000" stroke-width="0.55" stroke-linecap="round" stroke-linejoin="round"/><path d="M6.6 52 Q8.4 46.2 10.1 40.4" fill="none" stroke="#000" stroke-width="0.55" stroke-linecap="round" stroke-linejoin="round"/><path d="M58.6 52 Q59.5 42.4 60.5 32.8" fill="none" stroke="#000" stroke-width="0.55" stroke-linecap="round" stroke-linejoin="round"/><path d="M28.1 52 Q27.5 40.2 27.0 28.3" fill="none" stroke="#000" stroke-width="0.55" stroke-linecap="round" stroke-linejoin="round"/><path d="M38.1 52 Q37.1 44.5 36.1 36.9" fill="none" stroke="#000" stroke-width="0.55" stroke-linecap="round" stroke-linejoin="round"/><path d="M31.1 52 Q30.8 45.0 30.6 38.1" fill="none" stroke="#000" stroke-width="0.55" stroke-linecap="round" stroke-linejoin="round"/><path d="M56.6 52 Q55.0 47.7 53.5 43.3" fill="none" stroke="#000" stroke-width="0.55" stroke-linecap="round" stroke-linejoin="round"/><path d="M48.0 52 Q47.0 47.1 46.0 42.3" fill="none" stroke="#000" stroke-width="0.55" stroke-linecap="round" stroke-linejoin="round"/><path d="M51.1 52 Q50.0 38.9 48.9 25.8" fill="none" stroke="#000" stroke-width="0.55" stroke-linecap="round" stroke-linejoin="round"/><path d="M3.5 52 Q2.7 43.9 1.9 35.7" fill="none" stroke="#000" stroke-width="0.55" stroke-linecap="round" stroke-linejoin="round"/><path d="M48.0 52 Q49.2 33.4 50.3 14.7" fill="none" stroke="#000" stroke-width="0.55" stroke-linecap="round" stroke-linejoin="round"/><path d="M54.1 52 Q55.6 34.0 57.1 16.1" fill="none" stroke="#000" stroke-width="0.55" stroke-linecap="round" stroke-linejoin="round"/><path d="M55.2 52 Q53.6 33.5 52.0 15.0" fill="none" stroke="#000" stroke-width="0.55" stroke-linecap="round" stroke-linejoin="round"/><path d="M19.1 52 Q19.5 44.3 19.9 36.6" fill="none" stroke="#000" stroke-width="0.55" stroke-linecap="round" stroke-linejoin="round"/><path d="M29.5 52 Q30.9 42.8 32.2 33.6" fill="none" stroke="#000" stroke-width="0.55" stroke-linecap="round" stroke-linejoin="round"/><path d="M23.9 52 Q23.1 44.9 22.2 37.7" fill="none" stroke="#000" stroke-width="0.55" stroke-linecap="round" stroke-linejoin="round"/><path d="M27.7 52 Q28.0 38.8 28.3 25.7" fill="none" stroke="#000" stroke-width="0.55" stroke-linecap="round" stroke-linejoin="round"/><path d="M26.4 52 Q26.0 45.2 25.6 38.4" fill="none" stroke="#000" stroke-width="0.55" stroke-linecap="round" stroke-linejoin="round"/><path d="M19.5 52 Q19.7 45.4 19.9 38.9" fill="none" stroke="#000" stroke-width="0.55" stroke-linecap="round" stroke-linejoin="round"/><path d="M11.3 52 Q11.9 37.3 12.6 22.7" fill="none" stroke="#000" stroke-width="0.55" stroke-linecap="round" stroke-linejoin="round"/><path d="M8.3 52 Q7.6 38.6 7.0 25.2" fill="none" stroke="#000" stroke-width="0.55" stroke-linecap="round" stroke-linejoin="round"/><path d="M26.8 52 Q27.9 38.9 28.9 25.8" fill="none" stroke="#000" stroke-width="0.55" stroke-linecap="round" stroke-linejoin="round"/><path d="M53.0 52 Q51.9 37.0 50.7 22.0" fill="none" stroke="#000" stroke-width="0.55" stroke-linecap="round" stroke-linejoin="round"/><path d="M32.5 52 Q30.6 43.0 28.7 33.9" fill="none" stroke="#000" stroke-width="0.55" stroke-linecap="round" stroke-linejoin="round"/><path d="M33.1 52 Q34.6 40.9 36.1 29.9" fill="none" stroke="#000" stroke-width="0.55" stroke-linecap="round" stroke-linejoin="round"/><path d="M19.4 52 Q19.5 35.5 19.5 19.0" fill="none" stroke="#000" stroke-width="0.55" stroke-linecap="round" stroke-linejoin="round"/><path d="M5.9 52 Q5.1 37.2 4.2 22.5" fill="none" stroke="#000" stroke-width="0.55" stroke-linecap="round" stroke-linejoin="round"/><path d="M32.0 52 Q30.1 46.9 28.1 41.9" fill="none" stroke="#000" stroke-width="0.55" stroke-linecap="round" stroke-linejoin="round"/><path d="M55.3 52 Q53.9 47.4 52.5 42.7" fill="none" stroke="#000" stroke-width="0.55" stroke-linecap="round" stroke-linejoin="round"/><path d="M9.8 52 Q11.1 46.6 12.4 41.1" fill="none" stroke="#000" stroke-width="0.55" stroke-linecap="round" stroke-linejoin="round"/><path d="M59.7 52 Q59.3 38.3 58.9 24.5" fill="none" stroke="#000" stroke-width="0.55" stroke-linecap="round" stroke-linejoin="round"/><path d="M53.3 52 Q51.8 40.4 50.4 28.8" fill="none" stroke="#000" stroke-width="0.55" stroke-linecap="round" stroke-linejoin="round"/><path d="M41.4 52 Q40.5 42.6 39.6 33.2" fill="none" stroke="#000" stroke-width="0.55" stroke-linecap="round" stroke-linejoin="round"/><path d="M19.2 52 Q18.0 42.2 16.7 32.4" fill="none" stroke="#000" stroke-width="0.55" stroke-linecap="round" stroke-linejoin="round"/><path d="M36.8 52 Q37.0 35.0 37.3 17.9" fill="none" stroke="#000" stroke-width="0.55" stroke-linecap="round" stroke-linejoin="round"/><path d="M0.6 52 Q-1.4 37.7 -3.3 23.5" fill="none" stroke="#000" stroke-width="0.55" stroke-linecap="round" stroke-linejoin="round"/><path d="M28.7 52 Q29.4 35.0 30.1 18.0" fill="none" stroke="#000" stroke-width="0.55" stroke-linecap="round" stroke-linejoin="round"/><g opacity="0.6"><path d="M49 5 H57 V18 H45 V9 Z" fill="#e0e0e0" stroke="#cdcdcd" stroke-width="0.9"/><path d="M49 5 V9 H45" fill="none" stroke="#cdcdcd" stroke-width="0.9"/><path d="M50 17 L58.5 8.5" stroke="#c8c8c8" stroke-width="4.2" stroke-linecap="round"/><path d="M50 17 L58.5 8.5" stroke="#f2f2f2" stroke-width="2.8" stroke-linecap="round"/></g><rect x="4" y="46" width="9" height="9" fill="#a8a8a8"/><path d="M2 48 V44 H6 M11 44 H15 V48 M2 53 V57 H6 M11 57 H15 V53" stroke="#888" stroke-width="0.8" fill="none"/></svg>
<div class="t" style="left:424.0px;width:80px;text-align:center;top:635.0px;font-size:13px;line-height:18px;color:#dcdcdc;">Tall</div>
<div class="t" style="left:424.0px;width:80px;text-align:center;top:649.4px;font-size:13px;line-height:18px;color:#dcdcdc;">Grass 2</div>
<svg class="b" style="left:506px;top:575px;overflow:hidden;" width="60" height="60" viewBox="0 0 60 60"><rect width="60" height="60" fill="#d9d9d9"/><path d="M34.3 60 Q34.6 45.4 34.9 30.8" fill="none" stroke="#000" stroke-width="1.0" stroke-linecap="round" stroke-linejoin="round"/><ellipse cx="34.9" cy="33.8" rx="1.6" ry="4" fill="#000" transform="rotate(2 34.9 33.8)"/><path d="M12.4 60 Q13.7 40.4 15.0 20.9" fill="none" stroke="#000" stroke-width="1.0" stroke-linecap="round" stroke-linejoin="round"/><ellipse cx="15.0" cy="23.9" rx="1.6" ry="4" fill="#000" transform="rotate(8 15.0 23.9)"/><path d="M39.2 60 Q39.3 48.9 39.4 37.8" fill="none" stroke="#000" stroke-width="1.0" stroke-linecap="round" stroke-linejoin="round"/><ellipse cx="39.4" cy="40.8" rx="1.6" ry="4" fill="#000" transform="rotate(0 39.4 40.8)"/><path d="M19.7 60 Q21.5 47.8 23.3 35.5" fill="none" stroke="#000" stroke-width="1.0" stroke-linecap="round" stroke-linejoin="round"/><ellipse cx="23.3" cy="38.5" rx="1.6" ry="4" fill="#000" transform="rotate(11 23.3 38.5)"/><path d="M59.8 60 Q61.2 50.4 62.7 40.8" fill="none" stroke="#000" stroke-width="1.0" stroke-linecap="round" stroke-linejoin="round"/><ellipse cx="62.7" cy="43.8" rx="1.6" ry="4" fill="#000" transform="rotate(9 62.7 43.8)"/><path d="M36.2 60 Q35.3 46.0 34.5 32.1" fill="none" stroke="#000" stroke-width="1.0" stroke-linecap="round" stroke-linejoin="round"/><ellipse cx="34.5" cy="35.1" rx="1.6" ry="4" fill="#000" transform="rotate(-5 34.5 35.1)"/><path d="M40.5 60 Q41.2 45.1 42.0 30.1" fill="none" stroke="#000" stroke-width="1.0" stroke-linecap="round" stroke-linejoin="round"/><ellipse cx="42.0" cy="33.1" rx="1.6" ry="4" fill="#000" transform="rotate(4 42.0 33.1)"/><path d="M39.7 60 Q40.8 49.3 41.9 38.5" fill="none" stroke="#000" stroke-width="1.0" stroke-linecap="round" stroke-linejoin="round"/><ellipse cx="41.9" cy="41.5" rx="1.6" ry="4" fill="#000" transform="rotate(6 41.9 41.5)"/><path d="M58.9 60 Q59.4 38.4 59.9 16.8" fill="none" stroke="#000" stroke-width="1.0" stroke-linecap="round" stroke-linejoin="round"/><ellipse cx="59.9" cy="19.8" rx="1.6" ry="4" fill="#000" transform="rotate(3 59.9 19.8)"/><path d="M2.7 60 Q1.2 50.9 -0.3 41.9" fill="none" stroke="#000" stroke-width="1.0" stroke-linecap="round" stroke-linejoin="round"/><ellipse cx="-0.3" cy="44.9" rx="1.6" ry="4" fill="#000" transform="rotate(-9 -0.3 44.9)"/><path d="M56.5 60 Q55.9 47.1 55.4 34.1" fill="none" stroke="#000" stroke-width="1.0" stroke-linecap="round" stroke-linejoin="round"/><ellipse cx="55.4" cy="37.1" rx="1.6" ry="4" fill="#000" transform="rotate(-3 55.4 37.1)"/><path d="M53.9 60 Q54.1 46.9 54.3 33.8" fill="none" stroke="#000" stroke-width="1.0" stroke-linecap="round" stroke-linejoin="round"/><ellipse cx="54.3" cy="36.8" rx="1.6" ry="4" fill="#000" transform="rotate(1 54.3 36.8)"/><path d="M26.2 60 Q26.5 50.2 26.8 40.3" fill="none" stroke="#000" stroke-width="1.0" stroke-linecap="round" stroke-linejoin="round"/><ellipse cx="26.8" cy="43.3" rx="1.6" ry="4" fill="#000" transform="rotate(2 26.8 43.3)"/><path d="M50.6 60 Q49.5 49.0 48.4 37.9" fill="none" stroke="#000" stroke-width="1.0" stroke-linecap="round" stroke-linejoin="round"/><ellipse cx="48.4" cy="40.9" rx="1.6" ry="4" fill="#000" transform="rotate(-7 48.4 40.9)"/><path d="M24.8 60 Q24.8 50.5 24.7 41.0" fill="none" stroke="#000" stroke-width="1.0" stroke-linecap="round" stroke-linejoin="round"/><ellipse cx="24.7" cy="44.0" rx="1.6" ry="4" fill="#000" transform="rotate(-0 24.7 44.0)"/><path d="M49.1 60 Q49.2 42.4 49.3 24.9" fill="none" stroke="#000" stroke-width="1.0" stroke-linecap="round" stroke-linejoin="round"/><ellipse cx="49.3" cy="27.9" rx="1.6" ry="4" fill="#000" transform="rotate(1 49.3 27.9)"/><path d="M51.3 60 Q51.6 49.1 51.8 38.1" fill="none" stroke="#000" stroke-width="1.0" stroke-linecap="round" stroke-linejoin="round"/><ellipse cx="51.8" cy="41.1" rx="1.6" ry="4" fill="#000" transform="rotate(2 51.8 41.1)"/><path d="M22.5 60 Q20.9 43.2 19.4 26.4" fill="none" stroke="#000" stroke-width="1.0" stroke-linecap="round" stroke-linejoin="round"/><ellipse cx="19.4" cy="29.4" rx="1.6" ry="4" fill="#000" transform="rotate(-9 19.4 29.4)"/><path d="M46.5 60 Q45.2 49.7 43.9 39.5" fill="none" stroke="#000" stroke-width="1.0" stroke-linecap="round" stroke-linejoin="round"/><ellipse cx="43.9" cy="42.5" rx="1.6" ry="4" fill="#000" transform="rotate(-8 43.9 42.5)"/><path d="M48.4 60 Q48.2 38.7 47.9 17.4" fill="none" stroke="#000" stroke-width="1.0" stroke-linecap="round" stroke-linejoin="round"/><ellipse cx="47.9" cy="20.4" rx="1.6" ry="4" fill="#000" transform="rotate(-2 47.9 20.4)"/><path d="M24.8 60 Q23.9 47.8 23.0 35.6" fill="none" stroke="#000" stroke-width="1.0" stroke-linecap="round" stroke-linejoin="round"/><ellipse cx="23.0" cy="38.6" rx="1.6" ry="4" fill="#000" transform="rotate(-5 23.0 38.6)"/><path d="M37.0 60 Q35.5 48.7 34.0 37.4" fill="none" stroke="#000" stroke-width="1.0" stroke-linecap="round" stroke-linejoin="round"/><ellipse cx="34.0" cy="40.4" rx="1.6" ry="4" fill="#000" transform="rotate(-9 34.0 40.4)"/><path d="M27.3 60 Q27.9 48.9 28.5 37.7" fill="none" stroke="#000" stroke-width="1.0" stroke-linecap="round" stroke-linejoin="round"/><ellipse cx="28.5" cy="40.7" rx="1.6" ry="4" fill="#000" transform="rotate(4 28.5 40.7)"/><path d="M49.3 60 Q49.2 40.9 49.1 21.8" fill="none" stroke="#000" stroke-width="1.0" stroke-linecap="round" stroke-linejoin="round"/><ellipse cx="49.1" cy="24.8" rx="1.6" ry="4" fill="#000" transform="rotate(-0 49.1 24.8)"/><path d="M20.9 60 Q18.9 45.3 16.9 30.7" fill="none" stroke="#000" stroke-width="1.0" stroke-linecap="round" stroke-linejoin="round"/><ellipse cx="16.9" cy="33.7" rx="1.6" ry="4" fill="#000" transform="rotate(-12 16.9 33.7)"/><path d="M42.8 60 Q42.0 46.7 41.3 33.4" fill="none" stroke="#000" stroke-width="1.0" stroke-linecap="round" stroke-linejoin="round"/><ellipse cx="41.3" cy="36.4" rx="1.6" ry="4" fill="#000" transform="rotate(-4 41.3 36.4)"/><path d="M0 60 V54 L4.9 55.8 L7.0 52.3 L11.5 54.9 L15.6 53.2 L19.4 54.4 L23.1 52.6 L26.4 53.6 L30.6 56.0 L35.4 54.2 L38.8 53.1 L40.9 52.1 L44.3 53.3 L47.4 55.6 L51.0 54.2 L53.7 52.1 L56.7 52.5 L60.0 56.0 L60 60 Z" fill="#000"/><g opacity="0.6"><path d="M49 5 H57 V18 H45 V9 Z" fill="#e0e0e0" stroke="#cdcdcd" stroke-width="0.9"/><path d="M49 5 V9 H45" fill="none" stroke="#cdcdcd" stroke-width="0.9"/><path d="M50 17 L58.5 8.5" stroke="#c8c8c8" stroke-width="4.2" stroke-linecap="round"/><path d="M50 17 L58.5 8.5" stroke="#f2f2f2" stroke-width="2.8" stroke-linecap="round"/></g><g opacity="0.55"><rect x="4" y="46" width="9" height="9" fill="#ececec"/><path d="M2 48 V44 H6 M11 44 H15 V48 M2 53 V57 H6 M11 57 H15 V53" stroke="#c8c8c8" stroke-width="0.8" fill="none"/></g></svg>
<div class="t" style="left:496.0px;width:80px;text-align:center;top:635.0px;font-size:13px;line-height:18px;color:#dcdcdc;">Tall</div>
<div class="t" style="left:496.0px;width:80px;text-align:center;top:649.4px;font-size:13px;line-height:18px;color:#dcdcdc;">Grass 3</div>
<svg class="b" style="left:579px;top:575px;overflow:hidden;" width="60" height="60" viewBox="0 0 60 60"><rect width="60" height="60" fill="#d9d9d9"/><g opacity="0.8"><path d="M15.87 38.75a0.53 0.53 0 1 0 1.06 0a0.53 0.53 0 1 0 -1.06 0M18.07 18.19a0.84 0.84 0 1 0 1.68 0a0.84 0.84 0 1 0 -1.68 0M22.72 20.94a1.17 1.17 0 1 0 2.35 0a1.17 1.17 0 1 0 -2.35 0M13.89 12.76a0.9 0.9 0 1 0 1.81 0a0.9 0.9 0 1 0 -1.81 0M7.6 20.44a1.2 1.2 0 1 0 2.39 0a1.2 1.2 0 1 0 -2.39 0M3.49 36.14a1.08 1.08 0 1 0 2.16 0a1.08 1.08 0 1 0 -2.16 0M22.22 27.62a0.78 0.78 0 1 0 1.56 0a0.78 0.78 0 1 0 -1.56 0M17.44 19.03a0.89 0.89 0 1 0 1.79 0a0.89 0.89 0 1 0 -1.79 0M6.52 37.82a1.14 1.14 0 1 0 2.28 0a1.14 1.14 0 1 0 -2.28 0M15.46 18.11a1.01 1.01 0 1 0 2.02 0a1.01 1.01 0 1 0 -2.02 0M3.37 32.24a0.78 0.78 0 1 0 1.55 0a0.78 0.78 0 1 0 -1.55 0M26.52 16.11a1.06 1.06 0 1 0 2.12 0a1.06 1.06 0 1 0 -2.12 0M20.95 11.54a0.87 0.87 0 1 0 1.75 0a0.87 0.87 0 1 0 -1.75 0M21.55 41.92a0.77 0.77 0 1 0 1.54 0a0.77 0.77 0 1 0 -1.54 0M24.45 27.21a0.73 0.73 0 1 0 1.46 0a0.73 0.73 0 1 0 -1.46 0M19.68 42.81a0.49 0.49 0 1 0 0.98 0a0.49 0.49 0 1 0 -0.98 0M24.01 18.44a0.54 0.54 0 1 0 1.09 0a0.54 0.54 0 1 0 -1.09 0M9.6 35.39a0.49 0.49 0 1 0 0.99 0a0.49 0.49 0 1 0 -0.99 0M15.74 11.52a1.19 1.19 0 1 0 2.37 0a1.19 1.19 0 1 0 -2.37 0M20.78 12.01a1.2 1.2 0 1 0 2.4 0a1.2 1.2 0 1 0 -2.4 0M25.39 20.01a0.83 0.83 0 1 0 1.66 0a0.83 0.83 0 1 0 -1.66 0M2.37 23.59a1.14 1.14 0 1 0 2.28 0a1.14 1.14 0 1 0 -2.28 0M21.79 11.58a0.42 0.42 0 1 0 0.84 0a0.42 0.42 0 1 0 -0.84 0M11.5 28.54a0.87 0.87 0 1 0 1.74 0a0.87 0.87 0 1 0 -1.74 0M5.73 19.5a1.09 1.09 0 1 0 2.17 0a1.09 1.09 0 1 0 -2.17 0M17.01 41.18a0.87 0.87 0 1 0 1.74 0a0.87 0.87 0 1 0 -1.74 0M18.74 43.33a0.44 0.44 0 1 0 0.89 0a0.44 0.44 0 1 0 -0.89 0M5.13 28.88a0.88 0.88 0 1 0 1.75 0a0.88 0.88 0 1 0 -1.75 0M25.22 24.49a1.11 1.11 0 1 0 2.22 0a1.11 1.11 0 1 0 -2.22 0M12.8 38a0.52 0.52 0 1 0 1.04 0a0.52 0.52 0 1 0 -1.04 0M9.16 17a1.03 1.03 0 1 0 2.06 0a1.03 1.03 0 1 0 -2.06 0M22.09 33.96a1.17 1.17 0 1 0 2.33 0a1.17 1.17 0 1 0 -2.33 0M26.41 27.03a0.94 0.94 0 1 0 1.88 0a0.94 0.94 0 1 0 -1.88 0M13.62 12.72a0.8 0.8 0 1 0 1.6 0a0.8 0.8 0 1 0 -1.6 0M22.25 23.59a0.96 0.96 0 1 0 1.93 0a0.96 0.96 0 1 0 -1.93 0M9.36 12.61a0.78 0.78 0 1 0 1.56 0a0.78 0.78 0 1 0 -1.56 0M27.64 27.67a0.62 0.62 0 1 0 1.25 0a0.62 0.62 0 1 0 -1.25 0M17.78 8.48a1.02 1.02 0 1 0 2.04 0a1.02 1.02 0 1 0 -2.04 0M4.67 35.55a0.71 0.71 0 1 0 1.42 0a0.71 0.71 0 1 0 -1.42 0M10.57 38.31a0.92 0.92 0 1 0 1.85 0a0.92 0.92 0 1 0 -1.85 0M11.19 13.69a0.73 0.73 0 1 0 1.45 0a0.73 0.73 0 1 0 -1.45 0M14.75 15.76a0.89 0.89 0 1 0 1.77 0a0.89 0.89 0 1 0 -1.77 0M19.97 26.22a1.09 1.09 0 1 0 2.19 0a1.09 1.09 0 1 0 -2.19 0M17.49 37.29a0.44 0.44 0 1 0 0.89 0a0.44 0.44 0 1 0 -0.89 0M16.32 15.73a0.44 0.44 0 1 0 0.88 0a0.44 0.44 0 1 0 -0.88 0M12.97 43.17a1 1 0 1 0 2.01 0a1 1 0 1 0 -2.01 0M29.21 26.34a0.46 0.46 0 1 0 0.92 0a0.46 0.46 0 1 0 -0.92 0M4.79 27.31a1.03 1.03 0 1 0 2.05 0a1.03 1.03 0 1 0 -2.05 0M23.4 38.69a0.62 0.62 0 1 0 1.24 0a0.62 0.62 0 1 0 -1.24 0M14.13 8.72a0.87 0.87 0 1 0 1.74 0a0.87 0.87 0 1 0 -1.74 0M26.69 26.17a0.75 0.75 0 1 0 1.5 0a0.75 0.75 0 1 0 -1.5 0M14 10.18a0.49 0.49 0 1 0 0.97 0a0.49 0.49 0 1 0 -0.97 0M4.63 20.03a1.14 1.14 0 1 0 2.28 0a1.14 1.14 0 1 0 -2.28 0M6.7 16.75a1.02 1.02 0 1 0 2.03 0a1.02 1.02 0 1 0 -2.03 0M22.1 40.08a0.86 0.86 0 1 0 1.73 0a0.86 0.86 0 1 0 -1.73 0M11.57 20.66a0.82 0.82 0 1 0 1.64 0a0.82 0.82 0 1 0 -1.64 0M9.5 30.4a1.15 1.15 0 1 0 2.31 0a1.15 1.15 0 1 0 -2.31 0M20.93 15.97a0.46 0.46 0 1 0 0.92 0a0.46 0.46 0 1 0 -0.92 0M19.97 25.37a0.81 0.81 0 1 0 1.61 0a0.81 0.81 0 1 0 -1.61 0M3.2 19.36a0.92 0.92 0 1 0 1.85 0a0.92 0.92 0 1 0 -1.85 0M6.84 18.19a1.18 1.18 0 1 0 2.37 0a1.18 1.18 0 1 0 -2.37 0M18.52 16.28a1.04 1.04 0 1 0 2.07 0a1.04 1.04 0 1 0 -2.07 0M24.77 21.94a0.47 0.47 0 1 0 0.94 0a0.47 0.47 0 1 0 -0.94 0M28 33.24a0.57 0.57 0 1 0 1.13 0a0.57 0.57 0 1 0 -1.13 0M17.47 18.54a0.58 0.58 0 1 0 1.16 0a0.58 0.58 0 1 0 -1.16 0M22.26 39.75a0.47 0.47 0 1 0 0.95 0a0.47 0.47 0 1 0 -0.95 0M2.79 28.87a0.82 0.82 0 1 0 1.64 0a0.82 0.82 0 1 0 -1.64 0M16.74 26.13a1.07 1.07 0 1 0 2.13 0a1.07 1.07 0 1 0 -2.13 0M13.93 30.93a0.82 0.82 0 1 0 1.64 0a0.82 0.82 0 1 0 -1.64 0M17.14 16.32a0.51 0.51 0 1 0 1.01 0a0.51 0.51 0 1 0 -1.01 0M18.77 37.39a1.02 1.02 0 1 0 2.05 0a1.02 1.02 0 1 0 -2.05 0M25.65 33.82a0.95 0.95 0 1 0 1.89 0a0.95 0.95 0 1 0 -1.89 0M7.48 22.04a0.43 0.43 0 1 0 0.85 0a0.43 0.43 0 1 0 -0.85 0M6.08 25.71a0.94 0.94 0 1 0 1.89 0a0.94 0.94 0 1 0 -1.89 0M20.85 28.8a0.41 0.41 0 1 0 0.83 0a0.41 0.41 0 1 0 -0.83 0M11.77 26.37a0.83 0.83 0 1 0 1.65 0a0.83 0.83 0 1 0 -1.65 0M8.02 29.99a0.55 0.55 0 1 0 1.1 0a0.55 0.55 0 1 0 -1.1 0M24.05 20.04a0.48 0.48 0 1 0 0.96 0a0.48 0.48 0 1 0 -0.96 0M4.41 18.62a0.79 0.79 0 1 0 1.58 0a0.79 0.79 0 1 0 -1.58 0M25 15.59a0.94 0.94 0 1 0 1.89 0a0.94 0.94 0 1 0 -1.89 0M23.95 27.87a0.81 0.81 0 1 0 1.62 0a0.81 0.81 0 1 0 -1.62 0M19.87 37.13a0.93 0.93 0 1 0 1.87 0a0.93 0.93 0 1 0 -1.87 0M15.19 10.31a1 1 0 1 0 2 0a1 1 0 1 0 -2 0M11.82 39.39a0.8 0.8 0 1 0 1.6 0a0.8 0.8 0 1 0 -1.6 0M15.72 19.73a0.54 0.54 0 1 0 1.08 0a0.54 0.54 0 1 0 -1.08 0M12.96 11.01a0.58 0.58 0 1 0 1.17 0a0.58 0.58 0 1 0 -1.17 0M16.5 10.25a0.92 0.92 0 1 0 1.83 0a0.92 0.92 0 1 0 -1.83 0M12.16 27.03a0.58 0.58 0 1 0 1.17 0a0.58 0.58 0 1 0 -1.17 0M16.79 8.71a0.53 0.53 0 1 0 1.06 0a0.53 0.53 0 1 0 -1.06 0M22.9 28.44a1.15 1.15 0 1 0 2.3 0a1.15 1.15 0 1 0 -2.3 0" fill="#000"/><path d="M47.8 31.62a0.98 0.98 0 1 0 1.96 0a0.98 0.98 0 1 0 -1.96 0M33.69 33.18a0.73 0.73 0 1 0 1.45 0a0.73 0.73 0 1 0 -1.45 0M48.99 29.67a1.2 1.2 0 1 0 2.39 0a1.2 1.2 0 1 0 -2.39 0M40.94 34.67a0.68 0.68 0 1 0 1.35 0a0.68 0.68 0 1 0 -1.35 0M43.78 30.37a0.71 0.71 0 1 0 1.42 0a0.71 0.71 0 1 0 -1.42 0M48.62 32.22a0.54 0.54 0 1 0 1.07 0a0.54 0.54 0 1 0 -1.07 0M45.74 38.24a1.02 1.02 0 1 0 2.05 0a1.02 1.02 0 1 0 -2.05 0M35.28 37.6a1.12 1.12 0 1 0 2.24 0a1.12 1.12 0 1 0 -2.24 0M54.38 24.85a0.86 0.86 0 1 0 1.72 0a0.86 0.86 0 1 0 -1.72 0M39.81 22.09a0.83 0.83 0 1 0 1.67 0a0.83 0.83 0 1 0 -1.67 0M50.6 38.75a0.82 0.82 0 1 0 1.65 0a0.82 0.82 0 1 0 -1.65 0M47.02 35.3a0.55 0.55 0 1 0 1.1 0a0.55 0.55 0 1 0 -1.1 0M41.56 21.77a0.93 0.93 0 1 0 1.85 0a0.93 0.93 0 1 0 -1.85 0M43.78 32.9a0.4 0.4 0 1 0 0.81 0a0.4 0.4 0 1 0 -0.81 0M40.32 24.78a0.77 0.77 0 1 0 1.53 0a0.77 0.77 0 1 0 -1.53 0M47.45 35.71a0.54 0.54 0 1 0 1.09 0a0.54 0.54 0 1 0 -1.09 0M51.78 38.71a0.65 0.65 0 1 0 1.29 0a0.65 0.65 0 1 0 -1.29 0M37.76 29.34a0.84 0.84 0 1 0 1.68 0a0.84 0.84 0 1 0 -1.68 0M45.1 21.41a0.52 0.52 0 1 0 1.04 0a0.52 0.52 0 1 0 -1.04 0M55.67 29.23a1.06 1.06 0 1 0 2.11 0a1.06 1.06 0 1 0 -2.11 0M33.75 35.41a1.05 1.05 0 1 0 2.1 0a1.05 1.05 0 1 0 -2.1 0M45.61 41.92a1.08 1.08 0 1 0 2.16 0a1.08 1.08 0 1 0 -2.16 0M45.38 20.62a0.82 0.82 0 1 0 1.65 0a0.82 0.82 0 1 0 -1.65 0M43.5 29.09a0.93 0.93 0 1 0 1.86 0a0.93 0.93 0 1 0 -1.86 0M51.07 40.12a1.12 1.12 0 1 0 2.24 0a1.12 1.12 0 1 0 -2.24 0M43.37 34.29a0.43 0.43 0 1 0 0.87 0a0.43 0.43 0 1 0 -0.87 0M40.3 31.5a0.99 0.99 0 1 0 1.98 0a0.99 0.99 0 1 0 -1.98 0M38.51 26.6a0.94 0.94 0 1 0 1.87 0a0.94 0.94 0 1 0 -1.87 0M50.3 38.6a0.44 0.44 0 1 0 0.87 0a0.44 0.44 0 1 0 -0.87 0M35.26 28.86a0.52 0.52 0 1 0 1.05 0a0.52 0.52 0 1 0 -1.05 0M40.84 20.92a0.66 0.66 0 1 0 1.32 0a0.66 0.66 0 1 0 -1.32 0M46.49 37.82a1.07 1.07 0 1 0 2.13 0a1.07 1.07 0 1 0 -2.13 0M54.64 37.13a0.61 0.61 0 1 0 1.22 0a0.61 0.61 0 1 0 -1.22 0M45.34 20.71a1.08 1.08 0 1 0 2.16 0a1.08 1.08 0 1 0 -2.16 0M48.51 40.3a0.65 0.65 0 1 0 1.31 0a0.65 0.65 0 1 0 -1.31 0M50.08 27.4a0.54 0.54 0 1 0 1.07 0a0.54 0.54 0 1 0 -1.07 0M42.49 33.96a0.58 0.58 0 1 0 1.16 0a0.58 0.58 0 1 0 -1.16 0M43.45 25.44a0.55 0.55 0 1 0 1.1 0a0.55 0.55 0 1 0 -1.1 0M50.59 29.57a1.04 1.04 0 1 0 2.07 0a1.04 1.04 0 1 0 -2.07 0M41.48 23.81a0.92 0.92 0 1 0 1.84 0a0.92 0.92 0 1 0 -1.84 0M35.43 26.64a0.96 0.96 0 1 0 1.91 0a0.96 0.96 0 1 0 -1.91 0M44.09 41.65a0.81 0.81 0 1 0 1.61 0a0.81 0.81 0 1 0 -1.61 0M48.86 30.09a0.76 0.76 0 1 0 1.52 0a0.76 0.76 0 1 0 -1.52 0M48.07 31.35a0.98 0.98 0 1 0 1.96 0a0.98 0.98 0 1 0 -1.96 0M53.13 26.49a0.45 0.45 0 1 0 0.89 0a0.45 0.45 0 1 0 -0.89 0M46.19 25.93a0.81 0.81 0 1 0 1.63 0a0.81 0.81 0 1 0 -1.63 0M48.15 25.87a0.6 0.6 0 1 0 1.19 0a0.6 0.6 0 1 0 -1.19 0M50.74 36.7a0.48 0.48 0 1 0 0.96 0a0.48 0.48 0 1 0 -0.96 0M41.83 21.72a0.44 0.44 0 1 0 0.89 0a0.44 0.44 0 1 0 -0.89 0M34.46 30.16a1.02 1.02 0 1 0 2.04 0a1.02 1.02 0 1 0 -2.04 0M44.23 40.7a0.95 0.95 0 1 0 1.89 0a0.95 0.95 0 1 0 -1.89 0M32.97 30.47a1.13 1.13 0 1 0 2.26 0a1.13 1.13 0 1 0 -2.26 0M49.73 31.09a0.42 0.42 0 1 0 0.84 0a0.42 0.42 0 1 0 -0.84 0M37.67 27.12a0.61 0.61 0 1 0 1.22 0a0.61 0.61 0 1 0 -1.22 0M45.41 42.63a1.04 1.04 0 1 0 2.07 0a1.04 1.04 0 1 0 -2.07 0M49.21 32.36a0.98 0.98 0 1 0 1.95 0a0.98 0.98 0 1 0 -1.95 0M40.68 34.2a1.16 1.16 0 1 0 2.32 0a1.16 1.16 0 1 0 -2.32 0M43.67 34.93a0.73 0.73 0 1 0 1.46 0a0.73 0.73 0 1 0 -1.46 0M36.98 37.38a1.01 1.01 0 1 0 2.02 0a1.01 1.01 0 1 0 -2.02 0M52.05 36.05a1.12 1.12 0 1 0 2.24 0a1.12 1.12 0 1 0 -2.24 0M33.61 32.97a1.12 1.12 0 1 0 2.24 0a1.12 1.12 0 1 0 -2.24 0M48.75 22.88a0.49 0.49 0 1 0 0.98 0a0.49 0.49 0 1 0 -0.98 0M51.9 31.3a0.64 0.64 0 1 0 1.29 0a0.64 0.64 0 1 0 -1.29 0M36.21 31.78a1.02 1.02 0 1 0 2.03 0a1.02 1.02 0 1 0 -2.03 0M33.81 29.17a1.03 1.03 0 1 0 2.06 0a1.03 1.03 0 1 0 -2.06 0M41.29 26.99a0.91 0.91 0 1 0 1.82 0a0.91 0.91 0 1 0 -1.82 0M34.93 31.94a0.62 0.62 0 1 0 1.24 0a0.62 0.62 0 1 0 -1.24 0M48.14 22.23a0.54 0.54 0 1 0 1.09 0a0.54 0.54 0 1 0 -1.09 0M52.99 28.84a0.75 0.75 0 1 0 1.51 0a0.75 0.75 0 1 0 -1.51 0M41.06 38.36a1.04 1.04 0 1 0 2.08 0a1.04 1.04 0 1 0 -2.08 0" fill="#000"/></g><path d="M0 60 V42 L3.4 43.3 L7.4 39.1 L9.5 41.0 L12.3 44.5 L16.3 42.8 L20.0 43.3 L22.5 41.5 L24.9 45.2 L27.1 44.6 L29.3 43.5 L32.4 41.2 L36.9 38.1 L39.1 45.3 L42.6 38.7 L47.6 45.6 L49.9 41.4 L52.3 40.5 L56.2 39.3 L60.0 38.4 L60 60 Z" fill="#000"/><path d="M16 44 V30 M12 40 L16 34 M46 44 V34" fill="none" stroke="#000" stroke-width="0.8" stroke-linecap="round" stroke-linejoin="round"/><g opacity="0.6"><path d="M49 5 H57 V18 H45 V9 Z" fill="#e0e0e0" stroke="#cdcdcd" stroke-width="0.9"/><path d="M49 5 V9 H45" fill="none" stroke="#cdcdcd" stroke-width="0.9"/><path d="M50 17 L58.5 8.5" stroke="#c8c8c8" stroke-width="4.2" stroke-linecap="round"/><path d="M50 17 L58.5 8.5" stroke="#f2f2f2" stroke-width="2.8" stroke-linecap="round"/></g><rect x="4" y="46" width="9" height="9" fill="#a8a8a8"/><path d="M2 48 V44 H6 M11 44 H15 V48 M2 53 V57 H6 M11 57 H15 V53" stroke="#888" stroke-width="0.8" fill="none"/></svg>
<div class="t" style="left:569.0px;width:80px;text-align:center;top:635.0px;font-size:13px;line-height:18px;color:#dcdcdc;">Tall</div>
<div class="t" style="left:569.0px;width:80px;text-align:center;top:649.4px;font-size:13px;line-height:18px;color:#dcdcdc;">Grass 4</div>
<svg class="b" style="left:651px;top:575px;overflow:hidden;" width="60" height="60" viewBox="0 0 60 60"><rect width="60" height="60" fill="#d9d9d9"/><rect x="18" y="27" width="22" height="15" rx="5" fill="#000"/><rect x="23" y="40" width="12" height="22" fill="#000"/><path d="M20 36 L11.5 17.9" fill="none" stroke="#000" stroke-width="4" stroke-linecap="round" stroke-linejoin="round"/><path d="M23 30 L20.7 8.1" fill="none" stroke="#000" stroke-width="4" stroke-linecap="round" stroke-linejoin="round"/><path d="M28 28 L28.0 6.0" fill="none" stroke="#000" stroke-width="4" stroke-linecap="round" stroke-linejoin="round"/><path d="M33 29 L35.2 8.1" fill="none" stroke="#000" stroke-width="4" stroke-linecap="round" stroke-linejoin="round"/><path d="M37 33 L45.4 20.6" fill="none" stroke="#000" stroke-width="4" stroke-linecap="round" stroke-linejoin="round"/><g opacity="0.6"><path d="M49 5 H57 V18 H45 V9 Z" fill="#e0e0e0" stroke="#cdcdcd" stroke-width="0.9"/><path d="M49 5 V9 H45" fill="none" stroke="#cdcdcd" stroke-width="0.9"/><path d="M50 17 L58.5 8.5" stroke="#c8c8c8" stroke-width="4.2" stroke-linecap="round"/><path d="M50 17 L58.5 8.5" stroke="#f2f2f2" stroke-width="2.8" stroke-linecap="round"/></g><g opacity="0.55"><rect x="4" y="46" width="9" height="9" fill="#ececec"/><path d="M2 48 V44 H6 M11 44 H15 V48 M2 53 V57 H6 M11 57 H15 V53" stroke="#c8c8c8" stroke-width="0.8" fill="none"/></g></svg>
<div class="t" style="left:641.0px;width:80px;text-align:center;top:641.8px;font-size:13px;line-height:18px;color:#dcdcdc;">Hand 1</div>
<svg class="b" style="left:724px;top:575px;overflow:hidden;" width="60" height="60" viewBox="0 0 60 60"><rect width="60" height="60" fill="#d9d9d9"/><rect x="23" y="24" width="15" height="18" rx="5" fill="#000"/><rect x="25" y="40" width="10" height="22" fill="#000"/><path d="M26 27 L25.3 7.0" fill="none" stroke="#000" stroke-width="3.8" stroke-linecap="round" stroke-linejoin="round"/><path d="M31 27 L34.1 7.2" fill="none" stroke="#000" stroke-width="3.8" stroke-linecap="round" stroke-linejoin="round"/><g opacity="0.6"><path d="M49 5 H57 V18 H45 V9 Z" fill="#e0e0e0" stroke="#cdcdcd" stroke-width="0.9"/><path d="M49 5 V9 H45" fill="none" stroke="#cdcdcd" stroke-width="0.9"/><path d="M50 17 L58.5 8.5" stroke="#c8c8c8" stroke-width="4.2" stroke-linecap="round"/><path d="M50 17 L58.5 8.5" stroke="#f2f2f2" stroke-width="2.8" stroke-linecap="round"/></g><g opacity="0.55"><rect x="4" y="46" width="9" height="9" fill="#ececec"/><path d="M2 48 V44 H6 M11 44 H15 V48 M2 53 V57 H6 M11 57 H15 V53" stroke="#c8c8c8" stroke-width="0.8" fill="none"/></g></svg>
<div class="t" style="left:714.0px;width:80px;text-align:center;top:641.8px;font-size:13px;line-height:18px;color:#dcdcdc;">Hand 2</div>
<svg class="b" style="left:796px;top:575px;overflow:hidden;" width="60" height="60" viewBox="0 0 60 60"><rect width="60" height="60" fill="#d9d9d9"/><rect x="24" y="27" width="15" height="18" rx="5" fill="#000"/><rect x="25" y="42" width="10" height="20" fill="#000"/><path d="M29 28 L29.7 8.0" fill="none" stroke="#000" stroke-width="3.8" stroke-linecap="round" stroke-linejoin="round"/><g opacity="0.6"><path d="M49 5 H57 V18 H45 V9 Z" fill="#e0e0e0" stroke="#cdcdcd" stroke-width="0.9"/><path d="M49 5 V9 H45" fill="none" stroke="#cdcdcd" stroke-width="0.9"/><path d="M50 17 L58.5 8.5" stroke="#c8c8c8" stroke-width="4.2" stroke-linecap="round"/><path d="M50 17 L58.5 8.5" stroke="#f2f2f2" stroke-width="2.8" stroke-linecap="round"/></g><g opacity="0.55"><rect x="4" y="46" width="9" height="9" fill="#ececec"/><path d="M2 48 V44 H6 M11 44 H15 V48 M2 53 V57 H6 M11 57 H15 V53" stroke="#c8c8c8" stroke-width="0.8" fill="none"/></g></svg>
<div class="t" style="left:786.0px;width:80px;text-align:center;top:641.8px;font-size:13px;line-height:18px;color:#dcdcdc;">Hand 3</div>
<svg class="b" style="left:289px;top:677px;overflow:hidden;" width="60" height="60" viewBox="0 0 60 60"><rect width="60" height="60" fill="#d9d9d9"/><rect x="20" y="26" width="19" height="18" rx="5" fill="#000"/><rect x="24" y="42" width="12" height="20" fill="#000"/><path d="M22 28 L15.8 9.0" fill="none" stroke="#000" stroke-width="3.8" stroke-linecap="round" stroke-linejoin="round"/><path d="M27 25 L25.5 4.1" fill="none" stroke="#000" stroke-width="3.8" stroke-linecap="round" stroke-linejoin="round"/><path d="M31 25 L32.5 4.1" fill="none" stroke="#000" stroke-width="3.8" stroke-linecap="round" stroke-linejoin="round"/><path d="M35 27 L38.7 9.4" fill="none" stroke="#000" stroke-width="3.8" stroke-linecap="round" stroke-linejoin="round"/><g opacity="0.6"><path d="M49 5 H57 V18 H45 V9 Z" fill="#e0e0e0" stroke="#cdcdcd" stroke-width="0.9"/><path d="M49 5 V9 H45" fill="none" stroke="#cdcdcd" stroke-width="0.9"/><path d="M50 17 L58.5 8.5" stroke="#c8c8c8" stroke-width="4.2" stroke-linecap="round"/><path d="M50 17 L58.5 8.5" stroke="#f2f2f2" stroke-width="2.8" stroke-linecap="round"/></g><g opacity="0.55"><rect x="4" y="46" width="9" height="9" fill="#ececec"/><path d="M2 48 V44 H6 M11 44 H15 V48 M2 53 V57 H6 M11 57 H15 V53" stroke="#c8c8c8" stroke-width="0.8" fill="none"/></g></svg>
<div class="t" style="left:279.0px;width:80px;text-align:center;top:743.8px;font-size:13px;line-height:18px;color:#dcdcdc;">Hand 4</div>
<svg class="b" style="left:361px;top:677px;overflow:hidden;" width="60" height="60" viewBox="0 0 60 60"><rect width="60" height="60" fill="#d9d9d9"/><rect x="21" y="26" width="17" height="18" rx="5" fill="#000"/><rect x="24" y="42" width="12" height="20" fill="#000"/><path d="M25 26 L22.9 6.1" fill="none" stroke="#000" stroke-width="3.8" stroke-linecap="round" stroke-linejoin="round"/><path d="M29 24 L29.0 2.0" fill="none" stroke="#000" stroke-width="3.8" stroke-linecap="round" stroke-linejoin="round"/><path d="M33 26 L35.1 6.1" fill="none" stroke="#000" stroke-width="3.8" stroke-linecap="round" stroke-linejoin="round"/><g opacity="0.6"><path d="M49 5 H57 V18 H45 V9 Z" fill="#e0e0e0" stroke="#cdcdcd" stroke-width="0.9"/><path d="M49 5 V9 H45" fill="none" stroke="#cdcdcd" stroke-width="0.9"/><path d="M50 17 L58.5 8.5" stroke="#c8c8c8" stroke-width="4.2" stroke-linecap="round"/><path d="M50 17 L58.5 8.5" stroke="#f2f2f2" stroke-width="2.8" stroke-linecap="round"/></g><g opacity="0.55"><rect x="4" y="46" width="9" height="9" fill="#ececec"/><path d="M2 48 V44 H6 M11 44 H15 V48 M2 53 V57 H6 M11 57 H15 V53" stroke="#c8c8c8" stroke-width="0.8" fill="none"/></g></svg>
<div class="t" style="left:351.0px;width:80px;text-align:center;top:743.8px;font-size:13px;line-height:18px;color:#dcdcdc;">Hand 5</div>
<svg class="b" style="left:434px;top:677px;overflow:hidden;" width="60" height="60" viewBox="0 0 60 60"><rect width="60" height="60" fill="#d9d9d9"/><circle cx="18" cy="24" r="5" fill="none" stroke="#000" stroke-width="3"/><rect x="22" y="24" width="16" height="18" rx="5" fill="#000"/><rect x="26" y="40" width="11" height="22" fill="#000"/><path d="M28 26 L26.1 8.1" fill="none" stroke="#000" stroke-width="3.2" stroke-linecap="round" stroke-linejoin="round"/><path d="M32 24 L33.4 4.0" fill="none" stroke="#000" stroke-width="3.2" stroke-linecap="round" stroke-linejoin="round"/><path d="M36 28 L39.9 14.5" fill="none" stroke="#000" stroke-width="3.0" stroke-linecap="round" stroke-linejoin="round"/><g opacity="0.6"><path d="M49 5 H57 V18 H45 V9 Z" fill="#e0e0e0" stroke="#cdcdcd" stroke-width="0.9"/><path d="M49 5 V9 H45" fill="none" stroke="#cdcdcd" stroke-width="0.9"/><path d="M50 17 L58.5 8.5" stroke="#c8c8c8" stroke-width="4.2" stroke-linecap="round"/><path d="M50 17 L58.5 8.5" stroke="#f2f2f2" stroke-width="2.8" stroke-linecap="round"/></g><g opacity="0.55"><rect x="4" y="46" width="9" height="9" fill="#ececec"/><path d="M2 48 V44 H6 M11 44 H15 V48 M2 53 V57 H6 M11 57 H15 V53" stroke="#c8c8c8" stroke-width="0.8" fill="none"/></g></svg>
<div class="t" style="left:424.0px;width:80px;text-align:center;top:743.8px;font-size:13px;line-height:18px;color:#dcdcdc;">Hand 6</div>
<svg class="b" style="left:506px;top:677px;overflow:hidden;" width="60" height="60" viewBox="0 0 60 60"><rect width="60" height="60" fill="#d9d9d9"/><rect x="22" y="26" width="15" height="20" rx="5" fill="#000"/><rect x="23" y="42" width="11" height="20" fill="#000"/><path d="M25 28 L20.4 6.5" fill="none" stroke="#000" stroke-width="3.8" stroke-linecap="round" stroke-linejoin="round"/><path d="M32 28 L37.3 6.7" fill="none" stroke="#000" stroke-width="3.8" stroke-linecap="round" stroke-linejoin="round"/><g opacity="0.6"><path d="M49 5 H57 V18 H45 V9 Z" fill="#e0e0e0" stroke="#cdcdcd" stroke-width="0.9"/><path d="M49 5 V9 H45" fill="none" stroke="#cdcdcd" stroke-width="0.9"/><path d="M50 17 L58.5 8.5" stroke="#c8c8c8" stroke-width="4.2" stroke-linecap="round"/><path d="M50 17 L58.5 8.5" stroke="#f2f2f2" stroke-width="2.8" stroke-linecap="round"/></g><g opacity="0.55"><rect x="4" y="46" width="9" height="9" fill="#ececec"/><path d="M2 48 V44 H6 M11 44 H15 V48 M2 53 V57 H6 M11 57 H15 V53" stroke="#c8c8c8" stroke-width="0.8" fill="none"/></g></svg>
<div class="t" style="left:496.0px;width:80px;text-align:center;top:743.8px;font-size:13px;line-height:18px;color:#dcdcdc;">Hand 7</div>
<svg class="b" style="left:579px;top:677px;overflow:hidden;" width="60" height="60" viewBox="0 0 60 60"><rect width="60" height="60" fill="#bdbdbd"/><path d="M-2.25 6.74a2.99 2.99 0 1 0 5.97 0a2.99 2.99 0 1 0 -5.97 0M38.61 8.32a2.42 2.42 0 1 0 4.85 0a2.42 2.42 0 1 0 -4.85 0M11.41 45.46a2.49 2.49 0 1 0 4.99 0a2.49 2.49 0 1 0 -4.99 0M41.97 39.73a2.47 2.47 0 1 0 4.95 0a2.47 2.47 0 1 0 -4.95 0M29.11 26.87a3.03 3.03 0 1 0 6.05 0a3.03 3.03 0 1 0 -6.05 0M57.54 5.59a2.24 2.24 0 1 0 4.48 0a2.24 2.24 0 1 0 -4.48 0M53.79 24.18a2.6 2.6 0 1 0 5.19 0a2.6 2.6 0 1 0 -5.19 0M15.71 21.89a4.11 4.11 0 1 0 8.22 0a4.11 4.11 0 1 0 -8.22 0M9.25 13.02a3.37 3.37 0 1 0 6.74 0a3.37 3.37 0 1 0 -6.74 0M28.97 57.22a3.88 3.88 0 1 0 7.75 0a3.88 3.88 0 1 0 -7.75 0M17.46 12.23a3.87 3.87 0 1 0 7.75 0a3.87 3.87 0 1 0 -7.75 0M55.67 1.82a3.67 3.67 0 1 0 7.34 0a3.67 3.67 0 1 0 -7.34 0M49.46 39.07a2.64 2.64 0 1 0 5.27 0a2.64 2.64 0 1 0 -5.27 0M45.21 43.79a2.59 2.59 0 1 0 5.18 0a2.59 2.59 0 1 0 -5.18 0M36.17 13.15a2.28 2.28 0 1 0 4.57 0a2.28 2.28 0 1 0 -4.57 0M17.17 20.06a2.99 2.99 0 1 0 5.98 0a2.99 2.99 0 1 0 -5.98 0M34.68 50.17a4.12 4.12 0 1 0 8.25 0a4.12 4.12 0 1 0 -8.25 0M54.81 59.61a3.78 3.78 0 1 0 7.56 0a3.78 3.78 0 1 0 -7.56 0M14.93 10.58a3.45 3.45 0 1 0 6.9 0a3.45 3.45 0 1 0 -6.9 0M30.36 40.47a2.39 2.39 0 1 0 4.77 0a2.39 2.39 0 1 0 -4.77 0M8.16 55.26a3.4 3.4 0 1 0 6.81 0a3.4 3.4 0 1 0 -6.81 0M38.72 5.74a3 3 0 1 0 6 0a3 3 0 1 0 -6 0M50.42 38.96a4.18 4.18 0 1 0 8.37 0a4.18 4.18 0 1 0 -8.37 0M8.01 27.29a3.8 3.8 0 1 0 7.6 0a3.8 3.8 0 1 0 -7.6 0M23.36 47.33a3.32 3.32 0 1 0 6.65 0a3.32 3.32 0 1 0 -6.65 0M2.92 5.93a4.17 4.17 0 1 0 8.33 0a4.17 4.17 0 1 0 -8.33 0M4.29 11.65a2.87 2.87 0 1 0 5.74 0a2.87 2.87 0 1 0 -5.74 0M39.66 51.25a3.15 3.15 0 1 0 6.3 0a3.15 3.15 0 1 0 -6.3 0M27.13 47.31a2.76 2.76 0 1 0 5.51 0a2.76 2.76 0 1 0 -5.51 0M18.87 36.76a3.47 3.47 0 1 0 6.94 0a3.47 3.47 0 1 0 -6.94 0M-0.19 6.72a2.48 2.48 0 1 0 4.95 0a2.48 2.48 0 1 0 -4.95 0M39.36 41.58a4.15 4.15 0 1 0 8.29 0a4.15 4.15 0 1 0 -8.29 0M42.32 15.29a3.73 3.73 0 1 0 7.46 0a3.73 3.73 0 1 0 -7.46 0M56.88 20.92a2.22 2.22 0 1 0 4.44 0a2.22 2.22 0 1 0 -4.44 0M19.96 16.95a2.55 2.55 0 1 0 5.1 0a2.55 2.55 0 1 0 -5.1 0M-1.22 7.49a3.93 3.93 0 1 0 7.86 0a3.93 3.93 0 1 0 -7.86 0M0.39 36.84a2.61 2.61 0 1 0 5.23 0a2.61 2.61 0 1 0 -5.23 0M8.8 49.24a2.8 2.8 0 1 0 5.59 0a2.8 2.8 0 1 0 -5.59 0M7.44 27.29a3.59 3.59 0 1 0 7.18 0a3.59 3.59 0 1 0 -7.18 0M28.46 51.58a3 3 0 1 0 6.01 0a3 3 0 1 0 -6.01 0M28.32 43.03a3.12 3.12 0 1 0 6.25 0a3.12 3.12 0 1 0 -6.25 0M40.55 28.01a2.47 2.47 0 1 0 4.93 0a2.47 2.47 0 1 0 -4.93 0M3.72 46.99a3.69 3.69 0 1 0 7.38 0a3.69 3.69 0 1 0 -7.38 0M53.21 41.41a3.36 3.36 0 1 0 6.72 0a3.36 3.36 0 1 0 -6.72 0M7.53 51.19a2.44 2.44 0 1 0 4.88 0a2.44 2.44 0 1 0 -4.88 0M22.53 8.44a2.96 2.96 0 1 0 5.92 0a2.96 2.96 0 1 0 -5.92 0M14.81 25.53a3.62 3.62 0 1 0 7.24 0a3.62 3.62 0 1 0 -7.24 0M28.74 14.56a3.76 3.76 0 1 0 7.52 0a3.76 3.76 0 1 0 -7.52 0M41.84 49.63a2.27 2.27 0 1 0 4.53 0a2.27 2.27 0 1 0 -4.53 0M34.17 53.72a2.72 2.72 0 1 0 5.44 0a2.72 2.72 0 1 0 -5.44 0M9.2 48.83a2.93 2.93 0 1 0 5.86 0a2.93 2.93 0 1 0 -5.86 0M21.11 49.06a2.97 2.97 0 1 0 5.94 0a2.97 2.97 0 1 0 -5.94 0M9.02 12.86a2.89 2.89 0 1 0 5.78 0a2.89 2.89 0 1 0 -5.78 0M38.13 22.1a3.74 3.74 0 1 0 7.48 0a3.74 3.74 0 1 0 -7.48 0M0.51 14.94a3.45 3.45 0 1 0 6.9 0a3.45 3.45 0 1 0 -6.9 0M24.7 29.99a4.07 4.07 0 1 0 8.14 0a4.07 4.07 0 1 0 -8.14 0M14.37 10.89a2.27 2.27 0 1 0 4.53 0a2.27 2.27 0 1 0 -4.53 0M25.8 17.83a3.15 3.15 0 1 0 6.3 0a3.15 3.15 0 1 0 -6.3 0M-2.62 0.01a2.96 2.96 0 1 0 5.92 0a2.96 2.96 0 1 0 -5.92 0M41.43 18.03a4.03 4.03 0 1 0 8.05 0a4.03 4.03 0 1 0 -8.05 0M31.01 24.21a3.75 3.75 0 1 0 7.51 0a3.75 3.75 0 1 0 -7.51 0M10.1 36.31a3.89 3.89 0 1 0 7.79 0a3.89 3.89 0 1 0 -7.79 0M30.06 19.18a2.39 2.39 0 1 0 4.78 0a2.39 2.39 0 1 0 -4.78 0M31.5 11.26a2.95 2.95 0 1 0 5.89 0a2.95 2.95 0 1 0 -5.89 0M29 56.47a3.55 3.55 0 1 0 7.09 0a3.55 3.55 0 1 0 -7.09 0M28.34 51.5a2.82 2.82 0 1 0 5.63 0a2.82 2.82 0 1 0 -5.63 0M19.95 40.63a3.31 3.31 0 1 0 6.62 0a3.31 3.31 0 1 0 -6.62 0M9.45 24.64a3.85 3.85 0 1 0 7.69 0a3.85 3.85 0 1 0 -7.69 0M12.24 42.35a2.3 2.3 0 1 0 4.59 0a2.3 2.3 0 1 0 -4.59 0M54.43 41.04a2.85 2.85 0 1 0 5.69 0a2.85 2.85 0 1 0 -5.69 0M56.67 47.79a2.32 2.32 0 1 0 4.65 0a2.32 2.32 0 1 0 -4.65 0M10.7 29.5a4.2 4.2 0 1 0 8.39 0a4.2 4.2 0 1 0 -8.39 0M5.62 2.86a2.83 2.83 0 1 0 5.65 0a2.83 2.83 0 1 0 -5.65 0M-0.59 24.54a3.28 3.28 0 1 0 6.55 0a3.28 3.28 0 1 0 -6.55 0M24.18 8.48a2.25 2.25 0 1 0 4.49 0a2.25 2.25 0 1 0 -4.49 0M45.01 26.4a3.16 3.16 0 1 0 6.32 0a3.16 3.16 0 1 0 -6.32 0M24.68 41.14a4 4 0 1 0 8 0a4 4 0 1 0 -8 0M46.75 43.63a2.88 2.88 0 1 0 5.76 0a2.88 2.88 0 1 0 -5.76 0M6.21 5.39a3.92 3.92 0 1 0 7.84 0a3.92 3.92 0 1 0 -7.84 0M-0.61 34.16a4.02 4.02 0 1 0 8.04 0a4.02 4.02 0 1 0 -8.04 0M16.3 23.35a3.04 3.04 0 1 0 6.07 0a3.04 3.04 0 1 0 -6.07 0M52.79 41.05a3.88 3.88 0 1 0 7.76 0a3.88 3.88 0 1 0 -7.76 0M-0.77 43.82a3.1 3.1 0 1 0 6.2 0a3.1 3.1 0 1 0 -6.2 0M20.42 49a3.67 3.67 0 1 0 7.34 0a3.67 3.67 0 1 0 -7.34 0M50.61 44.31a4.02 4.02 0 1 0 8.04 0a4.02 4.02 0 1 0 -8.04 0M21.92 33.37a3.77 3.77 0 1 0 7.54 0a3.77 3.77 0 1 0 -7.54 0M23.84 8.24a3.37 3.37 0 1 0 6.74 0a3.37 3.37 0 1 0 -6.74 0M49.82 52.23a2.45 2.45 0 1 0 4.9 0a2.45 2.45 0 1 0 -4.9 0M19.98 13.71a2.88 2.88 0 1 0 5.76 0a2.88 2.88 0 1 0 -5.76 0M54.74 25.27a2.83 2.83 0 1 0 5.65 0a2.83 2.83 0 1 0 -5.65 0" fill="#000"/><g opacity="0.6"><path d="M49 5 H57 V18 H45 V9 Z" fill="#e0e0e0" stroke="#cdcdcd" stroke-width="0.9"/><path d="M49 5 V9 H45" fill="none" stroke="#cdcdcd" stroke-width="0.9"/><path d="M50 17 L58.5 8.5" stroke="#c8c8c8" stroke-width="4.2" stroke-linecap="round"/><path d="M50 17 L58.5 8.5" stroke="#f2f2f2" stroke-width="2.8" stroke-linecap="round"/></g><g opacity="0.55"><rect x="4" y="46" width="9" height="9" fill="#ececec"/><path d="M2 48 V44 H6 M11 44 H15 V48 M2 53 V57 H6 M11 57 H15 V53" stroke="#c8c8c8" stroke-width="0.8" fill="none"/></g></svg>
<div class="t" style="left:569.0px;width:80px;text-align:center;top:737.0px;font-size:13px;line-height:18px;color:#dcdcdc;">Leaves</div>
<div class="t" style="left:569.0px;width:80px;text-align:center;top:751.4px;font-size:13px;line-height:18px;color:#dcdcdc;">Large</div>
<svg class="b" style="left:651px;top:677px;overflow:hidden;" width="60" height="60" viewBox="0 0 60 60"><rect width="60" height="60" fill="#c8c8c8"/><defs><pattern id="nz4" patternUnits="userSpaceOnUse" width="30" height="30"><path d="M1.18 6.41a1.14 1.14 0 1 0 2.29 0a1.14 1.14 0 1 0 -2.29 0M25.53 14.89a1.48 1.48 0 1 0 2.95 0a1.48 1.48 0 1 0 -2.95 0M1.43 15.27a1.57 1.57 0 1 0 3.15 0a1.57 1.57 0 1 0 -3.15 0M14.08 28.34a1.61 1.61 0 1 0 3.21 0a1.61 1.61 0 1 0 -3.21 0M9.62 0.02a1.5 1.5 0 1 0 3.01 0a1.5 1.5 0 1 0 -3.01 0M2.31 0.28a1.48 1.48 0 1 0 2.97 0a1.48 1.48 0 1 0 -2.97 0M23.62 25.1a1.66 1.66 0 1 0 3.33 0a1.66 1.66 0 1 0 -3.33 0M5.05 2.45a1 1 0 1 0 1.99 0a1 1 0 1 0 -1.99 0M28.3 3.36a1.03 1.03 0 1 0 2.06 0a1.03 1.03 0 1 0 -2.06 0M-0.33 1.48a0.93 0.93 0 1 0 1.86 0a0.93 0.93 0 1 0 -1.86 0M9.44 4.9a1.15 1.15 0 1 0 2.3 0a1.15 1.15 0 1 0 -2.3 0M26.31 5.02a1.55 1.55 0 1 0 3.1 0a1.55 1.55 0 1 0 -3.1 0M20.79 17.06a1.36 1.36 0 1 0 2.72 0a1.36 1.36 0 1 0 -2.72 0M22.02 17.61a1.08 1.08 0 1 0 2.17 0a1.08 1.08 0 1 0 -2.17 0M8.66 7.32a1.22 1.22 0 1 0 2.44 0a1.22 1.22 0 1 0 -2.44 0M28.66 12.8a0.96 0.96 0 1 0 1.91 0a0.96 0.96 0 1 0 -1.91 0M13.05 24.38a1.26 1.26 0 1 0 2.51 0a1.26 1.26 0 1 0 -2.51 0M20.12 2.73a0.95 0.95 0 1 0 1.9 0a0.95 0.95 0 1 0 -1.9 0M18.71 1.45a1.14 1.14 0 1 0 2.28 0a1.14 1.14 0 1 0 -2.28 0M10.61 5.81a0.93 0.93 0 1 0 1.86 0a0.93 0.93 0 1 0 -1.86 0M-1.25 28.55a1.45 1.45 0 1 0 2.9 0a1.45 1.45 0 1 0 -2.9 0M26.89 14.75a1.66 1.66 0 1 0 3.33 0a1.66 1.66 0 1 0 -3.33 0M24.56 18.54a1.32 1.32 0 1 0 2.64 0a1.32 1.32 0 1 0 -2.64 0M14.06 6.76a1.2 1.2 0 1 0 2.4 0a1.2 1.2 0 1 0 -2.4 0M20.11 5.86a1.58 1.58 0 1 0 3.16 0a1.58 1.58 0 1 0 -3.16 0M13.74 18.13a1.56 1.56 0 1 0 3.11 0a1.56 1.56 0 1 0 -3.11 0M18.29 4.13a1.1 1.1 0 1 0 2.2 0a1.1 1.1 0 1 0 -2.2 0M-1.63 0.82a1.66 1.66 0 1 0 3.32 0a1.66 1.66 0 1 0 -3.32 0M16.27 29.06a1.52 1.52 0 1 0 3.05 0a1.52 1.52 0 1 0 -3.05 0M7.84 29.02a1.64 1.64 0 1 0 3.28 0a1.64 1.64 0 1 0 -3.28 0M12.53 2.5a1.15 1.15 0 1 0 2.31 0a1.15 1.15 0 1 0 -2.31 0M4.02 10.97a0.97 0.97 0 1 0 1.93 0a0.97 0.97 0 1 0 -1.93 0M20.33 29.39a1.07 1.07 0 1 0 2.14 0a1.07 1.07 0 1 0 -2.14 0M22.11 17.53a1.29 1.29 0 1 0 2.57 0a1.29 1.29 0 1 0 -2.57 0M25.66 11.32a1.56 1.56 0 1 0 3.11 0a1.56 1.56 0 1 0 -3.11 0M0 28.96a1.05 1.05 0 1 0 2.09 0a1.05 1.05 0 1 0 -2.09 0M-1.36 26.44a1.48 1.48 0 1 0 2.95 0a1.48 1.48 0 1 0 -2.95 0M19.04 22.98a1.2 1.2 0 1 0 2.4 0a1.2 1.2 0 1 0 -2.4 0M1.77 9.55a1.66 1.66 0 1 0 3.33 0a1.66 1.66 0 1 0 -3.33 0M28.19 6.9a1.25 1.25 0 1 0 2.51 0a1.25 1.25 0 1 0 -2.51 0M12.61 27.13a0.9 0.9 0 1 0 1.81 0a0.9 0.9 0 1 0 -1.81 0M23.54 7.6a1.34 1.34 0 1 0 2.68 0a1.34 1.34 0 1 0 -2.68 0M2.27 2.52a1.61 1.61 0 1 0 3.21 0a1.61 1.61 0 1 0 -3.21 0M13.5 29.15a1.59 1.59 0 1 0 3.18 0a1.59 1.59 0 1 0 -3.18 0M21.2 2.24a1.37 1.37 0 1 0 2.74 0a1.37 1.37 0 1 0 -2.74 0M28.81 15.09a0.95 0.95 0 1 0 1.91 0a0.95 0.95 0 1 0 -1.91 0M3.86 29.64a1.68 1.68 0 1 0 3.36 0a1.68 1.68 0 1 0 -3.36 0M5.94 9.55a1.47 1.47 0 1 0 2.94 0a1.47 1.47 0 1 0 -2.94 0M13.54 5.57a1.69 1.69 0 1 0 3.38 0a1.69 1.69 0 1 0 -3.38 0M17.7 10.95a0.92 0.92 0 1 0 1.84 0a0.92 0.92 0 1 0 -1.84 0M14.27 22.56a1.04 1.04 0 1 0 2.08 0a1.04 1.04 0 1 0 -2.08 0M0.98 21.72a1.64 1.64 0 1 0 3.27 0a1.64 1.64 0 1 0 -3.27 0M9.9 14.19a1.41 1.41 0 1 0 2.82 0a1.41 1.41 0 1 0 -2.82 0M14.48 3.85a1.12 1.12 0 1 0 2.24 0a1.12 1.12 0 1 0 -2.24 0M5.21 5.92a0.97 0.97 0 1 0 1.94 0a0.97 0.97 0 1 0 -1.94 0M10.16 6.58a1.58 1.58 0 1 0 3.16 0a1.58 1.58 0 1 0 -3.16 0M8.11 28.9a1.55 1.55 0 1 0 3.1 0a1.55 1.55 0 1 0 -3.1 0M6.72 4.62a1.36 1.36 0 1 0 2.72 0a1.36 1.36 0 1 0 -2.72 0M13.22 16.05a1 1 0 1 0 2 0a1 1 0 1 0 -2 0M14.68 22.78a1.26 1.26 0 1 0 2.51 0a1.26 1.26 0 1 0 -2.51 0M6.52 27.67a1.14 1.14 0 1 0 2.27 0a1.14 1.14 0 1 0 -2.27 0M28.96 20.66a0.9 0.9 0 1 0 1.8 0a0.9 0.9 0 1 0 -1.8 0M11.89 4.48a1.53 1.53 0 1 0 3.06 0a1.53 1.53 0 1 0 -3.06 0M10.97 2.57a1.66 1.66 0 1 0 3.32 0a1.66 1.66 0 1 0 -3.32 0M22.62 18.23a1.35 1.35 0 1 0 2.71 0a1.35 1.35 0 1 0 -2.71 0M1.09 29.48a1.14 1.14 0 1 0 2.28 0a1.14 1.14 0 1 0 -2.28 0M14.44 14.7a1.28 1.28 0 1 0 2.56 0a1.28 1.28 0 1 0 -2.56 0M-0.75 26.8a1.29 1.29 0 1 0 2.59 0a1.29 1.29 0 1 0 -2.59 0M10.21 25.82a1.59 1.59 0 1 0 3.18 0a1.59 1.59 0 1 0 -3.18 0M20.39 27.22a1.18 1.18 0 1 0 2.36 0a1.18 1.18 0 1 0 -2.36 0M1.76 10.43a1.38 1.38 0 1 0 2.76 0a1.38 1.38 0 1 0 -2.76 0M22.2 22.03a1.4 1.4 0 1 0 2.81 0a1.4 1.4 0 1 0 -2.81 0M16.67 19.98a1.36 1.36 0 1 0 2.72 0a1.36 1.36 0 1 0 -2.72 0M-0.66 16.4a1.12 1.12 0 1 0 2.24 0a1.12 1.12 0 1 0 -2.24 0M0.6 18.37a1.57 1.57 0 1 0 3.15 0a1.57 1.57 0 1 0 -3.15 0M7.08 20.1a1.4 1.4 0 1 0 2.8 0a1.4 1.4 0 1 0 -2.8 0M18.99 26.16a1.46 1.46 0 1 0 2.91 0a1.46 1.46 0 1 0 -2.91 0M1.21 18.51a1.18 1.18 0 1 0 2.36 0a1.18 1.18 0 1 0 -2.36 0M11.46 20.25a1.04 1.04 0 1 0 2.08 0a1.04 1.04 0 1 0 -2.08 0M17.85 28.15a0.96 0.96 0 1 0 1.92 0a0.96 0.96 0 1 0 -1.92 0M24.32 21.24a1.22 1.22 0 1 0 2.45 0a1.22 1.22 0 1 0 -2.45 0M21.94 2.38a1.03 1.03 0 1 0 2.06 0a1.03 1.03 0 1 0 -2.06 0M28.89 18.66a1.03 1.03 0 1 0 2.07 0a1.03 1.03 0 1 0 -2.07 0M2.55 13.41a1.34 1.34 0 1 0 2.67 0a1.34 1.34 0 1 0 -2.67 0M28.29 5.58a1.41 1.41 0 1 0 2.82 0a1.41 1.41 0 1 0 -2.82 0M11.56 16.72a1.65 1.65 0 1 0 3.31 0a1.65 1.65 0 1 0 -3.31 0M2.06 25.06a1.49 1.49 0 1 0 2.97 0a1.49 1.49 0 1 0 -2.97 0M6.53 3.6a1.5 1.5 0 1 0 2.99 0a1.5 1.5 0 1 0 -2.99 0M24.59 10.36a1.01 1.01 0 1 0 2.02 0a1.01 1.01 0 1 0 -2.02 0M15.47 20.12a1.19 1.19 0 1 0 2.37 0a1.19 1.19 0 1 0 -2.37 0M11.31 3.07a1.01 1.01 0 1 0 2.03 0a1.01 1.01 0 1 0 -2.03 0M5.67 22.73a1 1 0 1 0 1.99 0a1 1 0 1 0 -1.99 0M4.87 13.93a1.07 1.07 0 1 0 2.14 0a1.07 1.07 0 1 0 -2.14 0M6.1 22.1a1.09 1.09 0 1 0 2.17 0a1.09 1.09 0 1 0 -2.17 0M15.53 2.53a1.31 1.31 0 1 0 2.63 0a1.31 1.31 0 1 0 -2.63 0M19.89 13.43a1.05 1.05 0 1 0 2.1 0a1.05 1.05 0 1 0 -2.1 0M-0.32 8.25a1.23 1.23 0 1 0 2.45 0a1.23 1.23 0 1 0 -2.45 0M1.72 12.79a1.31 1.31 0 1 0 2.61 0a1.31 1.31 0 1 0 -2.61 0M0.26 19.93a1.66 1.66 0 1 0 3.33 0a1.66 1.66 0 1 0 -3.33 0M19.51 13.49a1.57 1.57 0 1 0 3.13 0a1.57 1.57 0 1 0 -3.13 0M26.69 28.49a1.66 1.66 0 1 0 3.32 0a1.66 1.66 0 1 0 -3.32 0M21.46 28.3a1.51 1.51 0 1 0 3.02 0a1.51 1.51 0 1 0 -3.02 0M8.46 4.03a1.29 1.29 0 1 0 2.58 0a1.29 1.29 0 1 0 -2.58 0M19.9 8.07a1.19 1.19 0 1 0 2.38 0a1.19 1.19 0 1 0 -2.38 0M1.36 1.23a1.11 1.11 0 1 0 2.21 0a1.11 1.11 0 1 0 -2.21 0M24.44 1.81a1.02 1.02 0 1 0 2.04 0a1.02 1.02 0 1 0 -2.04 0M10.91 29.04a1.07 1.07 0 1 0 2.15 0a1.07 1.07 0 1 0 -2.15 0M0.13 1.47a1.18 1.18 0 1 0 2.35 0a1.18 1.18 0 1 0 -2.35 0M-0.78 20.12a0.95 0.95 0 1 0 1.9 0a0.95 0.95 0 1 0 -1.9 0M4.58 2.3a1.12 1.12 0 1 0 2.23 0a1.12 1.12 0 1 0 -2.23 0M1.6 4.93a1.06 1.06 0 1 0 2.11 0a1.06 1.06 0 1 0 -2.11 0M5.8 19.03a1.2 1.2 0 1 0 2.39 0a1.2 1.2 0 1 0 -2.39 0M4.63 0.36a1.59 1.59 0 1 0 3.18 0a1.59 1.59 0 1 0 -3.18 0M24.15 28.44a1.47 1.47 0 1 0 2.94 0a1.47 1.47 0 1 0 -2.94 0M11.92 9.84a1.06 1.06 0 1 0 2.11 0a1.06 1.06 0 1 0 -2.11 0M11.56 12.55a1.65 1.65 0 1 0 3.3 0a1.65 1.65 0 1 0 -3.3 0M4.52 20.97a1.48 1.48 0 1 0 2.97 0a1.48 1.48 0 1 0 -2.97 0M18.82 18.4a0.93 0.93 0 1 0 1.87 0a0.93 0.93 0 1 0 -1.87 0M3.02 15.55a1.38 1.38 0 1 0 2.77 0a1.38 1.38 0 1 0 -2.77 0M27.8 23.57a1.07 1.07 0 1 0 2.15 0a1.07 1.07 0 1 0 -2.15 0M3.54 23.21a0.91 0.91 0 1 0 1.82 0a0.91 0.91 0 1 0 -1.82 0M25.98 2.6a1.38 1.38 0 1 0 2.76 0a1.38 1.38 0 1 0 -2.76 0M24.39 2.52a0.98 0.98 0 1 0 1.96 0a0.98 0.98 0 1 0 -1.96 0M18.04 21.6a0.91 0.91 0 1 0 1.82 0a0.91 0.91 0 1 0 -1.82 0M12.53 23.82a1.52 1.52 0 1 0 3.04 0a1.52 1.52 0 1 0 -3.04 0M10.4 0.24a1.39 1.39 0 1 0 2.79 0a1.39 1.39 0 1 0 -2.79 0M14.72 12.66a1.38 1.38 0 1 0 2.75 0a1.38 1.38 0 1 0 -2.75 0M16.19 14.44a1.34 1.34 0 1 0 2.68 0a1.34 1.34 0 1 0 -2.68 0M15.31 23.15a1.53 1.53 0 1 0 3.07 0a1.53 1.53 0 1 0 -3.07 0M-0.44 23.53a1.09 1.09 0 1 0 2.19 0a1.09 1.09 0 1 0 -2.19 0" fill="#000"/></pattern></defs><rect width="60" height="60" fill="url(#nz4)"/><g opacity="0.6"><path d="M49 5 H57 V18 H45 V9 Z" fill="#e0e0e0" stroke="#cdcdcd" stroke-width="0.9"/><path d="M49 5 V9 H45" fill="none" stroke="#cdcdcd" stroke-width="0.9"/><path d="M50 17 L58.5 8.5" stroke="#c8c8c8" stroke-width="4.2" stroke-linecap="round"/><path d="M50 17 L58.5 8.5" stroke="#f2f2f2" stroke-width="2.8" stroke-linecap="round"/></g><g opacity="0.55"><rect x="4" y="46" width="9" height="9" fill="#ececec"/><path d="M2 48 V44 H6 M11 44 H15 V48 M2 53 V57 H6 M11 57 H15 V53" stroke="#c8c8c8" stroke-width="0.8" fill="none"/></g></svg>
<div class="t" style="left:641.0px;width:80px;text-align:center;top:737.0px;font-size:13px;line-height:18px;color:#dcdcdc;">Leaves</div>
<div class="t" style="left:641.0px;width:80px;text-align:center;top:751.4px;font-size:13px;line-height:18px;color:#dcdcdc;">Medium</div>
<svg class="b" style="left:724px;top:677px;overflow:hidden;" width="60" height="60" viewBox="0 0 60 60"><rect width="60" height="60" fill="#c8c8c8"/><defs><pattern id="nz5" patternUnits="userSpaceOnUse" width="20" height="20"><path d="M10.55 12.64a0.86 0.86 0 1 0 1.72 0a0.86 0.86 0 1 0 -1.72 0M4.65 13.04a0.9 0.9 0 1 0 1.79 0a0.9 0.9 0 1 0 -1.79 0M17.4 3.73a0.78 0.78 0 1 0 1.55 0a0.78 0.78 0 1 0 -1.55 0M11.41 10.07a0.93 0.93 0 1 0 1.87 0a0.93 0.93 0 1 0 -1.87 0M9.64 8.91a0.92 0.92 0 1 0 1.84 0a0.92 0.92 0 1 0 -1.84 0M12.11 6.03a0.6 0.6 0 1 0 1.21 0a0.6 0.6 0 1 0 -1.21 0M9.17 1.05a0.75 0.75 0 1 0 1.51 0a0.75 0.75 0 1 0 -1.51 0M13.84 8.52a0.87 0.87 0 1 0 1.75 0a0.87 0.87 0 1 0 -1.75 0M17.77 11.11a0.79 0.79 0 1 0 1.58 0a0.79 0.79 0 1 0 -1.58 0M1.41 1.12a0.94 0.94 0 1 0 1.88 0a0.94 0.94 0 1 0 -1.88 0M4.79 4.27a0.9 0.9 0 1 0 1.8 0a0.9 0.9 0 1 0 -1.8 0M14.39 2.46a0.61 0.61 0 1 0 1.22 0a0.61 0.61 0 1 0 -1.22 0M4.4 5.45a0.45 0.45 0 1 0 0.91 0a0.45 0.45 0 1 0 -0.91 0M9.85 6.09a0.65 0.65 0 1 0 1.29 0a0.65 0.65 0 1 0 -1.29 0M3.24 2.2a0.47 0.47 0 1 0 0.93 0a0.47 0.47 0 1 0 -0.93 0M16.73 14.95a0.73 0.73 0 1 0 1.46 0a0.73 0.73 0 1 0 -1.46 0M1.97 2.98a0.51 0.51 0 1 0 1.02 0a0.51 0.51 0 1 0 -1.02 0M5.74 1.15a0.59 0.59 0 1 0 1.18 0a0.59 0.59 0 1 0 -1.18 0M3.28 3.86a0.78 0.78 0 1 0 1.55 0a0.78 0.78 0 1 0 -1.55 0M8.53 9.47a0.63 0.63 0 1 0 1.26 0a0.63 0.63 0 1 0 -1.26 0M10.18 15.7a0.6 0.6 0 1 0 1.21 0a0.6 0.6 0 1 0 -1.21 0M0.76 9.62a0.64 0.64 0 1 0 1.28 0a0.64 0.64 0 1 0 -1.28 0M14.72 2.22a0.89 0.89 0 1 0 1.77 0a0.89 0.89 0 1 0 -1.77 0M-0.38 10.84a0.67 0.67 0 1 0 1.34 0a0.67 0.67 0 1 0 -1.34 0M5.51 17.78a0.8 0.8 0 1 0 1.6 0a0.8 0.8 0 1 0 -1.6 0M2.51 9.9a0.76 0.76 0 1 0 1.51 0a0.76 0.76 0 1 0 -1.51 0M-0.08 1.75a0.75 0.75 0 1 0 1.5 0a0.75 0.75 0 1 0 -1.5 0M13.93 9.25a0.66 0.66 0 1 0 1.32 0a0.66 0.66 0 1 0 -1.32 0M9.25 5.21a0.89 0.89 0 1 0 1.78 0a0.89 0.89 0 1 0 -1.78 0M18.77 9.64a0.46 0.46 0 1 0 0.92 0a0.46 0.46 0 1 0 -0.92 0M7.33 16.06a0.61 0.61 0 1 0 1.22 0a0.61 0.61 0 1 0 -1.22 0M1.31 3.71a0.81 0.81 0 1 0 1.61 0a0.81 0.81 0 1 0 -1.61 0M11.68 5.72a0.76 0.76 0 1 0 1.52 0a0.76 0.76 0 1 0 -1.52 0M14.35 19.32a0.87 0.87 0 1 0 1.73 0a0.87 0.87 0 1 0 -1.73 0M7.77 16.19a0.91 0.91 0 1 0 1.83 0a0.91 0.91 0 1 0 -1.83 0M16.64 15.01a0.74 0.74 0 1 0 1.49 0a0.74 0.74 0 1 0 -1.49 0M9.47 17.01a0.76 0.76 0 1 0 1.53 0a0.76 0.76 0 1 0 -1.53 0M13.93 4.56a0.5 0.5 0 1 0 0.99 0a0.5 0.5 0 1 0 -0.99 0M4.67 11.67a0.74 0.74 0 1 0 1.47 0a0.74 0.74 0 1 0 -1.47 0M3.05 3.77a0.93 0.93 0 1 0 1.85 0a0.93 0.93 0 1 0 -1.85 0M0.59 18.53a0.84 0.84 0 1 0 1.67 0a0.84 0.84 0 1 0 -1.67 0M10.68 19.91a0.79 0.79 0 1 0 1.58 0a0.79 0.79 0 1 0 -1.58 0M-0.52 18.78a0.66 0.66 0 1 0 1.31 0a0.66 0.66 0 1 0 -1.31 0M17.81 16.28a0.52 0.52 0 1 0 1.04 0a0.52 0.52 0 1 0 -1.04 0M-0.05 0.42a0.84 0.84 0 1 0 1.68 0a0.84 0.84 0 1 0 -1.68 0M15.32 4.56a0.51 0.51 0 1 0 1.01 0a0.51 0.51 0 1 0 -1.01 0M6.51 15.99a0.82 0.82 0 1 0 1.64 0a0.82 0.82 0 1 0 -1.64 0M16.51 19.36a0.83 0.83 0 1 0 1.65 0a0.83 0.83 0 1 0 -1.65 0M16.26 0.33a0.45 0.45 0 1 0 0.91 0a0.45 0.45 0 1 0 -0.91 0M16.64 12.37a0.61 0.61 0 1 0 1.23 0a0.61 0.61 0 1 0 -1.23 0M1.94 6.65a0.62 0.62 0 1 0 1.24 0a0.62 0.62 0 1 0 -1.24 0M9.36 9a0.55 0.55 0 1 0 1.1 0a0.55 0.55 0 1 0 -1.1 0M1.13 4.06a0.51 0.51 0 1 0 1.03 0a0.51 0.51 0 1 0 -1.03 0M1.49 8.29a0.52 0.52 0 1 0 1.03 0a0.52 0.52 0 1 0 -1.03 0M15.32 10.9a0.68 0.68 0 1 0 1.36 0a0.68 0.68 0 1 0 -1.36 0M12.32 4.7a0.46 0.46 0 1 0 0.92 0a0.46 0.46 0 1 0 -0.92 0M0.94 6.74a0.63 0.63 0 1 0 1.26 0a0.63 0.63 0 1 0 -1.26 0M4.18 6.13a0.87 0.87 0 1 0 1.73 0a0.87 0.87 0 1 0 -1.73 0M-0.47 8.98a0.64 0.64 0 1 0 1.28 0a0.64 0.64 0 1 0 -1.28 0M5.08 14.5a0.56 0.56 0 1 0 1.12 0a0.56 0.56 0 1 0 -1.12 0M-0.09 3.19a0.94 0.94 0 1 0 1.88 0a0.94 0.94 0 1 0 -1.88 0M5.98 2.34a0.94 0.94 0 1 0 1.87 0a0.94 0.94 0 1 0 -1.87 0M12.28 19.13a0.62 0.62 0 1 0 1.23 0a0.62 0.62 0 1 0 -1.23 0M15.63 0.83a0.57 0.57 0 1 0 1.14 0a0.57 0.57 0 1 0 -1.14 0M15.05 10.32a0.84 0.84 0 1 0 1.69 0a0.84 0.84 0 1 0 -1.69 0M7.23 17.53a0.49 0.49 0 1 0 0.98 0a0.49 0.49 0 1 0 -0.98 0M11.92 3.77a0.55 0.55 0 1 0 1.1 0a0.55 0.55 0 1 0 -1.1 0M16.81 8.6a0.86 0.86 0 1 0 1.71 0a0.86 0.86 0 1 0 -1.71 0M4.78 14.6a0.9 0.9 0 1 0 1.81 0a0.9 0.9 0 1 0 -1.81 0M11.75 4.69a0.78 0.78 0 1 0 1.57 0a0.78 0.78 0 1 0 -1.57 0M18.35 16.02a0.67 0.67 0 1 0 1.34 0a0.67 0.67 0 1 0 -1.34 0M7.15 1.97a0.83 0.83 0 1 0 1.67 0a0.83 0.83 0 1 0 -1.67 0M2.7 4.37a0.47 0.47 0 1 0 0.93 0a0.47 0.47 0 1 0 -0.93 0M2.59 7.67a0.69 0.69 0 1 0 1.38 0a0.69 0.69 0 1 0 -1.38 0M2.68 8.49a0.83 0.83 0 1 0 1.66 0a0.83 0.83 0 1 0 -1.66 0M1.23 2.71a0.71 0.71 0 1 0 1.42 0a0.71 0.71 0 1 0 -1.42 0M17.34 18.35a0.73 0.73 0 1 0 1.47 0a0.73 0.73 0 1 0 -1.47 0M0.89 17.47a0.95 0.95 0 1 0 1.89 0a0.95 0.95 0 1 0 -1.89 0M17.34 10.62a0.64 0.64 0 1 0 1.28 0a0.64 0.64 0 1 0 -1.28 0M10.79 15.81a0.95 0.95 0 1 0 1.89 0a0.95 0.95 0 1 0 -1.89 0M9.27 10.13a0.61 0.61 0 1 0 1.21 0a0.61 0.61 0 1 0 -1.21 0M10.21 10.87a0.59 0.59 0 1 0 1.18 0a0.59 0.59 0 1 0 -1.18 0M8.6 18.31a0.57 0.57 0 1 0 1.14 0a0.57 0.57 0 1 0 -1.14 0M4.2 6.09a0.88 0.88 0 1 0 1.76 0a0.88 0.88 0 1 0 -1.76 0M5.15 16.54a0.91 0.91 0 1 0 1.83 0a0.91 0.91 0 1 0 -1.83 0M16.97 16.09a0.55 0.55 0 1 0 1.09 0a0.55 0.55 0 1 0 -1.09 0M8.43 16.46a0.57 0.57 0 1 0 1.15 0a0.57 0.57 0 1 0 -1.15 0M11.12 17.42a0.92 0.92 0 1 0 1.83 0a0.92 0.92 0 1 0 -1.83 0M6.55 2.39a0.47 0.47 0 1 0 0.93 0a0.47 0.47 0 1 0 -0.93 0M5.74 10.94a0.59 0.59 0 1 0 1.18 0a0.59 0.59 0 1 0 -1.18 0M15.72 13a0.76 0.76 0 1 0 1.52 0a0.76 0.76 0 1 0 -1.52 0M15.76 6.57a0.77 0.77 0 1 0 1.55 0a0.77 0.77 0 1 0 -1.55 0M6.51 5.78a0.51 0.51 0 1 0 1.01 0a0.51 0.51 0 1 0 -1.01 0M15.31 18.01a0.47 0.47 0 1 0 0.93 0a0.47 0.47 0 1 0 -0.93 0M13.67 1.25a0.66 0.66 0 1 0 1.32 0a0.66 0.66 0 1 0 -1.32 0M5.66 18.06a0.67 0.67 0 1 0 1.33 0a0.67 0.67 0 1 0 -1.33 0M9.64 7.12a0.58 0.58 0 1 0 1.15 0a0.58 0.58 0 1 0 -1.15 0M4.41 1.25a0.46 0.46 0 1 0 0.91 0a0.46 0.46 0 1 0 -0.91 0M10.22 14.77a0.79 0.79 0 1 0 1.57 0a0.79 0.79 0 1 0 -1.57 0M4.7 19.77a0.49 0.49 0 1 0 0.98 0a0.49 0.49 0 1 0 -0.98 0M8.09 6.67a0.54 0.54 0 1 0 1.08 0a0.54 0.54 0 1 0 -1.08 0M18.71 14.3a0.52 0.52 0 1 0 1.03 0a0.52 0.52 0 1 0 -1.03 0M2.9 16.2a0.64 0.64 0 1 0 1.27 0a0.64 0.64 0 1 0 -1.27 0M5.42 5.93a0.61 0.61 0 1 0 1.23 0a0.61 0.61 0 1 0 -1.23 0M11.03 6.23a0.75 0.75 0 1 0 1.49 0a0.75 0.75 0 1 0 -1.49 0M0.53 10.7a0.74 0.74 0 1 0 1.48 0a0.74 0.74 0 1 0 -1.48 0M5.48 17.35a0.91 0.91 0 1 0 1.83 0a0.91 0.91 0 1 0 -1.83 0M12.61 8.23a0.53 0.53 0 1 0 1.07 0a0.53 0.53 0 1 0 -1.07 0M11.98 5.78a0.53 0.53 0 1 0 1.06 0a0.53 0.53 0 1 0 -1.06 0M9.88 4a0.77 0.77 0 1 0 1.54 0a0.77 0.77 0 1 0 -1.54 0M14.43 0.23a0.77 0.77 0 1 0 1.53 0a0.77 0.77 0 1 0 -1.53 0M3.02 6.74a0.81 0.81 0 1 0 1.62 0a0.81 0.81 0 1 0 -1.62 0M18.48 6.28a0.83 0.83 0 1 0 1.65 0a0.83 0.83 0 1 0 -1.65 0M6.4 18.81a0.54 0.54 0 1 0 1.07 0a0.54 0.54 0 1 0 -1.07 0M12.57 1.66a0.73 0.73 0 1 0 1.46 0a0.73 0.73 0 1 0 -1.46 0M14.03 18.26a0.83 0.83 0 1 0 1.67 0a0.83 0.83 0 1 0 -1.67 0M10.23 8a0.76 0.76 0 1 0 1.53 0a0.76 0.76 0 1 0 -1.53 0M12.16 12.22a0.81 0.81 0 1 0 1.61 0a0.81 0.81 0 1 0 -1.61 0M14.15 18.74a0.76 0.76 0 1 0 1.52 0a0.76 0.76 0 1 0 -1.52 0M16.88 14.81a0.64 0.64 0 1 0 1.28 0a0.64 0.64 0 1 0 -1.28 0M15.19 7.31a0.86 0.86 0 1 0 1.73 0a0.86 0.86 0 1 0 -1.73 0M16.68 17.94a0.91 0.91 0 1 0 1.81 0a0.91 0.91 0 1 0 -1.81 0M13.25 9.96a0.59 0.59 0 1 0 1.19 0a0.59 0.59 0 1 0 -1.19 0M12.15 17.85a0.63 0.63 0 1 0 1.26 0a0.63 0.63 0 1 0 -1.26 0M3.3 15.14a0.9 0.9 0 1 0 1.81 0a0.9 0.9 0 1 0 -1.81 0M3.61 2.78a0.51 0.51 0 1 0 1.01 0a0.51 0.51 0 1 0 -1.01 0M10.46 16.64a0.57 0.57 0 1 0 1.15 0a0.57 0.57 0 1 0 -1.15 0M15.27 0.93a0.55 0.55 0 1 0 1.11 0a0.55 0.55 0 1 0 -1.11 0M10.24 15.16a0.7 0.7 0 1 0 1.39 0a0.7 0.7 0 1 0 -1.39 0M13.12 7.19a0.64 0.64 0 1 0 1.28 0a0.64 0.64 0 1 0 -1.28 0M9.87 0.04a0.55 0.55 0 1 0 1.1 0a0.55 0.55 0 1 0 -1.1 0M6.47 13.13a0.55 0.55 0 1 0 1.1 0a0.55 0.55 0 1 0 -1.1 0M4.1 19.81a0.78 0.78 0 1 0 1.55 0a0.78 0.78 0 1 0 -1.55 0M7.41 15.66a0.81 0.81 0 1 0 1.61 0a0.81 0.81 0 1 0 -1.61 0M15.58 11.17a0.76 0.76 0 1 0 1.51 0a0.76 0.76 0 1 0 -1.51 0M1.29 8.57a0.65 0.65 0 1 0 1.29 0a0.65 0.65 0 1 0 -1.29 0M4.23 7.3a0.89 0.89 0 1 0 1.79 0a0.89 0.89 0 1 0 -1.79 0M3.84 2.27a0.62 0.62 0 1 0 1.23 0a0.62 0.62 0 1 0 -1.23 0M2.48 0.47a0.91 0.91 0 1 0 1.81 0a0.91 0.91 0 1 0 -1.81 0M10.24 0.53a0.72 0.72 0 1 0 1.43 0a0.72 0.72 0 1 0 -1.43 0M2.56 9.67a0.92 0.92 0 1 0 1.84 0a0.92 0.92 0 1 0 -1.84 0M18.72 7.95a0.84 0.84 0 1 0 1.68 0a0.84 0.84 0 1 0 -1.68 0M9.21 1.61a0.65 0.65 0 1 0 1.3 0a0.65 0.65 0 1 0 -1.3 0M15.39 15.56a0.81 0.81 0 1 0 1.62 0a0.81 0.81 0 1 0 -1.62 0M18.96 7.61a0.8 0.8 0 1 0 1.6 0a0.8 0.8 0 1 0 -1.6 0" fill="#000"/></pattern></defs><rect width="60" height="60" fill="url(#nz5)"/><g opacity="0.6"><path d="M49 5 H57 V18 H45 V9 Z" fill="#e0e0e0" stroke="#cdcdcd" stroke-width="0.9"/><path d="M49 5 V9 H45" fill="none" stroke="#cdcdcd" stroke-width="0.9"/><path d="M50 17 L58.5 8.5" stroke="#c8c8c8" stroke-width="4.2" stroke-linecap="round"/><path d="M50 17 L58.5 8.5" stroke="#f2f2f2" stroke-width="2.8" stroke-linecap="round"/></g><g opacity="0.55"><rect x="4" y="46" width="9" height="9" fill="#ececec"/><path d="M2 48 V44 H6 M11 44 H15 V48 M2 53 V57 H6 M11 57 H15 V53" stroke="#c8c8c8" stroke-width="0.8" fill="none"/></g></svg>
<div class="t" style="left:714.0px;width:80px;text-align:center;top:737.0px;font-size:13px;line-height:18px;color:#dcdcdc;">Leaves</div>
<div class="t" style="left:714.0px;width:80px;text-align:center;top:751.4px;font-size:13px;line-height:18px;color:#dcdcdc;">Small</div>
<svg class="b" style="left:796px;top:677px;overflow:hidden;" width="60" height="60" viewBox="0 0 60 60"><rect width="60" height="60" fill="#b4b4b4"/><defs><linearGradient id="pg1" x1="0" y1="0" x2="1" y2="1"><stop offset="0" stop-color="#c4c4c4"/><stop offset="1" stop-color="#a2a2a2"/></linearGradient></defs><rect width="60" height="60" fill="url(#pg1)"/><path d="M32 60 Q32 30 40 3" fill="none" stroke="#000" stroke-width="0.9" stroke-linecap="round" stroke-linejoin="round"/><path d="M32.07 54.8 Q21.07 49.3 10.07 53.7 Q21.07 53.7 32.07 56.3 Z" fill="#000"/><path d="M32.07 54.8 Q39.07 48.5 46.07 49.9 Q39.07 53.4 32.07 56.3 Z" fill="#000"/><path d="M32.27 49.6 Q21.87 44.4 11.47 48.56 Q21.87 48.56 32.27 51.1 Z" fill="#000"/><path d="M32.27 49.6 Q38.97 43.57 45.67 44.91 Q38.97 48.26 32.27 51.1 Z" fill="#000"/><path d="M32.6 44.4 Q22.8 39.5 13 43.42 Q22.8 43.42 32.6 45.9 Z" fill="#000"/><path d="M32.6 44.4 Q39 38.64 45.4 39.92 Q39 43.12 32.6 45.9 Z" fill="#000"/><path d="M33.07 39.2 Q23.87 34.6 14.67 38.28 Q23.87 38.28 33.07 40.7 Z" fill="#000"/><path d="M33.07 39.2 Q39.17 33.71 45.27 34.93 Q39.17 37.98 33.07 40.7 Z" fill="#000"/><path d="M33.66 34 Q25.06 29.7 16.46 33.14 Q25.06 33.14 33.66 35.5 Z" fill="#000"/><path d="M33.66 34 Q39.46 28.78 45.26 29.94 Q39.46 32.84 33.66 35.5 Z" fill="#000"/><path d="M34.4 28.8 Q26.4 24.8 18.4 28 Q26.4 28 34.4 30.3 Z" fill="#000"/><path d="M34.4 28.8 Q39.9 23.85 45.4 24.95 Q39.9 27.7 34.4 30.3 Z" fill="#000"/><path d="M35.26 23.6 Q27.86 19.9 20.46 22.86 Q27.86 22.86 35.26 25.1 Z" fill="#000"/><path d="M35.26 23.6 Q40.46 18.92 45.66 19.96 Q40.46 22.56 35.26 25.1 Z" fill="#000"/><path d="M36.26 18.4 Q29.46 15 22.66 17.72 Q29.46 17.72 36.26 19.9 Z" fill="#000"/><path d="M36.26 18.4 Q41.16 13.99 46.06 14.97 Q41.16 17.42 36.26 19.9 Z" fill="#000"/><path d="M37.39 13.2 Q31.19 10.1 24.99 12.58 Q31.19 12.58 37.39 14.7 Z" fill="#000"/><path d="M37.39 13.2 Q41.99 9.06 46.59 9.98 Q41.99 12.28 37.39 14.7 Z" fill="#000"/><path d="M38.66 8 Q33.06 5.2 27.46 7.44 Q33.06 7.44 38.66 9.5 Z" fill="#000"/><path d="M38.66 8 Q42.96 4.13 47.26 4.99 Q42.96 7.14 38.66 9.5 Z" fill="#000"/><g opacity="0.6"><path d="M49 5 H57 V18 H45 V9 Z" fill="#e0e0e0" stroke="#cdcdcd" stroke-width="0.9"/><path d="M49 5 V9 H45" fill="none" stroke="#cdcdcd" stroke-width="0.9"/><path d="M50 17 L58.5 8.5" stroke="#c8c8c8" stroke-width="4.2" stroke-linecap="round"/><path d="M50 17 L58.5 8.5" stroke="#f2f2f2" stroke-width="2.8" stroke-linecap="round"/></g><g opacity="0.55"><rect x="4" y="46" width="9" height="9" fill="#ececec"/><path d="M2 48 V44 H6 M11 44 H15 V48 M2 53 V57 H6 M11 57 H15 V53" stroke="#c8c8c8" stroke-width="0.8" fill="none"/></g></svg>
<div class="t" style="left:786.0px;width:80px;text-align:center;top:743.8px;font-size:13px;line-height:18px;color:#dcdcdc;">Plant 1</div>
<svg class="b" style="left:289px;top:780px;overflow:hidden;" width="60" height="60" viewBox="0 0 60 60"><rect width="60" height="60" fill="#b0b0b0"/><defs><linearGradient id="pg2" x1="0" y1="0" x2="1" y2="1"><stop offset="0" stop-color="#a8a8a8"/><stop offset="1" stop-color="#c6c6c6"/></linearGradient></defs><rect width="60" height="60" fill="url(#pg2)"/><path d="M30 60 Q30 30 34 2" fill="none" stroke="#000" stroke-width="0.9" stroke-linecap="round" stroke-linejoin="round"/><ellipse cx="22.02" cy="52" rx="9" ry="2.6" fill="#000" transform="rotate(30 22.02 52)"/><ellipse cx="37.02" cy="49" rx="8" ry="2.4" fill="#000" transform="rotate(-40 37.02 49)"/><ellipse cx="22.16" cy="44.5" rx="9" ry="2.6" fill="#000" transform="rotate(30 22.16 44.5)"/><ellipse cx="37.16" cy="41.5" rx="8" ry="2.4" fill="#000" transform="rotate(-40 37.16 41.5)"/><ellipse cx="22.43" cy="37" rx="9" ry="2.6" fill="#000" transform="rotate(30 22.43 37)"/><ellipse cx="37.43" cy="34" rx="8" ry="2.4" fill="#000" transform="rotate(-40 37.43 34)"/><ellipse cx="22.84" cy="29.5" rx="9" ry="2.6" fill="#000" transform="rotate(30 22.84 29.5)"/><ellipse cx="37.84" cy="26.5" rx="8" ry="2.4" fill="#000" transform="rotate(-40 37.84 26.5)"/><ellipse cx="23.37" cy="22" rx="9" ry="2.6" fill="#000" transform="rotate(30 23.37 22)"/><ellipse cx="38.37" cy="19" rx="8" ry="2.4" fill="#000" transform="rotate(-40 38.37 19)"/><ellipse cx="24.05" cy="14.5" rx="9" ry="2.6" fill="#000" transform="rotate(30 24.05 14.5)"/><ellipse cx="39.05" cy="11.5" rx="8" ry="2.4" fill="#000" transform="rotate(-40 39.05 11.5)"/><ellipse cx="24.85" cy="7" rx="9" ry="2.6" fill="#000" transform="rotate(30 24.85 7)"/><ellipse cx="39.85" cy="4" rx="8" ry="2.4" fill="#000" transform="rotate(-40 39.85 4)"/><g opacity="0.6"><path d="M49 5 H57 V18 H45 V9 Z" fill="#e0e0e0" stroke="#cdcdcd" stroke-width="0.9"/><path d="M49 5 V9 H45" fill="none" stroke="#cdcdcd" stroke-width="0.9"/><path d="M50 17 L58.5 8.5" stroke="#c8c8c8" stroke-width="4.2" stroke-linecap="round"/><path d="M50 17 L58.5 8.5" stroke="#f2f2f2" stroke-width="2.8" stroke-linecap="round"/></g><g opacity="0.55"><rect x="4" y="46" width="9" height="9" fill="#ececec"/><path d="M2 48 V44 H6 M11 44 H15 V48 M2 53 V57 H6 M11 57 H15 V53" stroke="#c8c8c8" stroke-width="0.8" fill="none"/></g></svg>
<div class="t" style="left:279.0px;width:80px;text-align:center;top:846.8px;font-size:13px;line-height:18px;color:#dcdcdc;">Plant 2</div>
<svg class="b" style="left:361px;top:780px;overflow:hidden;" width="60" height="60" viewBox="0 0 60 60"><rect width="60" height="60" fill="#d9d9d9"/><circle cx="6.0" cy="12.85" r="2.8499999999999996" fill="#000"/><rect x="1.25" y="16.175" width="9.5" height="16.15" rx="1.9" fill="#000"/><path d="M3.625 30.9 L3.1500000000000004 48.0 M8.375 30.9 L8.85 48.0" fill="none" stroke="#000" stroke-width="3.8" stroke-linecap="round" stroke-linejoin="round"/><path d="M1.7250000000000005 17.6 L0.3000000000000007 29.95 M10.274999999999999 17.6 L11.7 29.95" fill="none" stroke="#000" stroke-width="2.4699999999999998" stroke-linecap="round" stroke-linejoin="round"/><circle cx="13.2" cy="14.35" r="2.8499999999999996" fill="#000"/><rect x="8.45" y="17.675" width="9.5" height="16.15" rx="1.9" fill="#000"/><path d="M10.825 32.4 L10.35 49.5 M15.575 32.4 L16.049999999999997 49.5" fill="none" stroke="#000" stroke-width="3.8" stroke-linecap="round" stroke-linejoin="round"/><path d="M8.925 19.1 L7.5 31.45 M17.474999999999998 19.1 L18.9 31.45" fill="none" stroke="#000" stroke-width="2.4699999999999998" stroke-linecap="round" stroke-linejoin="round"/><circle cx="20.4" cy="15.85" r="2.8499999999999996" fill="#000"/><rect x="15.649999999999999" y="19.175" width="9.5" height="16.15" rx="1.9" fill="#000"/><path d="M18.025 33.9 L17.549999999999997 51.0 M22.775 33.9 L23.25 51.0" fill="none" stroke="#000" stroke-width="3.8" stroke-linecap="round" stroke-linejoin="round"/><path d="M16.125 20.6 L14.7 32.95 M24.674999999999997 20.6 L26.099999999999998 32.95" fill="none" stroke="#000" stroke-width="2.4699999999999998" stroke-linecap="round" stroke-linejoin="round"/><circle cx="27.6" cy="12.85" r="2.8499999999999996" fill="#000"/><rect x="22.85" y="16.175" width="9.5" height="16.15" rx="1.9" fill="#000"/><path d="M25.225 30.9 L24.75 48.0 M29.975 30.9 L30.450000000000003 48.0" fill="none" stroke="#000" stroke-width="3.8" stroke-linecap="round" stroke-linejoin="round"/><path d="M23.325000000000003 17.6 L21.900000000000002 29.95 M31.875 17.6 L33.3 29.95" fill="none" stroke="#000" stroke-width="2.4699999999999998" stroke-linecap="round" stroke-linejoin="round"/><circle cx="34.8" cy="14.35" r="2.8499999999999996" fill="#000"/><rect x="30.049999999999997" y="17.675" width="9.5" height="16.15" rx="1.9" fill="#000"/><path d="M32.425 32.4 L31.949999999999996 49.5 M37.175 32.4 L37.65 49.5" fill="none" stroke="#000" stroke-width="3.8" stroke-linecap="round" stroke-linejoin="round"/><path d="M30.525 19.1 L29.099999999999998 31.45 M39.074999999999996 19.1 L40.5 31.45" fill="none" stroke="#000" stroke-width="2.4699999999999998" stroke-linecap="round" stroke-linejoin="round"/><circle cx="42.0" cy="15.85" r="2.8499999999999996" fill="#000"/><rect x="37.25" y="19.175" width="9.5" height="16.15" rx="1.9" fill="#000"/><path d="M39.625 33.9 L39.15 51.0 M44.375 33.9 L44.85 51.0" fill="none" stroke="#000" stroke-width="3.8" stroke-linecap="round" stroke-linejoin="round"/><path d="M37.725 20.6 L36.3 32.95 M46.275 20.6 L47.7 32.95" fill="none" stroke="#000" stroke-width="2.4699999999999998" stroke-linecap="round" stroke-linejoin="round"/><circle cx="49.2" cy="12.85" r="2.8499999999999996" fill="#000"/><rect x="44.45" y="16.175" width="9.5" height="16.15" rx="1.9" fill="#000"/><path d="M46.825 30.9 L46.35 48.0 M51.575 30.9 L52.050000000000004 48.0" fill="none" stroke="#000" stroke-width="3.8" stroke-linecap="round" stroke-linejoin="round"/><path d="M44.925000000000004 17.6 L43.5 29.95 M53.475 17.6 L54.900000000000006 29.95" fill="none" stroke="#000" stroke-width="2.4699999999999998" stroke-linecap="round" stroke-linejoin="round"/><circle cx="56.4" cy="14.35" r="2.8499999999999996" fill="#000"/><rect x="51.65" y="17.675" width="9.5" height="16.15" rx="1.9" fill="#000"/><path d="M54.025 32.4 L53.55 49.5 M58.775 32.4 L59.25 49.5" fill="none" stroke="#000" stroke-width="3.8" stroke-linecap="round" stroke-linejoin="round"/><path d="M52.125 19.1 L50.7 31.45 M60.675 19.1 L62.099999999999994 31.45" fill="none" stroke="#000" stroke-width="2.4699999999999998" stroke-linecap="round" stroke-linejoin="round"/><g opacity="0.6"><path d="M49 5 H57 V18 H45 V9 Z" fill="#e0e0e0" stroke="#cdcdcd" stroke-width="0.9"/><path d="M49 5 V9 H45" fill="none" stroke="#cdcdcd" stroke-width="0.9"/><path d="M50 17 L58.5 8.5" stroke="#c8c8c8" stroke-width="4.2" stroke-linecap="round"/><path d="M50 17 L58.5 8.5" stroke="#f2f2f2" stroke-width="2.8" stroke-linecap="round"/></g><g opacity="0.55"><rect x="4" y="46" width="9" height="9" fill="#ececec"/><path d="M2 48 V44 H6 M11 44 H15 V48 M2 53 V57 H6 M11 57 H15 V53" stroke="#c8c8c8" stroke-width="0.8" fill="none"/></g></svg>
<div class="t" style="left:351.0px;width:80px;text-align:center;top:840.0px;font-size:13px;line-height:18px;color:#dcdcdc;">Lots of</div>
<div class="t" style="left:351.0px;width:80px;text-align:center;top:854.4px;font-size:13px;line-height:18px;color:#dcdcdc;">People</div>
<svg class="b" style="left:434px;top:780px;overflow:hidden;" width="60" height="60" viewBox="0 0 60 60"><rect width="60" height="60" fill="#d9d9d9"/><circle cx="30" cy="6.050000000000001" r="4.050000000000001" fill="#000"/><rect x="23.25" y="10.775" width="13.5" height="22.950000000000003" rx="2.7" fill="#000"/><path d="M26.625 31.700000000000003 L32.7 56.0 M33.375 31.700000000000003 L27.3 56.0" fill="none" stroke="#000" stroke-width="4.7250000000000005" stroke-linecap="round" stroke-linejoin="round"/><path d="M23.925 12.8 L21.9 30.35 M36.075 12.8 L38.1 30.35" fill="none" stroke="#000" stroke-width="3.5100000000000002" stroke-linecap="round" stroke-linejoin="round"/><g opacity="0.6"><path d="M49 5 H57 V18 H45 V9 Z" fill="#e0e0e0" stroke="#cdcdcd" stroke-width="0.9"/><path d="M49 5 V9 H45" fill="none" stroke="#cdcdcd" stroke-width="0.9"/><path d="M50 17 L58.5 8.5" stroke="#c8c8c8" stroke-width="4.2" stroke-linecap="round"/><path d="M50 17 L58.5 8.5" stroke="#f2f2f2" stroke-width="2.8" stroke-linecap="round"/></g><g opacity="0.55"><rect x="4" y="46" width="9" height="9" fill="#ececec"/><path d="M2 48 V44 H6 M11 44 H15 V48 M2 53 V57 H6 M11 57 H15 V53" stroke="#c8c8c8" stroke-width="0.8" fill="none"/></g></svg>
<div class="t" style="left:424.0px;width:80px;text-align:center;top:846.8px;font-size:13px;line-height:18px;color:#dcdcdc;">Person 1</div>
<svg class="b" style="left:506px;top:780px;overflow:hidden;" width="60" height="60" viewBox="0 0 60 60"><rect width="60" height="60" fill="#d9d9d9"/><circle cx="31" cy="6.050000000000001" r="4.050000000000001" fill="#000"/><rect x="24.25" y="10.775" width="13.5" height="22.950000000000003" rx="2.7" fill="#000"/><path d="M28.3 31.700000000000003 L24.25 56.0 M33.7 31.700000000000003 L39.1 54.650000000000006" fill="none" stroke="#000" stroke-width="4.7250000000000005" stroke-linecap="round" stroke-linejoin="round"/><path d="M24.925 12.8 L20.2 22.25 L14.799999999999997 20.900000000000002 M37.075 12.8 L39.1 30.35" fill="none" stroke="#000" stroke-width="3.5100000000000002" stroke-linecap="round" stroke-linejoin="round"/><g opacity="0.6"><path d="M49 5 H57 V18 H45 V9 Z" fill="#e0e0e0" stroke="#cdcdcd" stroke-width="0.9"/><path d="M49 5 V9 H45" fill="none" stroke="#cdcdcd" stroke-width="0.9"/><path d="M50 17 L58.5 8.5" stroke="#c8c8c8" stroke-width="4.2" stroke-linecap="round"/><path d="M50 17 L58.5 8.5" stroke="#f2f2f2" stroke-width="2.8" stroke-linecap="round"/></g><g opacity="0.55"><rect x="4" y="46" width="9" height="9" fill="#ececec"/><path d="M2 48 V44 H6 M11 44 H15 V48 M2 53 V57 H6 M11 57 H15 V53" stroke="#c8c8c8" stroke-width="0.8" fill="none"/></g></svg>
<div class="t" style="left:496.0px;width:80px;text-align:center;top:846.8px;font-size:13px;line-height:18px;color:#dcdcdc;">Person 2</div>
<svg class="b" style="left:579px;top:780px;overflow:hidden;" width="60" height="60" viewBox="0 0 60 60"><rect width="60" height="60" fill="#d9d9d9"/><circle cx="28" cy="11.6" r="3.5999999999999996" fill="#000"/><rect x="22.0" y="15.8" width="12.0" height="20.4" rx="2.4" fill="#000"/><path d="M25.0 34.4 L24.4 56.0 M31.0 34.4 L31.6 56.0" fill="none" stroke="#000" stroke-width="4.8" stroke-linecap="round" stroke-linejoin="round"/><path d="M22.6 17.6 L20.8 33.2 M33.4 17.6 L35.2 33.2" fill="none" stroke="#000" stroke-width="3.12" stroke-linecap="round" stroke-linejoin="round"/><g opacity="0.6"><path d="M49 5 H57 V18 H45 V9 Z" fill="#e0e0e0" stroke="#cdcdcd" stroke-width="0.9"/><path d="M49 5 V9 H45" fill="none" stroke="#cdcdcd" stroke-width="0.9"/><path d="M50 17 L58.5 8.5" stroke="#c8c8c8" stroke-width="4.2" stroke-linecap="round"/><path d="M50 17 L58.5 8.5" stroke="#f2f2f2" stroke-width="2.8" stroke-linecap="round"/></g><g opacity="0.55"><rect x="4" y="46" width="9" height="9" fill="#ececec"/><path d="M2 48 V44 H6 M11 44 H15 V48 M2 53 V57 H6 M11 57 H15 V53" stroke="#c8c8c8" stroke-width="0.8" fill="none"/></g></svg>
<div class="t" style="left:569.0px;width:80px;text-align:center;top:846.8px;font-size:13px;line-height:18px;color:#dcdcdc;">Person 3</div>
<svg class="b" style="left:651px;top:780px;overflow:hidden;" width="60" height="60" viewBox="0 0 60 60"><rect width="60" height="60" fill="#d9d9d9"/><circle cx="24" cy="6.199999999999999" r="4.199999999999999" fill="#000"/><rect x="17.0" y="11.1" width="14.0" height="23.799999999999997" rx="2.8" fill="#000"/><path d="M20.5 32.8 L19.8 58.0 M27.5 32.8 L28.2 58.0" fill="none" stroke="#000" stroke-width="5.6" stroke-linecap="round" stroke-linejoin="round"/><path d="M17.7 13.2 L15.600000000000001 31.4 M30.3 13.2 L32.4 31.4" fill="none" stroke="#000" stroke-width="3.6399999999999997" stroke-linecap="round" stroke-linejoin="round"/><circle cx="36" cy="9.75" r="3.75" fill="#000"/><rect x="29.75" y="14.125" width="12.5" height="21.25" rx="2.5" fill="#000"/><path d="M32.875 33.5 L32.25 56.0 M39.125 33.5 L39.75 56.0" fill="none" stroke="#000" stroke-width="5.0" stroke-linecap="round" stroke-linejoin="round"/><path d="M30.375 16.0 L28.5 32.25 M41.625 16.0 L43.5 32.25" fill="none" stroke="#000" stroke-width="3.25" stroke-linecap="round" stroke-linejoin="round"/><g opacity="0.6"><path d="M49 5 H57 V18 H45 V9 Z" fill="#e0e0e0" stroke="#cdcdcd" stroke-width="0.9"/><path d="M49 5 V9 H45" fill="none" stroke="#cdcdcd" stroke-width="0.9"/><path d="M50 17 L58.5 8.5" stroke="#c8c8c8" stroke-width="4.2" stroke-linecap="round"/><path d="M50 17 L58.5 8.5" stroke="#f2f2f2" stroke-width="2.8" stroke-linecap="round"/></g><g opacity="0.55"><rect x="4" y="46" width="9" height="9" fill="#ececec"/><path d="M2 48 V44 H6 M11 44 H15 V48 M2 53 V57 H6 M11 57 H15 V53" stroke="#c8c8c8" stroke-width="0.8" fill="none"/></g></svg>
<div class="t" style="left:641.0px;width:80px;text-align:center;top:846.8px;font-size:13px;line-height:18px;color:#dcdcdc;">Person 4</div>
<svg class="b" style="left:724px;top:780px;overflow:hidden;" width="60" height="60" viewBox="0 0 60 60"><rect width="60" height="60" fill="#d9d9d9"/><circle cx="30" cy="11.6" r="3.5999999999999996" fill="#000"/><rect x="24.0" y="15.8" width="12.0" height="20.4" rx="2.4" fill="#000"/><path d="M27.0 34.4 L26.4 56.0 M33.0 34.4 L33.6 56.0" fill="none" stroke="#000" stroke-width="4.8" stroke-linecap="round" stroke-linejoin="round"/><path d="M24.6 17.6 L19.200000000000003 15.2 L19.200000000000003 8 M35.4 17.6 L40.8 15.2 L40.8 8" fill="none" stroke="#000" stroke-width="3.12" stroke-linecap="round" stroke-linejoin="round"/><g opacity="0.6"><path d="M49 5 H57 V18 H45 V9 Z" fill="#e0e0e0" stroke="#cdcdcd" stroke-width="0.9"/><path d="M49 5 V9 H45" fill="none" stroke="#cdcdcd" stroke-width="0.9"/><path d="M50 17 L58.5 8.5" stroke="#c8c8c8" stroke-width="4.2" stroke-linecap="round"/><path d="M50 17 L58.5 8.5" stroke="#f2f2f2" stroke-width="2.8" stroke-linecap="round"/></g><g opacity="0.55"><rect x="4" y="46" width="9" height="9" fill="#ececec"/><path d="M2 48 V44 H6 M11 44 H15 V48 M2 53 V57 H6 M11 57 H15 V53" stroke="#c8c8c8" stroke-width="0.8" fill="none"/></g></svg>
<div class="t" style="left:714.0px;width:80px;text-align:center;top:846.8px;font-size:13px;line-height:18px;color:#dcdcdc;">Person 5</div>
<svg class="b" style="left:796px;top:780px;overflow:hidden;" width="60" height="60" viewBox="0 0 60 60"><rect width="60" height="60" fill="#d9d9d9"/><circle cx="30" cy="11.6" r="3.5999999999999996" fill="#000"/><rect x="24.0" y="15.8" width="12.0" height="20.4" rx="2.4" fill="#000"/><path d="M27.0 34.4 L26.4 56.0 M33.0 34.4 L33.6 56.0" fill="none" stroke="#000" stroke-width="4.8" stroke-linecap="round" stroke-linejoin="round"/><path d="M24.6 17.6 L22.8 33.2 M35.4 17.6 L37.2 33.2" fill="none" stroke="#000" stroke-width="3.12" stroke-linecap="round" stroke-linejoin="round"/><g opacity="0.6"><path d="M49 5 H57 V18 H45 V9 Z" fill="#e0e0e0" stroke="#cdcdcd" stroke-width="0.9"/><path d="M49 5 V9 H45" fill="none" stroke="#cdcdcd" stroke-width="0.9"/><path d="M50 17 L58.5 8.5" stroke="#c8c8c8" stroke-width="4.2" stroke-linecap="round"/><path d="M50 17 L58.5 8.5" stroke="#f2f2f2" stroke-width="2.8" stroke-linecap="round"/></g><g opacity="0.55"><rect x="4" y="46" width="9" height="9" fill="#ececec"/><path d="M2 48 V44 H6 M11 44 H15 V48 M2 53 V57 H6 M11 57 H15 V53" stroke="#c8c8c8" stroke-width="0.8" fill="none"/></g></svg>
<div class="t" style="left:786.0px;width:80px;text-align:center;top:846.8px;font-size:13px;line-height:18px;color:#dcdcdc;">Person 6</div>
<div class="b" style="left:873px;top:58px;width:6px;height:800px;background:#313131;border-radius:3px;"></div>
<div class="b" style="left:884px;top:28px;width:355px;height:848px;background:#1d1d1d;border-radius:8px;"></div>
<div class="b" style="left:893px;top:32px;width:36px;height:21px;background:#232323;border-radius:5px;border:1px solid #2a2a2a;box-sizing:border-box;"></div>
<svg class="b" style="left:896px;top:33px;" width="34" height="20" viewBox="0 0 34 20"><circle cx="9.5" cy="10" r="7.5" fill="none" stroke="#e6e6e6" stroke-width="1.3"/><path d="M5 8 Q6 5 8 4.5" stroke="#e6e6e6" stroke-width="1.4" fill="none"/><circle cx="10" cy="3.8" r="0.9" fill="#e6e6e6"/><path d="M20 9 l2.5 2.5 l2.5 -2.5" fill="none" stroke="#e0e0e0" stroke-width="1.2"/></svg>
<div class="b" style="left:934px;top:32px;width:100px;height:21px;background:#232323;border-radius:5px;border:1px solid #2a2a2a;box-sizing:border-box;"></div>
<svg class="b" style="left:939px;top:33px;" width="18" height="18" viewBox="0 0 18 18"><path d="M1 5 V1 H5 M13 1 H17 V5 M1 13 V17 H5 M13 17 H17 V13" fill="none" stroke="#cfcfcf" stroke-width="1.2"/><rect x="4.5" y="4.5" width="9" height="9" fill="#e6e6e6"/></svg>
<div class="t" style="left:963px;top:33.0px;font-size:13px;line-height:18px;color:#e0e0e0;">Object</div>
<svg class="b" style="left:1020px;top:37px;" width="12" height="12" viewBox="0 0 12 12"><path d="M2 4 l4 4 l4 -4" fill="none" stroke="#e0e0e0" stroke-width="1.3"/></svg>
<div class="t" style="left:1047px;top:33.0px;font-size:13px;line-height:18px;color:#e0e0e0;">View</div>
<div class="t" style="left:1092px;top:33.0px;font-size:13px;line-height:18px;color:#e0e0e0;">Select</div>
<div class="t" style="left:1146px;top:33.0px;font-size:13px;line-height:18px;color:#e0e0e0;">Add</div>
<div class="t" style="left:1186px;top:33.0px;font-size:13px;line-height:18px;color:#e0e0e0;">Node</div>
<div class="b" style="left:1233px;top:35px;width:6px;height:18px;background:#4772b3;border-radius:3px;"></div>
<svg class="b" style="left:904px;top:72px;" width="18" height="18" viewBox="0 0 18 18"><path d="M1 5 V1 H5 M13 1 H17 V5 M1 13 V17 H5 M13 17 H17 V13" fill="none" stroke="#cfcfcf" stroke-width="1.2"/><rect x="4.5" y="4.5" width="9" height="9" fill="#e6e6e6"/></svg>
<div class="t" style="left:931px;top:71.0px;font-size:13px;line-height:18px;color:#e0e0e0;">Trees 3</div>
<svg class="b" style="left:990px;top:74px;" width="12" height="12" viewBox="0 0 12 12"><path d="M3 1 l5 5 l-5 5" fill="none" stroke="#d0d0d0" stroke-width="1.3"/></svg>
<svg class="b" style="left:1008px;top:70px;" width="20" height="20" viewBox="0 0 18 18"><path d="M5.5 13 Q3.5 9 5.5 6.5 L16 2.5 L13.5 12.5 Q10 15.5 5.5 13 Z" fill="none" stroke="#dcdcdc" stroke-width="1.3" stroke-linejoin="round"/><path d="M2 17 L4 15 M5 14 L7 12 M8 11 L10.5 8.5" stroke="#dcdcdc" stroke-width="1.2"/></svg>
<div class="t" style="left:1036px;top:71.0px;font-size:13px;line-height:18px;color:#e0e0e0;">Tree 1 Gobo.010</div>
<div class="b" style="left:1233px;top:85px;width:3px;height:774px;background:#2b2b2b;border-radius:2px;"></div>
<div class="b" style="left:894px;top:871px;width:198px;height:3px;background:#2e2e2e;border-radius:2px;"></div>
<div class="b" style="left:872px;top:78px;width:8px;height:22px;background:#262626;border-radius:0px;border-radius:4px 0 0 4px;"></div>
<div class="b" style="left:884px;top:78px;width:9px;height:22px;background:#222222;border-radius:0px;border-radius:0 4px 4px 0;"></div>
<svg class="b" style="left:872px;top:82px;" width="22" height="14" viewBox="0 0 22 14"><path d="M7 3 l-3 4 l3 4" fill="none" stroke="#8a8a8a" stroke-width="1.2"/><path d="M15 3 l3 4 l-3 4" fill="none" stroke="#b0b0b0" stroke-width="1.2"/></svg>
<div class="b" style="left:1228px;top:78px;width:11px;height:22px;background:#222;border-radius:3px;"></div>
<svg class="b" style="left:1228px;top:82px;" width="12" height="14" viewBox="0 0 12 14"><path d="M8 3 l-3.5 4 l3.5 4" fill="none" stroke="#a8a8a8" stroke-width="1.3"/></svg>
<div class="b" style="left:894px;top:272px;width:333px;height:418px;background:#303030;border-radius:7px;box-shadow:0 2px 6px rgba(0,0,0,0.45);"></div>
<div class="b" style="left:894px;top:272px;width:333px;height:31px;background:#3b4a27;border-radius:0px;border-radius:7px 7px 0 0;"></div>
<svg class="b" style="left:908px;top:278px;" width="20" height="18" viewBox="0 0 20 18"><path d="M3 5 L9.5 11.5 L16 5" fill="none" stroke="#e6e6e6" stroke-width="1.6"/></svg>
<div class="t" style="left:931px;top:274.5px;font-size:18px;line-height:25px;color:#e6e6e6;">Trees 3</div>
<svg class="b" style="left:1189px;top:274px;" width="30" height="28" viewBox="0 0 30 28"><rect x="5.5" y="1.5" width="12" height="9" rx="2.5" fill="#e6e6e6"/><rect x="6.5" y="7.5" width="10" height="1.6" fill="#3b4a27"/><rect x="2" y="14.5" width="12" height="9" rx="2.5" fill="#e6e6e6"/><rect x="3" y="20.5" width="10" height="1.6" fill="#3b4a27"/><path d="M19 4 Q22.5 4 22.5 8 V15 Q22.5 19 18.5 19 H16" fill="none" stroke="#dcdcdc" stroke-width="1.2"/><path d="M19 2.5 L21 4 L19 5.5 Z M16 17.5 L14.5 19 L16 20.5 Z" fill="#dcdcdc"/></svg>
<div class="t" style="right:391px;top:312.1px;font-size:18px;line-height:25px;color:#e6e6e6;">Emission</div>
<svg class="b" style="left:1220px;top:318px;overflow:hidden;" width="19" height="40" viewBox="0 0 19 40"><path d="M6 6 Q12 16 18.5 31" stroke="#56b456" stroke-width="3.6" fill="none"/></svg>
<svg class="b" style="left:1217px;top:315px;" width="18" height="18" viewBox="0 0 18 18"><circle cx="9" cy="9" r="7.3" fill="#63c763" stroke="#141414" stroke-width="1.1"/></svg>
<div class="b" style="left:909px;top:347px;width:301px;height:30px;background:#262626;border-radius:5px;"></div>
<div class="b" style="left:958px;top:347px;width:222px;height:30px;background:#1d1d1d;border-radius:0px;"></div>
<div class="b" style="left:1180px;top:347px;width:30px;height:30px;background:#4a4a4a;border-radius:0px;border-radius:0 5px 5px 0;"></div>
<svg class="b" style="left:916px;top:350px;" width="44" height="26" viewBox="0 0 44 26"><circle cx="12" cy="12" r="10.5" fill="#e8e8e8"/><path d="M12 1.5 A10.5 10.5 0 0 0 1.5 12 H12 Z" fill="#262626"/><path d="M12 12 H22.5 A10.5 10.5 0 0 1 12 22.5 Z" fill="#262626"/><circle cx="12" cy="12" r="10.5" fill="none" stroke="#e8e8e8" stroke-width="1.6"/><path d="M29 10 l3.5 3.5 l3.5 -3.5" fill="none" stroke="#e0e0e0" stroke-width="1.5"/></svg>
<div class="t" style="left:970px;top:349.5px;font-size:18px;line-height:25px;color:#e6e6e6;">Trees 3</div>
<svg class="b" style="left:1183px;top:350px;" width="24" height="24" viewBox="0 0 24 24"><path d="M12 3 Q16 5.5 21 5.5 V12 Q21 18 12 21.5 Q3 18 3 12 V5.5 Q8 5.5 12 3 Z" fill="none" stroke="#9a9a9a" stroke-width="1.4"/></svg>
<svg class="b" style="left:884px;top:390px;" width="18" height="18" viewBox="0 0 18 18"><circle cx="9" cy="9" r="7.2" fill="#c7c729" stroke="#1d1d1d" stroke-width="0.8"/></svg>
<svg class="b" style="left:884px;top:425px;" width="18" height="18" viewBox="0 0 18 18"><circle cx="9" cy="9" r="7.2" fill="#a1a1a1" stroke="#1d1d1d" stroke-width="0.8"/></svg>
<svg class="b" style="left:884px;top:460px;" width="18" height="18" viewBox="0 0 18 18"><circle cx="9" cy="9" r="7.2" fill="#a1a1a1" stroke="#1d1d1d" stroke-width="0.8"/></svg>
<svg class="b" style="left:884px;top:494px;" width="18" height="18" viewBox="0 0 18 18"><circle cx="9" cy="9" r="7.2" fill="#6363c7" stroke="#1d1d1d" stroke-width="0.8"/></svg>
<svg class="b" style="left:884px;top:625px;" width="18" height="18" viewBox="0 0 18 18"><circle cx="9" cy="9" r="7.2" fill="#a1a1a1" stroke="#1d1d1d" stroke-width="0.8"/></svg>
<svg class="b" style="left:884px;top:660px;" width="18" height="18" viewBox="0 0 18 18"><circle cx="9" cy="9" r="7.2" fill="#a1a1a1" stroke="#1d1d1d" stroke-width="0.8"/></svg>
<div class="t" style="left:909px;top:387.5px;font-size:18px;line-height:25px;color:#e6e6e6;">Light Color</div>
<div class="b" style="left:1037px;top:385px;width:173px;height:29px;background:#ffffff;border-radius:5px;"></div>
<div class="b" style="left:909px;top:419px;width:301px;height:30px;background:#545454;border-radius:0px;border-radius:5px;"></div>
<div class="t" style="left:934px;top:421.5px;font-size:18px;line-height:25px;color:#e6e6e6;">Light Brightness</div>
<div class="t" style="right:411px;top:421.5px;font-size:18px;line-height:25px;color:#e6e6e6;">1.000</div>
<div class="b" style="left:909px;top:454px;width:301px;height:30px;background:#545454;border-radius:0px;border-radius:5px;"></div>
<div class="t" style="left:934px;top:456.5px;font-size:18px;line-height:25px;color:#e6e6e6;">Gobo Scale</div>
<div class="t" style="right:411px;top:456.5px;font-size:18px;line-height:25px;color:#e6e6e6;">1.000</div>
<div class="t" style="left:909px;top:490.5px;font-size:18px;line-height:25px;color:#e6e6e6;">Gobo Location</div>
<div class="b" style="left:909px;top:522px;width:301px;height:31px;background:#545454;border-radius:0px;border-radius:5px 5px 0 0;"></div>
<div class="t" style="left:934px;top:525.0px;font-size:18px;line-height:25px;color:#e6e6e6;">X</div>
<div class="t" style="right:411px;top:525.0px;font-size:18px;line-height:25px;color:#e6e6e6;">0.5 m</div>
<div class="b" style="left:909px;top:553px;width:301px;height:31px;background:#545454;border-radius:0px;border-radius:0;"></div>
<div class="t" style="left:934px;top:556.0px;font-size:18px;line-height:25px;color:#e6e6e6;">Y</div>
<div class="t" style="right:411px;top:556.0px;font-size:18px;line-height:25px;color:#e6e6e6;">0.5 m</div>
<div class="b" style="left:909px;top:584px;width:301px;height:30px;background:#545454;border-radius:0px;border-radius:0 0 5px 5px;"></div>
<div class="t" style="left:934px;top:586.5px;font-size:18px;line-height:25px;color:#e6e6e6;">Z</div>
<div class="t" style="right:411px;top:586.5px;font-size:18px;line-height:25px;color:#e6e6e6;">0 m</div>
<div class="b" style="left:909px;top:552px;width:301px;height:1px;background:#474747;border-radius:0px;"></div>
<div class="b" style="left:909px;top:583px;width:301px;height:1px;background:#474747;border-radius:0px;"></div>
<div class="b" style="left:909px;top:619px;width:301px;height:30px;background:#545454;border-radius:0px;border-radius:5px;"></div>
<div class="t" style="left:934px;top:621.5px;font-size:18px;line-height:25px;color:#e6e6e6;">Gobo Rotation</div>
<div class="t" style="right:411px;top:621.5px;font-size:18px;line-height:25px;color:#e6e6e6;">0.000</div>
<div class="b" style="left:909px;top:654px;width:301px;height:30px;background:#4772b3;border-radius:0px;border-radius:5px;"></div>
<div class="t" style="left:934px;top:656.5px;font-size:18px;line-height:25px;color:#e6e6e6;">Invert Shadow</div>
<div class="t" style="right:411px;top:656.5px;font-size:18px;line-height:25px;color:#e6e6e6;">1.000</div>
<div class="b" style="left:1242px;top:28px;width:358px;height:848px;background:#303030;border-radius:8px;"></div>
<div class="b" style="left:1243px;top:56px;width:30px;height:820px;background:#1d1d1d;border-radius:0px;border-radius:0 0 0 8px;"></div>
<div class="b" style="left:1273px;top:56px;width:327px;height:820px;background:#2e2e2e;border-radius:0px;border-radius:0 0 8px 0;"></div>
<div class="b" style="left:1253px;top:32px;width:32px;height:21px;background:#2a2a2a;border-radius:5px;"></div>
<svg class="b" style="left:1255px;top:33px;" width="32" height="20" viewBox="0 0 32 20"><rect x="2" y="3" width="14" height="6" rx="3" fill="none" stroke="#e6e6e6" stroke-width="1.4"/><rect x="2" y="11" width="14" height="6" rx="3" fill="none" stroke="#e6e6e6" stroke-width="1.4"/><rect x="3" y="4.2" width="7" height="3.6" rx="1.8" fill="#e6e6e6"/><rect x="3" y="12.2" width="10" height="3.6" rx="1.8" fill="#e6e6e6"/><path d="M20 9 l2.5 2.5 l2.5 -2.5" fill="none" stroke="#e0e0e0" stroke-width="1.2"/></svg>
<div class="b" style="left:1359px;top:31px;width:127px;height:22px;background:#1f1f1f;border-radius:5px;"></div>
<svg class="b" style="left:1362px;top:33px;" width="20" height="20" viewBox="0 0 20 20"><circle cx="11" cy="8" r="5" fill="none" stroke="#d0d0d0" stroke-width="1.4"/><path d="M7.5 11.5 L3 16" stroke="#d0d0d0" stroke-width="1.5"/></svg>
<div class="t" style="left:1387px;top:33.0px;font-size:13px;line-height:18px;color:#6e6e6e;">Search</div>
<div class="b" style="left:1568px;top:32px;width:22px;height:21px;background:#2a2a2a;border-radius:5px;"></div>
<svg class="b" style="left:1573px;top:37px;" width="12" height="12" viewBox="0 0 12 12"><path d="M2 4 l4 4 l4 -4" fill="none" stroke="#e0e0e0" stroke-width="1.3"/></svg>
<svg class="b" style="left:1249px;top:71px;" width="20" height="18" viewBox="0 0 20 18"><path d="M5 1 V9" stroke="#cfcfcf" stroke-width="1.7"/><path d="M2 10 H8 V13.5 Q8 17 5 17 Q2 17 2 13.5 Z" fill="#cfcfcf"/><path d="M11 1 Q9.3 2.5 9.3 5 Q9.3 7.8 12.5 8.6 V15.8 Q12.5 17.2 14 17.2 Q15.5 17.2 15.5 15.8 V8.6 Q18.7 7.8 18.7 5 Q18.7 2.5 17 1 V4.5 Q17 5.8 14 5.8 Q11 5.8 11 4.5 Z" fill="#cfcfcf"/></svg>
<svg class="b" style="left:1249px;top:110px;" width="20" height="18" viewBox="0 0 20 18"><rect x="2" y="4.5" width="16" height="12" rx="1" fill="none" stroke="#cfcfcf" stroke-width="1.6"/><rect x="6.5" y="2" width="5" height="2.5" fill="#cfcfcf"/><path d="M4.5 7.5 H13 M4.5 10.5 H13 M4.5 13.5 H13" stroke="#cfcfcf" stroke-width="1"/><path d="M13.5 5 V16" stroke="#cfcfcf" stroke-width="1.2"/><circle cx="16" cy="9" r="1" fill="#cfcfcf"/><circle cx="16" cy="13" r="1" fill="#cfcfcf"/><circle cx="16.5" cy="1.5" r="0.7" fill="#cfcfcf"/></svg>
<svg class="b" style="left:1249px;top:140px;" width="20" height="18" viewBox="0 0 20 18"><rect x="2.5" y="1" width="15" height="5" rx="1" fill="#d0d0d0"/><rect x="4.5" y="6" width="11" height="10" fill="#8c8c8c"/><path d="M5.5 15.5 L10 9.5 L14.5 15.5 Z" fill="#1d1d1d"/><circle cx="13" cy="8.5" r="0.9" fill="#1d1d1d"/></svg>
<svg class="b" style="left:1249px;top:171px;" width="20" height="18" viewBox="0 0 20 18"><path d="M4.5 5 V14 H13.5" fill="none" stroke="#9a9a9a" stroke-width="1.3"/><path d="M2 7.5 V16.5 H11" fill="none" stroke="#7a7a7a" stroke-width="1.3"/><rect x="6.5" y="1.5" width="11" height="10" fill="#d0d0d0"/><path d="M7.5 11 L11 5.5 L14.5 11 Z" fill="#1d1d1d"/><circle cx="15" cy="4" r="1" fill="#1d1d1d"/></svg>
<svg class="b" style="left:1249px;top:202px;" width="20" height="18" viewBox="0 0 20 18"><path d="M6.5 1.5 L2 10.5 Q1.2 14.5 5 14.5 L7.5 14.5 Q6 12 7.2 9.5 L8 8.5 Z" fill="#cfcfcf"/><circle cx="10.8" cy="12.2" r="3.9" fill="none" stroke="#cfcfcf" stroke-width="1.5"/><circle cx="12.5" cy="3.5" r="2" fill="#cfcfcf"/></svg>
<svg class="b" style="left:1249px;top:233px;" width="20" height="18" viewBox="0 0 20 18"><circle cx="10" cy="9" r="6.3" fill="none" stroke="#c0606c" stroke-width="1.5"/><path d="M6.5 5 Q9.5 4.5 9 7.5 Q7 8 8.5 10.5 Q7 11.5 7.5 14 Q5 12 4.5 9 Z M12 9.5 Q14.5 9 15 11.5 Q14 14 12 14.5 Q12.5 12 12 9.5 Z" fill="#c0606c"/><path d="M2.5 16.5 L4.5 14.5 M15.5 3.5 L17.5 1.5" stroke="#c0606c" stroke-width="1.3"/></svg>
<svg class="b" style="left:1249px;top:272px;" width="20" height="18" viewBox="0 0 20 18"><rect x="3" y="2" width="14" height="4" fill="none" stroke="#cfcfcf" stroke-width="1.4"/><path d="M4 6 V15.5 H16 V6" fill="none" stroke="#cfcfcf" stroke-width="1.6"/><path d="M8.5 9 H11.5" stroke="#cfcfcf" stroke-width="1.6"/></svg>
<svg class="b" style="left:1249px;top:311px;" width="20" height="18" viewBox="0 0 20 18"><path d="M2 5 V2 H5 M15 2 H18 V5 M2 13 V16 H5 M15 16 H18 V13" fill="none" stroke="#8a6a4a" stroke-width="1.2"/><rect x="5" y="4.5" width="10" height="9" fill="#e09a50"/></svg>
<svg class="b" style="left:1249px;top:342px;" width="20" height="18" viewBox="0 0 20 18"><path d="M15.5 6 A6.5 6.5 0 1 0 16 12" fill="none" stroke="#6a88d0" stroke-width="1.3"/><circle cx="10" cy="9.5" r="3" fill="#8aa6ee"/><circle cx="15.8" cy="3.5" r="1.9" fill="#8aa6ee"/></svg>
<svg class="b" style="left:1249px;top:372px;" width="20" height="18" viewBox="0 0 20 18"><path d="M3.5 14.5 Q1 11 4.5 7.5 L13.5 2 Q17.5 2 17 5.5 L12 14.5 Q8 18 3.5 14.5 Z" fill="none" stroke="#6a88d0" stroke-width="1.4"/><circle cx="8.3" cy="10.5" r="3" fill="none" stroke="#8aa6ee" stroke-width="1.4"/><circle cx="8.3" cy="10.5" r="1.1" fill="#8aa6ee"/><circle cx="14" cy="4.8" r="0.9" fill="#8aa6ee"/></svg>
<div class="b" style="left:1245px;top:397px;width:28px;height:28px;background:#303030;border-radius:5px;"></div>
<svg class="b" style="left:1249px;top:403px;" width="20" height="18" viewBox="0 0 20 18"><path d="M7 13.5 Q3.5 11 3.5 7.5 Q3.5 1.5 10 1.5 Q16.5 1.5 16.5 7.5 Q16.5 11 13 13.5 V15 H7 Z" fill="none" stroke="#2fbf8f" stroke-width="1.6"/><path d="M8 17 H12" stroke="#2fbf8f" stroke-width="1.5"/><path d="M7 6 L8.5 9 L10 7 L11.5 9 L13 6" fill="none" stroke="#2fbf8f" stroke-width="1.1"/></svg>
<svg class="b" style="left:1286px;top:65px;" width="18" height="18" viewBox="0 0 18 18"><path d="M1 5 V1 H5 M13 1 H17 V5 M1 13 V17 H5 M13 17 H17 V13" fill="none" stroke="#cfcfcf" stroke-width="1.2"/><rect x="4.5" y="4.5" width="9" height="9" fill="#e6e6e6"/></svg>
<div class="t" style="left:1314px;top:64.5px;font-size:14px;line-height:19px;color:#e0e0e0;">Trees 3</div>
<svg class="b" style="left:1379px;top:68px;" width="12" height="12" viewBox="0 0 12 12"><path d="M3 1 l5 5 l-5 5" fill="none" stroke="#d0d0d0" stroke-width="1.3"/></svg>
<svg class="b" style="left:1399px;top:64px;" width="20" height="20" viewBox="0 0 18 18"><path d="M5.5 13 Q3.5 9 5.5 6.5 L16 2.5 L13.5 12.5 Q10 15.5 5.5 13 Z" fill="none" stroke="#dcdcdc" stroke-width="1.3" stroke-linejoin="round"/><path d="M2 17 L4 15 M5 14 L7 12 M8 11 L10.5 8.5" stroke="#dcdcdc" stroke-width="1.2"/></svg>
<div class="t" style="left:1429px;top:64.5px;font-size:14px;line-height:19px;color:#e0e0e0;">Tree 1 Gobo.010</div>
<svg class="b" style="left:1569px;top:64px;" width="20" height="20" viewBox="0 0 20 20"><path d="M9.5 2.5 L15.5 8.5 L13.5 9.5 L10.5 12.5 L10.5 15 L3 7.5 L5.5 7.5 L8.5 4.5 Z" fill="none" stroke="#c0c0c0" stroke-width="1.2" stroke-linejoin="round"/><path d="M6.5 11.5 L1.5 16.5" stroke="#c0c0c0" stroke-width="1.2"/></svg>
<div class="b" style="left:1284px;top:105px;width:305px;height:23px;background:#282828;border-radius:5px;"></div>
<div class="b" style="left:1322px;top:105px;width:243px;height:23px;background:#1d1d1d;border-radius:0px;"></div>
<div class="b" style="left:1565px;top:105px;width:24px;height:23px;background:#4a4a4a;border-radius:0px;border-radius:0 5px 5px 0;"></div>
<svg class="b" style="left:1287px;top:107px;" width="20" height="20" viewBox="0 0 18 18"><path d="M5.5 13 Q3.5 9 5.5 6.5 L16 2.5 L13.5 12.5 Q10 15.5 5.5 13 Z" fill="none" stroke="#dcdcdc" stroke-width="1.3" stroke-linejoin="round"/><path d="M2 17 L4 15 M5 14 L7 12 M8 11 L10.5 8.5" stroke="#dcdcdc" stroke-width="1.2"/></svg>
<svg class="b" style="left:1308px;top:111px;" width="12" height="12" viewBox="0 0 12 12"><path d="M2 4 l4 4 l4 -4" fill="none" stroke="#e0e0e0" stroke-width="1.3"/></svg>
<div class="t" style="left:1331px;top:107.5px;font-size:14px;line-height:19px;color:#e0e0e0;">Tree 1 Gobo.010</div>
<svg class="b" style="left:1567px;top:107px;" width="20" height="20" viewBox="0 0 20 20"><path d="M10 2.5 Q13 4.5 17 4.5 V10 Q17 15 10 18 Q3 15 3 10 V4.5 Q7 4.5 10 2.5 Z" fill="none" stroke="#9a9a9a" stroke-width="1.2"/></svg>
<div class="b" style="left:1283px;top:141px;width:307px;height:418px;background:#3d3d3d;border-radius:6px;"></div>
<svg class="b" style="left:1292px;top:150px;" width="14" height="12" viewBox="0 0 14 12"><path d="M2 3 l5 5 l5 -5" fill="none" stroke="#d6d6d6" stroke-width="1.3"/></svg>
<div class="t" style="left:1308px;top:146.5px;font-size:14px;line-height:19px;color:#e0e0e0;">Light</div>
<svg class="b" style="left:1564px;top:152px;" width="18" height="8" viewBox="0 0 18 8"><circle cx="1.0" cy="1" r="0.7" fill="#8a8a8a"/><circle cx="1.0" cy="5" r="0.7" fill="#8a8a8a"/><circle cx="5.3" cy="1" r="0.7" fill="#8a8a8a"/><circle cx="5.3" cy="5" r="0.7" fill="#8a8a8a"/><circle cx="9.6" cy="1" r="0.7" fill="#8a8a8a"/><circle cx="9.6" cy="5" r="0.7" fill="#8a8a8a"/><circle cx="13.9" cy="1" r="0.7" fill="#8a8a8a"/><circle cx="13.9" cy="5" r="0.7" fill="#8a8a8a"/></svg>
<div class="b" style="left:1294px;top:179px;width:284px;height:25px;background:#4d4d4d;border-radius:5px;"></div>
<div class="b" style="left:1436px;top:179px;width:71px;height:25px;background:#4772b3;border-radius:0px;"></div>
<div class="b" style="left:1364px;top:179px;width:1px;height:25px;background:#444;border-radius:0px;"></div>
<div class="b" style="left:1507px;top:179px;width:1px;height:25px;background:#444;border-radius:0px;"></div>
<svg class="b" style="left:1297px;top:182px;" width="20" height="20" viewBox="0 0 20 20"><circle cx="10" cy="9" r="7" fill="none" stroke="#e0e0e0" stroke-width="1.2" stroke-dasharray="36 8" transform="rotate(60 10 9)"/><circle cx="10" cy="8.5" r="1.6" fill="none" stroke="#e0e0e0" stroke-width="1"/><path d="M10 10.5 V17" stroke="#e0e0e0" stroke-width="1" stroke-dasharray="1.5 1.2"/></svg>
<div class="t" style="left:1324px;top:181.5px;font-size:14px;line-height:19px;color:#e0e0e0;">Point</div>
<svg class="b" style="left:1369px;top:182px;" width="20" height="20" viewBox="0 0 20 20"><circle cx="10" cy="10" r="4" fill="none" stroke="#e0e0e0" stroke-width="1.2"/><path d="M16.0 10.0 L19.0 10.0" stroke="#e0e0e0" stroke-width="1.1"/><path d="M14.2 14.2 L16.4 16.4" stroke="#e0e0e0" stroke-width="1.1"/><path d="M10.0 16.0 L10.0 19.0" stroke="#e0e0e0" stroke-width="1.1"/><path d="M5.8 14.2 L3.6 16.4" stroke="#e0e0e0" stroke-width="1.1"/><path d="M4.0 10.0 L1.0 10.0" stroke="#e0e0e0" stroke-width="1.1"/><path d="M5.8 5.8 L3.6 3.6" stroke="#e0e0e0" stroke-width="1.1"/><path d="M10.0 4.0 L10.0 1.0" stroke="#e0e0e0" stroke-width="1.1"/><path d="M14.2 5.8 L16.4 3.6" stroke="#e0e0e0" stroke-width="1.1"/></svg>
<div class="t" style="left:1399px;top:181.5px;font-size:14px;line-height:19px;color:#e0e0e0;">Sun</div>
<svg class="b" style="left:1440px;top:181px;" width="22" height="22" viewBox="0 0 18 18"><path d="M5.5 13 Q3.5 9 5.5 6.5 L16 2.5 L13.5 12.5 Q10 15.5 5.5 13 Z" fill="none" stroke="#f4f4f4" stroke-width="1.3" stroke-linejoin="round"/><path d="M2 17 L4 15 M5 14 L7 12 M8 11 L10.5 8.5" stroke="#f4f4f4" stroke-width="1.2"/></svg>
<div class="t" style="left:1468px;top:181.5px;font-size:14px;line-height:19px;color:#ffffff;">Spot</div>
<svg class="b" style="left:1512px;top:182px;" width="20" height="20" viewBox="0 0 20 20"><path d="M3 5 L12 3 L17 14 L8 16 Z" fill="none" stroke="#e0e0e0" stroke-width="1.2" stroke-linejoin="round"/><path d="M2 17 L8 11" stroke="#e0e0e0" stroke-width="1" stroke-dasharray="1.5 1.2"/></svg>
<div class="t" style="left:1540px;top:181.5px;font-size:14px;line-height:19px;color:#e0e0e0;">Area</div>
<div class="t" style="right:198px;top:211.5px;font-size:14px;line-height:19px;color:#e0e0e0;">Temperature</div>
<div class="b" style="left:1414px;top:213px;width:17px;height:16px;background:#4a4a4a;border-radius:3px;"></div>
<div class="b" style="left:1438px;top:210px;width:117px;height:23px;background:#424242;border-radius:0px;border-radius:5px 5px 5px 5px;"></div>
<div class="t" style="left:1438.0px;width:117px;text-align:center;top:211.5px;font-size:14px;line-height:19px;color:#7a7a7a;">6500 K</div>
<svg class="b" style="left:1563px;top:217px;" width="8" height="8" viewBox="0 0 8 8"><circle cx="4" cy="4" r="2.4" fill="#555"/></svg>
<div class="t" style="right:207px;top:237.5px;font-size:14px;line-height:19px;color:#e0e0e0;">Color</div>
<div class="b" style="left:1404px;top:236px;width:151px;height:23px;background:#ffffff;border-radius:5px;"></div>
<svg class="b" style="left:1563px;top:243px;" width="8" height="8" viewBox="0 0 8 8"><circle cx="4" cy="4" r="2.4" fill="#e6e6e6"/></svg>
<div class="t" style="right:207px;top:280.5px;font-size:14px;line-height:19px;color:#e0e0e0;">Power</div>
<div class="b" style="left:1404px;top:279px;width:151px;height:23px;background:#545454;border-radius:0px;border-radius:5px 5px 5px 5px;"></div>
<div class="t" style="left:1404.0px;width:151px;text-align:center;top:280.5px;font-size:14px;line-height:19px;color:#e0e0e0;">100.000</div>
<svg class="b" style="left:1563px;top:286px;" width="8" height="8" viewBox="0 0 8 8"><circle cx="4" cy="4" r="2.4" fill="#e6e6e6"/></svg>
<div class="t" style="right:207px;top:306.5px;font-size:14px;line-height:19px;color:#e0e0e0;">Exposure</div>
<div class="b" style="left:1404px;top:305px;width:151px;height:23px;background:#545454;border-radius:0px;border-radius:5px 5px 5px 5px;"></div>
<div class="b" style="left:1404px;top:305px;width:75px;height:23px;background:#4772b3;border-radius:0px;border-radius:5px 0 0 5px;"></div>
<div class="t" style="left:1404.0px;width:151px;text-align:center;top:306.5px;font-size:14px;line-height:19px;color:#e0e0e0;">0.000</div>
<svg class="b" style="left:1563px;top:312px;" width="8" height="8" viewBox="0 0 8 8"><circle cx="4" cy="4" r="2.4" fill="#e6e6e6"/></svg>
<div class="b" style="left:1404px;top:334px;width:16px;height:16px;background:#4772b3;border-radius:4px;"></div>
<svg class="b" style="left:1404px;top:334px;" width="16" height="16" viewBox="0 0 16 16"><path d="M3.5 8 L6.8 11.5 L12.5 4.5" fill="none" stroke="#fff" stroke-width="1.8"/></svg>
<div class="t" style="left:1424px;top:332.5px;font-size:14px;line-height:19px;color:#e0e0e0;">Normalize</div>
<div class="t" style="right:207px;top:375.5px;font-size:14px;line-height:19px;color:#e0e0e0;">Radius</div>
<div class="b" style="left:1404px;top:374px;width:151px;height:23px;background:#545454;border-radius:0px;border-radius:5px 5px 5px 5px;"></div>
<div class="t" style="left:1404.0px;width:151px;text-align:center;top:375.5px;font-size:14px;line-height:19px;color:#e0e0e0;">0 m</div>
<svg class="b" style="left:1563px;top:381px;" width="8" height="8" viewBox="0 0 8 8"><circle cx="4" cy="4" r="2.4" fill="#e6e6e6"/></svg>
<div class="b" style="left:1404px;top:403px;width:16px;height:16px;background:#4772b3;border-radius:4px;"></div>
<svg class="b" style="left:1404px;top:403px;" width="16" height="16" viewBox="0 0 16 16"><path d="M3.5 8 L6.8 11.5 L12.5 4.5" fill="none" stroke="#fff" stroke-width="1.8"/></svg>
<div class="t" style="left:1424px;top:401.5px;font-size:14px;line-height:19px;color:#e0e0e0;">Soft Falloff</div>
<svg class="b" style="left:1563px;top:407px;" width="8" height="8" viewBox="0 0 8 8"><circle cx="4" cy="4" r="2.4" fill="#e6e6e6"/></svg>
<div class="b" style="left:1283px;top:463px;width:307px;height:96px;background:#393939;border-radius:0px;border-radius:0 0 6px 6px;"></div>
<svg class="b" style="left:1308px;top:444px;" width="14" height="12" viewBox="0 0 14 12"><path d="M2 3 l5 5 l-5 5" transform="rotate(90 7 6) translate(0 -1)" fill="none" stroke="#d6d6d6" stroke-width="1.3"/></svg>
<div class="t" style="left:1325px;top:439.5px;font-size:14px;line-height:19px;color:#e0e0e0;">Beam Shape</div>
<div class="t" style="right:207px;top:474.5px;font-size:14px;line-height:19px;color:#e0e0e0;">Spot Size</div>
<div class="b" style="left:1404px;top:473px;width:151px;height:23px;background:#545454;border-radius:0px;border-radius:5px 5px 5px 5px;"></div>
<div class="t" style="left:1404.0px;width:151px;text-align:center;top:474.5px;font-size:14px;line-height:19px;color:#e0e0e0;">51.7°</div>
<svg class="b" style="left:1563px;top:480px;" width="8" height="8" viewBox="0 0 8 8"><circle cx="4" cy="4" r="2.4" fill="#e6e6e6"/></svg>
<div class="t" style="right:207px;top:500.5px;font-size:14px;line-height:19px;color:#e0e0e0;">Blend</div>
<div class="b" style="left:1404px;top:499px;width:151px;height:23px;background:#545454;border-radius:0px;border-radius:5px 5px 5px 5px;"></div>
<div class="b" style="left:1404px;top:499px;width:22px;height:23px;background:#4772b3;border-radius:0px;border-radius:5px 0 0 5px;"></div>
<div class="t" style="left:1404.0px;width:151px;text-align:center;top:500.5px;font-size:14px;line-height:19px;color:#e0e0e0;">0.150</div>
<svg class="b" style="left:1563px;top:506px;" width="8" height="8" viewBox="0 0 8 8"><circle cx="4" cy="4" r="2.4" fill="#e6e6e6"/></svg>
<div class="b" style="left:1404px;top:528px;width:16px;height:16px;background:#4d4d4d;border-radius:4px;"></div>
<div class="t" style="left:1424px;top:526.5px;font-size:14px;line-height:19px;color:#e0e0e0;">Show Cone</div>
<svg class="b" style="left:1563px;top:532px;" width="8" height="8" viewBox="0 0 8 8"><circle cx="4" cy="4" r="2.4" fill="#e6e6e6"/></svg>
<div class="b" style="left:1283px;top:561px;width:307px;height:312px;background:#3d3d3d;border-radius:6px;"></div>
<svg class="b" style="left:1292px;top:570px;" width="14" height="12" viewBox="0 0 14 12"><path d="M2 3 l5 5 l5 -5" fill="none" stroke="#d6d6d6" stroke-width="1.3"/></svg>
<div class="t" style="left:1308px;top:566.5px;font-size:14px;line-height:19px;color:#e0e0e0;">Nodes</div>
<svg class="b" style="left:1564px;top:572px;" width="18" height="8" viewBox="0 0 18 8"><circle cx="1.0" cy="1" r="0.7" fill="#8a8a8a"/><circle cx="1.0" cy="5" r="0.7" fill="#8a8a8a"/><circle cx="5.3" cy="1" r="0.7" fill="#8a8a8a"/><circle cx="5.3" cy="5" r="0.7" fill="#8a8a8a"/><circle cx="9.6" cy="1" r="0.7" fill="#8a8a8a"/><circle cx="9.6" cy="5" r="0.7" fill="#8a8a8a"/><circle cx="13.9" cy="1" r="0.7" fill="#8a8a8a"/><circle cx="13.9" cy="5" r="0.7" fill="#8a8a8a"/></svg>
<div class="t" style="right:207px;top:601.5px;font-size:14px;line-height:19px;color:#e0e0e0;">Surface</div>
<div class="b" style="left:1404px;top:600px;width:151px;height:22px;background:#282828;border-radius:5px;"></div>
<svg class="b" style="left:1409px;top:604px;" width="14" height="14" viewBox="0 0 14 14"><circle cx="7" cy="7" r="4.6" fill="#4fc04f"/></svg>
<div class="t" style="left:1428px;top:601.5px;font-size:14px;line-height:19px;color:#e0e0e0;">Trees 3</div>
<div class="t" style="right:207px;top:644.5px;font-size:14px;line-height:19px;color:#e0e0e0;">Light Color</div>
<div class="b" style="left:1404px;top:643px;width:24px;height:23px;background:#282828;border-radius:0px;border-radius:5px 0 0 5px;"></div>
<svg class="b" style="left:1409px;top:647px;" width="14" height="14" viewBox="0 0 14 14"><circle cx="7" cy="7" r="4.2" fill="#c7c729"/></svg>
<div class="b" style="left:1428px;top:643px;width:127px;height:23px;background:#ffffff;border-radius:0px;border-radius:0 5px 5px 0;"></div>
<svg class="b" style="left:1563px;top:650px;" width="8" height="8" viewBox="0 0 8 8"><circle cx="4" cy="4" r="2.4" fill="#e6e6e6"/></svg>
<div class="t" style="right:207px;top:674.5px;font-size:14px;line-height:19px;color:#e0e0e0;">Light Brightness</div>
<div class="b" style="left:1404px;top:673px;width:24px;height:23px;background:#282828;border-radius:0px;border-radius:5px 0 0 5px;"></div>
<svg class="b" style="left:1409px;top:677px;" width="14" height="14" viewBox="0 0 14 14"><circle cx="7" cy="7" r="4.2" fill="#a1a1a1"/></svg>
<div class="b" style="left:1428px;top:673px;width:127px;height:23px;background:#545454;border-radius:0px;border-radius:0px 5px 5px 0px;"></div>
<div class="t" style="left:1428.0px;width:127px;text-align:center;top:674.5px;font-size:14px;line-height:19px;color:#e0e0e0;">1.000</div>
<svg class="b" style="left:1563px;top:680px;" width="8" height="8" viewBox="0 0 8 8"><circle cx="4" cy="4" r="2.4" fill="#e6e6e6"/></svg>
<div class="t" style="right:207px;top:704.5px;font-size:14px;line-height:19px;color:#e0e0e0;">Gobo Scale</div>
<div class="b" style="left:1404px;top:703px;width:24px;height:23px;background:#282828;border-radius:0px;border-radius:5px 0 0 5px;"></div>
<svg class="b" style="left:1409px;top:707px;" width="14" height="14" viewBox="0 0 14 14"><circle cx="7" cy="7" r="4.2" fill="#a1a1a1"/></svg>
<div class="b" style="left:1428px;top:703px;width:127px;height:23px;background:#545454;border-radius:0px;border-radius:0px 5px 5px 0px;"></div>
<div class="t" style="left:1428.0px;width:127px;text-align:center;top:704.5px;font-size:14px;line-height:19px;color:#e0e0e0;">1.000</div>
<svg class="b" style="left:1563px;top:710px;" width="8" height="8" viewBox="0 0 8 8"><circle cx="4" cy="4" r="2.4" fill="#e6e6e6"/></svg>
<div class="t" style="right:207px;top:734.5px;font-size:14px;line-height:19px;color:#e0e0e0;">Gobo Location</div>
<div class="b" style="left:1404px;top:733px;width:24px;height:23px;background:#282828;border-radius:5px;"></div>
<svg class="b" style="left:1409px;top:737px;" width="14" height="14" viewBox="0 0 14 14"><circle cx="7" cy="7" r="4.2" fill="#6363c7"/></svg>
<div class="b" style="left:1435px;top:732px;width:120px;height:72px;background:#545454;border-radius:5px;"></div>
<div class="t" style="left:1448.0px;width:20px;text-align:center;top:734.5px;font-size:14px;line-height:19px;color:#e0e0e0;">X</div>
<div class="t" style="right:61px;top:734.5px;font-size:14px;line-height:19px;color:#e0e0e0;">0.5 m</div>
<svg class="b" style="left:1563px;top:740px;" width="8" height="8" viewBox="0 0 8 8"><circle cx="4" cy="4" r="2.4" fill="#e6e6e6"/></svg>
<div class="t" style="left:1448.0px;width:20px;text-align:center;top:758.5px;font-size:14px;line-height:19px;color:#e0e0e0;">Y</div>
<div class="t" style="right:61px;top:758.5px;font-size:14px;line-height:19px;color:#e0e0e0;">0.5 m</div>
<svg class="b" style="left:1563px;top:764px;" width="8" height="8" viewBox="0 0 8 8"><circle cx="4" cy="4" r="2.4" fill="#e6e6e6"/></svg>
<div class="t" style="left:1448.0px;width:20px;text-align:center;top:782.5px;font-size:14px;line-height:19px;color:#e0e0e0;">Z</div>
<div class="t" style="right:61px;top:782.5px;font-size:14px;line-height:19px;color:#e0e0e0;">0 m</div>
<svg class="b" style="left:1563px;top:788px;" width="8" height="8" viewBox="0 0 8 8"><circle cx="4" cy="4" r="2.4" fill="#e6e6e6"/></svg>
<div class="b" style="left:1435px;top:756px;width:120px;height:1px;background:#474747;border-radius:0px;"></div>
<div class="b" style="left:1435px;top:780px;width:120px;height:1px;background:#474747;border-radius:0px;"></div>
<div class="t" style="right:207px;top:812.5px;font-size:14px;line-height:19px;color:#e0e0e0;">Gobo Rotation</div>
<div class="b" style="left:1404px;top:811px;width:24px;height:23px;background:#282828;border-radius:0px;border-radius:5px 0 0 5px;"></div>
<svg class="b" style="left:1409px;top:815px;" width="14" height="14" viewBox="0 0 14 14"><circle cx="7" cy="7" r="4.2" fill="#a1a1a1"/></svg>
<div class="b" style="left:1428px;top:811px;width:127px;height:23px;background:#545454;border-radius:0px;border-radius:0px 5px 5px 0px;"></div>
<div class="t" style="left:1428.0px;width:127px;text-align:center;top:812.5px;font-size:14px;line-height:19px;color:#e0e0e0;">0.000</div>
<svg class="b" style="left:1563px;top:818px;" width="8" height="8" viewBox="0 0 8 8"><circle cx="4" cy="4" r="2.4" fill="#e6e6e6"/></svg>
<div class="t" style="right:207px;top:843.5px;font-size:14px;line-height:19px;color:#e0e0e0;">Invert Shadow</div>
<div class="b" style="left:1404px;top:842px;width:24px;height:23px;background:#282828;border-radius:0px;border-radius:5px 0 0 5px;"></div>
<svg class="b" style="left:1409px;top:846px;" width="14" height="14" viewBox="0 0 14 14"><circle cx="7" cy="7" r="4.2" fill="#a1a1a1"/></svg>
<div class="b" style="left:1428px;top:842px;width:127px;height:23px;background:#4772b3;border-radius:0px;border-radius:0px 5px 5px 0px;"></div>
<div class="t" style="left:1428.0px;width:127px;text-align:center;top:843.5px;font-size:14px;line-height:19px;color:#e0e0e0;">1.000</div>
<svg class="b" style="left:1563px;top:849px;" width="8" height="8" viewBox="0 0 8 8"><circle cx="4" cy="4" r="2.4" fill="#e6e6e6"/></svg>
<div class="b" style="left:1594px;top:260px;width:3px;height:600px;background:#3a3a3a;border-radius:2px;"></div>
</body></html>
